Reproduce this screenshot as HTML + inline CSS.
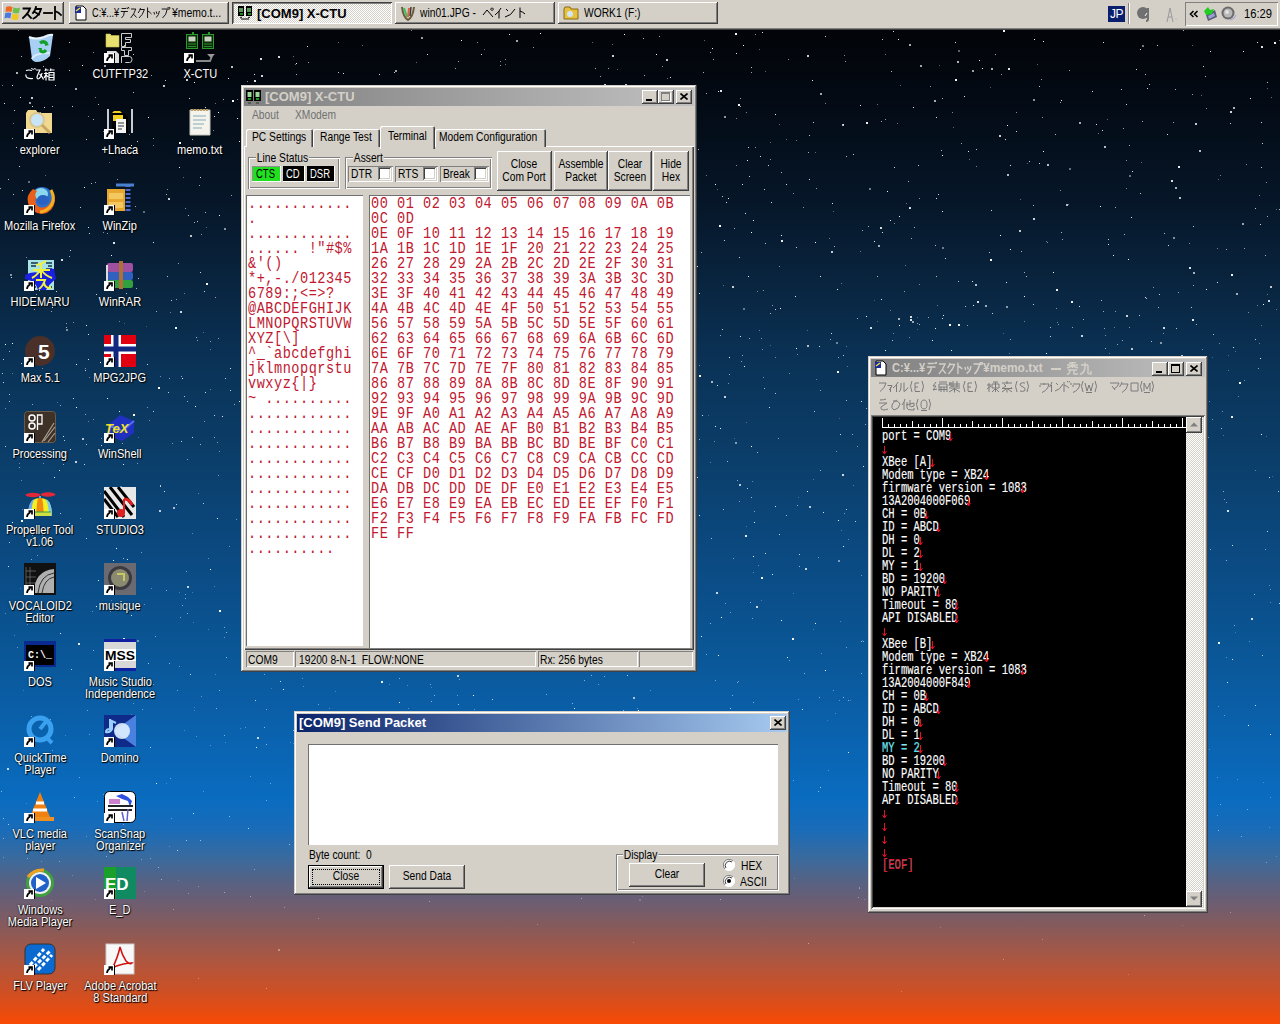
<!DOCTYPE html><html><head><meta charset="utf-8"><style>
*{box-sizing:border-box;margin:0;padding:0}
html,body{width:1280px;height:1024px;overflow:hidden}
body{position:relative;font-family:"Liberation Sans",sans-serif;font-size:12px;color:#000;
background:linear-gradient(to bottom,#d4d0c8 0,#d4d0c8 30px,#020408 30px,#030a14 100px,#061628 200px,#09243e 280px,#0a3256 360px,#0b3e6a 460px,#0b4a82 560px,#0a5696 650px,#0a60aa 720px,#0a6cc0 800px,#1a6cb8 830px,#3c6a9c 860px,#556284 880px,#6a5e74 900px,#8a5a58 930px,#ac5640 960px,#cc5026 990px,#e44c12 1010px,#fa4a04 1024px)}
.a{position:absolute}
.u{position:absolute;white-space:pre;font-size:13px;transform:scaleX(.79);transform-origin:0 0;line-height:14px}
.raised{background:#d4d0c8;box-shadow:inset -1px -1px #404040,inset 1px 1px #fff,inset -2px -2px #808080}
.win{position:absolute;background:#d4d0c8;box-shadow:inset -1px -1px #404040,inset 1px 1px #d4d0c8,inset -2px -2px #808080,inset 2px 2px #fff}
.sunk{box-shadow:inset 1px 1px #808080,inset -1px -1px #fff,inset 2px 2px #404040,inset -2px -2px #d4d0c8}
.thin{box-shadow:inset 1px 1px #808080,inset -1px -1px #fff}
.grp{position:absolute;border:1px solid #808080;box-shadow:1px 1px #fff,inset 1px 1px #fff}
.tbtn{position:absolute;width:16px;height:14px;background:#d4d0c8;box-shadow:inset -1px -1px #404040,inset 1px 1px #fff,inset -2px -2px #808080}
.lbl{position:absolute;color:#fff;font-size:12px;line-height:12px;text-align:center;white-space:pre;text-shadow:1px 1px 1px #000,0 0 2px #000}
</style></head><body>
<svg class="a" style="left:0;top:0" width="1280" height="1024"><rect x="98" y="104" width="1" height="1" fill="#fff" fill-opacity="0.73"/><rect x="185" y="594" width="1" height="1" fill="#fff" fill-opacity="0.43"/><rect x="457" y="675" width="2" height="2" fill="#fff" fill-opacity="0.73"/><rect x="812" y="80" width="1" height="1" fill="#fff" fill-opacity="0.91"/><rect x="370" y="135" width="1" height="1" fill="#fff" fill-opacity="0.59"/><rect x="1088" y="467" width="1" height="1" fill="#fff" fill-opacity="0.95"/><rect x="740" y="336" width="1" height="1" fill="#fff" fill-opacity="0.86"/><rect x="919" y="324" width="1" height="1" fill="#fff" fill-opacity="0.68"/><rect x="642" y="378" width="1" height="1" fill="#fff" fill-opacity="0.73"/><rect x="934" y="100" width="2" height="2" fill="#fff" fill-opacity="0.66"/><rect x="133" y="92" width="1" height="1" fill="#fff" fill-opacity="0.73"/><rect x="912" y="321" width="2" height="2" fill="#fff" fill-opacity="0.58"/><rect x="588" y="162" width="1" height="1" fill="#fff" fill-opacity="0.95"/><rect x="1016" y="112" width="1" height="1" fill="#fff" fill-opacity="0.53"/><rect x="1126" y="315" width="2" height="2" fill="#fff" fill-opacity="0.79"/><rect x="779" y="266" width="1" height="1" fill="#fff" fill-opacity="0.50"/><rect x="477" y="42" width="1" height="1" fill="#fff" fill-opacity="0.52"/><rect x="8" y="179" width="1" height="1" fill="#fff" fill-opacity="0.72"/><rect x="257" y="737" width="2" height="2" fill="#fff" fill-opacity="0.78"/><rect x="110" y="497" width="1" height="1" fill="#fff" fill-opacity="0.92"/><rect x="1145" y="431" width="1" height="1" fill="#fff" fill-opacity="0.66"/><rect x="820" y="93" width="2" height="2" fill="#fff" fill-opacity="0.64"/><rect x="225" y="378" width="1" height="1" fill="#fff" fill-opacity="0.72"/><rect x="1098" y="133" width="1" height="1" fill="#fff" fill-opacity="0.40"/><rect x="516" y="385" width="1" height="1" fill="#fff" fill-opacity="0.42"/><rect x="999" y="507" width="1" height="1" fill="#fff" fill-opacity="0.44"/><rect x="1081" y="335" width="2" height="2" fill="#fff" fill-opacity="0.80"/><rect x="342" y="394" width="1" height="1" fill="#fff" fill-opacity="0.86"/><rect x="820" y="787" width="1" height="1" fill="#fff" fill-opacity="0.67"/><rect x="59" y="58" width="1" height="1" fill="#fff" fill-opacity="0.48"/><rect x="1239" y="382" width="2" height="2" fill="#fff" fill-opacity="0.99"/><rect x="746" y="112" width="1" height="1" fill="#fff" fill-opacity="0.48"/><rect x="418" y="524" width="2" height="2" fill="#fff" fill-opacity="0.90"/><rect x="408" y="519" width="1" height="1" fill="#fff" fill-opacity="0.76"/><rect x="177" y="850" width="1" height="1" fill="#fff" fill-opacity="0.65"/><rect x="260" y="58" width="2" height="2" fill="#fff" fill-opacity="0.87"/><rect x="299" y="656" width="2" height="2" fill="#fff" fill-opacity="0.78"/><rect x="717" y="189" width="1" height="1" fill="#fff" fill-opacity="0.36"/><rect x="210" y="569" width="1" height="1" fill="#fff" fill-opacity="0.99"/><rect x="398" y="875" width="1" height="1" fill="#fff" fill-opacity="0.22"/><rect x="1026" y="276" width="1" height="1" fill="#fff" fill-opacity="0.70"/><rect x="268" y="92" width="1" height="1" fill="#fff" fill-opacity="0.65"/><rect x="1194" y="864" width="1" height="1" fill="#fff" fill-opacity="0.43"/><rect x="1027" y="163" width="1" height="1" fill="#fff" fill-opacity="0.36"/><rect x="8" y="824" width="1" height="1" fill="#fff" fill-opacity="0.66"/><rect x="1061" y="573" width="1" height="1" fill="#fff" fill-opacity="0.42"/><rect x="1147" y="88" width="1" height="1" fill="#fff" fill-opacity="0.85"/><rect x="1039" y="493" width="1" height="1" fill="#fff" fill-opacity="0.94"/><rect x="907" y="363" width="1" height="1" fill="#fff" fill-opacity="0.68"/><rect x="567" y="493" width="1" height="1" fill="#fff" fill-opacity="0.68"/><rect x="853" y="154" width="1" height="1" fill="#fff" fill-opacity="0.79"/><rect x="877" y="104" width="1" height="1" fill="#fff" fill-opacity="0.43"/><rect x="749" y="176" width="1" height="1" fill="#fff" fill-opacity="0.65"/><rect x="192" y="437" width="1" height="1" fill="#fff" fill-opacity="0.78"/><rect x="458" y="195" width="2" height="2" fill="#fff" fill-opacity="0.61"/><rect x="862" y="230" width="1" height="1" fill="#fff" fill-opacity="0.59"/><rect x="692" y="597" width="1" height="1" fill="#fff" fill-opacity="0.60"/><rect x="131" y="145" width="1" height="1" fill="#fff" fill-opacity="0.98"/><rect x="214" y="116" width="1" height="1" fill="#fff" fill-opacity="0.86"/><rect x="864" y="899" width="1" height="1" fill="#fff" fill-opacity="0.23"/><rect x="305" y="579" width="1" height="1" fill="#fff" fill-opacity="0.81"/><rect x="375" y="465" width="1" height="1" fill="#fff" fill-opacity="0.36"/><rect x="23" y="377" width="1" height="1" fill="#fff" fill-opacity="0.95"/><rect x="624" y="573" width="1" height="1" fill="#fff" fill-opacity="0.68"/><rect x="364" y="307" width="1" height="1" fill="#fff" fill-opacity="0.51"/><rect x="31" y="48" width="1" height="1" fill="#fff" fill-opacity="0.47"/><rect x="972" y="281" width="1" height="1" fill="#fff" fill-opacity="0.88"/><rect x="440" y="265" width="1" height="1" fill="#fff" fill-opacity="0.81"/><rect x="286" y="444" width="2" height="2" fill="#fff" fill-opacity="0.89"/><rect x="29" y="102" width="2" height="2" fill="#fff" fill-opacity="0.63"/><rect x="113" y="116" width="1" height="1" fill="#fff" fill-opacity="0.68"/><rect x="600" y="76" width="1" height="1" fill="#fff" fill-opacity="0.64"/><rect x="539" y="402" width="2" height="2" fill="#fff" fill-opacity="0.71"/><rect x="500" y="65" width="1" height="1" fill="#fff" fill-opacity="0.58"/><rect x="2" y="373" width="1" height="1" fill="#fff" fill-opacity="0.68"/><rect x="411" y="284" width="1" height="1" fill="#fff" fill-opacity="0.52"/><rect x="183" y="177" width="1" height="1" fill="#fff" fill-opacity="0.36"/><rect x="1199" y="571" width="1" height="1" fill="#fff" fill-opacity="0.93"/><rect x="1221" y="428" width="1" height="1" fill="#fff" fill-opacity="0.67"/><rect x="296" y="74" width="1" height="1" fill="#fff" fill-opacity="0.68"/><rect x="879" y="781" width="1" height="1" fill="#fff" fill-opacity="0.94"/><rect x="1032" y="612" width="1" height="1" fill="#fff" fill-opacity="0.89"/><rect x="1196" y="847" width="1" height="1" fill="#fff" fill-opacity="0.80"/><rect x="470" y="117" width="1" height="1" fill="#fff" fill-opacity="0.58"/><rect x="214" y="415" width="1" height="1" fill="#fff" fill-opacity="0.76"/><rect x="540" y="33" width="1" height="1" fill="#fff" fill-opacity="0.96"/><rect x="1096" y="124" width="1" height="1" fill="#fff" fill-opacity="0.83"/><rect x="543" y="270" width="1" height="1" fill="#fff" fill-opacity="0.83"/><rect x="942" y="535" width="1" height="1" fill="#fff" fill-opacity="0.94"/><rect x="406" y="109" width="1" height="1" fill="#fff" fill-opacity="0.77"/><rect x="623" y="666" width="1" height="1" fill="#fff" fill-opacity="0.39"/><rect x="1057" y="322" width="1" height="1" fill="#fff" fill-opacity="0.43"/><rect x="1124" y="234" width="1" height="1" fill="#fff" fill-opacity="0.66"/><rect x="1037" y="490" width="1" height="1" fill="#fff" fill-opacity="0.95"/><rect x="431" y="106" width="1" height="1" fill="#fff" fill-opacity="0.69"/><rect x="736" y="165" width="1" height="1" fill="#fff" fill-opacity="0.53"/><rect x="807" y="55" width="2" height="2" fill="#fff" fill-opacity="0.79"/><rect x="830" y="339" width="1" height="1" fill="#fff" fill-opacity="0.59"/><rect x="815" y="152" width="1" height="1" fill="#fff" fill-opacity="0.36"/><rect x="593" y="289" width="1" height="1" fill="#fff" fill-opacity="1.00"/><rect x="1206" y="108" width="1" height="1" fill="#fff" fill-opacity="0.53"/><rect x="584" y="680" width="1" height="1" fill="#fff" fill-opacity="0.52"/><rect x="1046" y="353" width="1" height="1" fill="#fff" fill-opacity="0.97"/><rect x="59" y="861" width="1" height="1" fill="#fff" fill-opacity="0.41"/><rect x="165" y="80" width="1" height="1" fill="#fff" fill-opacity="0.75"/><rect x="283" y="689" width="1" height="1" fill="#fff" fill-opacity="0.94"/><rect x="1126" y="160" width="1" height="1" fill="#fff" fill-opacity="0.53"/><rect x="523" y="786" width="1" height="1" fill="#fff" fill-opacity="0.61"/><rect x="488" y="338" width="1" height="1" fill="#fff" fill-opacity="0.43"/><rect x="331" y="106" width="2" height="2" fill="#fff" fill-opacity="0.67"/><rect x="450" y="493" width="2" height="2" fill="#fff" fill-opacity="0.64"/><rect x="185" y="208" width="1" height="1" fill="#fff" fill-opacity="0.51"/><rect x="41" y="797" width="1" height="1" fill="#fff" fill-opacity="0.83"/><rect x="430" y="415" width="1" height="1" fill="#fff" fill-opacity="0.67"/><rect x="1030" y="571" width="2" height="2" fill="#fff" fill-opacity="0.49"/><rect x="639" y="899" width="2" height="2" fill="#fff" fill-opacity="0.19"/><rect x="870" y="756" width="1" height="1" fill="#fff" fill-opacity="0.98"/><rect x="1003" y="30" width="2" height="2" fill="#fff" fill-opacity="0.95"/><rect x="919" y="284" width="1" height="1" fill="#fff" fill-opacity="0.45"/><rect x="936" y="117" width="1" height="1" fill="#fff" fill-opacity="0.86"/><rect x="476" y="613" width="1" height="1" fill="#fff" fill-opacity="0.55"/><rect x="895" y="745" width="1" height="1" fill="#fff" fill-opacity="0.55"/><rect x="1193" y="226" width="1" height="1" fill="#fff" fill-opacity="0.74"/><rect x="943" y="315" width="1" height="1" fill="#fff" fill-opacity="0.92"/><rect x="505" y="59" width="1" height="1" fill="#fff" fill-opacity="0.55"/><rect x="44" y="228" width="1" height="1" fill="#fff" fill-opacity="0.62"/><rect x="526" y="263" width="2" height="2" fill="#fff" fill-opacity="0.50"/><rect x="861" y="401" width="1" height="1" fill="#fff" fill-opacity="0.87"/><rect x="1033" y="99" width="2" height="2" fill="#fff" fill-opacity="0.55"/><rect x="397" y="266" width="1" height="1" fill="#fff" fill-opacity="0.93"/><rect x="1218" y="179" width="1" height="1" fill="#fff" fill-opacity="0.37"/><rect x="1220" y="175" width="1" height="1" fill="#fff" fill-opacity="0.47"/><rect x="390" y="219" width="1" height="1" fill="#fff" fill-opacity="0.65"/><rect x="638" y="710" width="1" height="1" fill="#fff" fill-opacity="0.99"/><rect x="906" y="203" width="1" height="1" fill="#fff" fill-opacity="0.40"/><rect x="424" y="419" width="1" height="1" fill="#fff" fill-opacity="0.88"/><rect x="885" y="119" width="1" height="1" fill="#fff" fill-opacity="0.59"/><rect x="914" y="227" width="1" height="1" fill="#fff" fill-opacity="0.66"/><rect x="841" y="283" width="1" height="1" fill="#fff" fill-opacity="0.38"/><rect x="126" y="293" width="1" height="1" fill="#fff" fill-opacity="0.74"/><rect x="743" y="308" width="2" height="2" fill="#fff" fill-opacity="0.38"/><rect x="7" y="768" width="2" height="2" fill="#fff" fill-opacity="0.76"/><rect x="133" y="54" width="1" height="1" fill="#fff" fill-opacity="0.82"/><rect x="1010" y="165" width="1" height="1" fill="#fff" fill-opacity="0.87"/><rect x="654" y="501" width="1" height="1" fill="#fff" fill-opacity="0.40"/><rect x="404" y="431" width="1" height="1" fill="#fff" fill-opacity="0.39"/><rect x="69" y="523" width="1" height="1" fill="#fff" fill-opacity="0.99"/><rect x="215" y="103" width="1" height="1" fill="#fff" fill-opacity="0.41"/><rect x="1020" y="756" width="1" height="1" fill="#fff" fill-opacity="0.44"/><rect x="943" y="665" width="1" height="1" fill="#fff" fill-opacity="0.70"/><rect x="248" y="828" width="1" height="1" fill="#fff" fill-opacity="0.72"/><rect x="763" y="290" width="1" height="1" fill="#fff" fill-opacity="0.51"/><rect x="502" y="271" width="2" height="2" fill="#fff" fill-opacity="0.73"/><rect x="668" y="96" width="2" height="2" fill="#fff" fill-opacity="0.68"/><rect x="473" y="695" width="1" height="1" fill="#fff" fill-opacity="0.99"/><rect x="209" y="34" width="1" height="1" fill="#fff" fill-opacity="0.90"/><rect x="765" y="71" width="1" height="1" fill="#fff" fill-opacity="0.38"/><rect x="153" y="411" width="1" height="1" fill="#fff" fill-opacity="0.74"/><rect x="12" y="138" width="1" height="1" fill="#fff" fill-opacity="0.58"/><rect x="76" y="407" width="1" height="1" fill="#fff" fill-opacity="1.00"/><rect x="78" y="643" width="2" height="2" fill="#fff" fill-opacity="0.88"/><rect x="670" y="448" width="1" height="1" fill="#fff" fill-opacity="0.55"/><rect x="416" y="62" width="1" height="1" fill="#fff" fill-opacity="0.39"/><rect x="1126" y="188" width="1" height="1" fill="#fff" fill-opacity="0.46"/><rect x="555" y="449" width="1" height="1" fill="#fff" fill-opacity="0.62"/><rect x="105" y="349" width="2" height="2" fill="#fff" fill-opacity="0.62"/><rect x="829" y="238" width="1" height="1" fill="#fff" fill-opacity="0.45"/><rect x="1129" y="175" width="2" height="2" fill="#fff" fill-opacity="0.41"/><rect x="1033" y="205" width="1" height="1" fill="#fff" fill-opacity="0.69"/><rect x="137" y="141" width="1" height="1" fill="#fff" fill-opacity="0.86"/><rect x="109" y="652" width="1" height="1" fill="#fff" fill-opacity="0.94"/><rect x="1270" y="734" width="1" height="1" fill="#fff" fill-opacity="0.86"/><rect x="1060" y="190" width="1" height="1" fill="#fff" fill-opacity="0.51"/><rect x="394" y="72" width="1" height="1" fill="#fff" fill-opacity="0.79"/><rect x="663" y="150" width="1" height="1" fill="#fff" fill-opacity="0.90"/><rect x="1193" y="285" width="1" height="1" fill="#fff" fill-opacity="0.64"/><rect x="1267" y="531" width="1" height="1" fill="#fff" fill-opacity="0.75"/><rect x="263" y="397" width="1" height="1" fill="#fff" fill-opacity="0.64"/><rect x="266" y="114" width="1" height="1" fill="#fff" fill-opacity="0.82"/><rect x="163" y="85" width="2" height="2" fill="#fff" fill-opacity="0.77"/><rect x="278" y="56" width="2" height="2" fill="#fff" fill-opacity="0.83"/><rect x="224" y="228" width="2" height="2" fill="#fff" fill-opacity="0.54"/><rect x="338" y="732" width="2" height="2" fill="#fff" fill-opacity="0.39"/><rect x="718" y="655" width="1" height="1" fill="#fff" fill-opacity="0.93"/><rect x="294" y="290" width="2" height="2" fill="#fff" fill-opacity="0.49"/><rect x="538" y="660" width="1" height="1" fill="#fff" fill-opacity="0.37"/><rect x="771" y="202" width="1" height="1" fill="#fff" fill-opacity="0.85"/><rect x="99" y="681" width="2" height="2" fill="#fff" fill-opacity="0.64"/><rect x="1067" y="623" width="2" height="2" fill="#fff" fill-opacity="0.51"/><rect x="1097" y="674" width="1" height="1" fill="#fff" fill-opacity="0.59"/><rect x="769" y="407" width="1" height="1" fill="#fff" fill-opacity="0.85"/><rect x="905" y="265" width="1" height="1" fill="#fff" fill-opacity="0.38"/><rect x="1056" y="289" width="2" height="2" fill="#fff" fill-opacity="0.92"/><rect x="69" y="256" width="1" height="1" fill="#fff" fill-opacity="0.63"/><rect x="1049" y="402" width="1" height="1" fill="#fff" fill-opacity="0.50"/><rect x="93" y="52" width="1" height="1" fill="#fff" fill-opacity="0.55"/><rect x="1071" y="395" width="1" height="1" fill="#fff" fill-opacity="0.55"/><rect x="273" y="239" width="1" height="1" fill="#fff" fill-opacity="0.45"/><rect x="552" y="441" width="2" height="2" fill="#fff" fill-opacity="0.39"/><rect x="1184" y="484" width="1" height="1" fill="#fff" fill-opacity="0.67"/><rect x="380" y="273" width="2" height="2" fill="#fff" fill-opacity="0.42"/><rect x="1254" y="594" width="1" height="1" fill="#fff" fill-opacity="0.62"/><rect x="1061" y="652" width="1" height="1" fill="#fff" fill-opacity="0.62"/><rect x="1255" y="208" width="1" height="1" fill="#fff" fill-opacity="0.76"/><rect x="952" y="112" width="1" height="1" fill="#fff" fill-opacity="0.50"/><rect x="215" y="297" width="1" height="1" fill="#fff" fill-opacity="0.57"/><rect x="1071" y="301" width="2" height="2" fill="#fff" fill-opacity="0.93"/><rect x="347" y="296" width="1" height="1" fill="#fff" fill-opacity="0.48"/><rect x="326" y="794" width="1" height="1" fill="#fff" fill-opacity="0.60"/><rect x="1231" y="274" width="2" height="2" fill="#fff" fill-opacity="0.95"/><rect x="1098" y="510" width="1" height="1" fill="#fff" fill-opacity="0.35"/><rect x="54" y="477" width="1" height="1" fill="#fff" fill-opacity="0.93"/><rect x="434" y="430" width="1" height="1" fill="#fff" fill-opacity="0.94"/><rect x="296" y="63" width="1" height="1" fill="#fff" fill-opacity="0.95"/><rect x="706" y="175" width="1" height="1" fill="#fff" fill-opacity="0.44"/><rect x="95" y="97" width="1" height="1" fill="#fff" fill-opacity="0.48"/><rect x="786" y="139" width="1" height="1" fill="#fff" fill-opacity="0.37"/><rect x="200" y="840" width="1" height="1" fill="#fff" fill-opacity="0.56"/><rect x="1232" y="545" width="1" height="1" fill="#fff" fill-opacity="0.83"/><rect x="845" y="61" width="1" height="1" fill="#fff" fill-opacity="0.58"/><rect x="98" y="580" width="1" height="1" fill="#fff" fill-opacity="0.89"/><rect x="893" y="31" width="1" height="1" fill="#fff" fill-opacity="0.84"/><rect x="110" y="34" width="1" height="1" fill="#fff" fill-opacity="0.80"/><rect x="377" y="536" width="2" height="2" fill="#fff" fill-opacity="0.68"/><rect x="1020" y="199" width="1" height="1" fill="#fff" fill-opacity="0.40"/><rect x="808" y="943" width="1" height="1" fill="#fff" fill-opacity="0.42"/><rect x="539" y="468" width="1" height="1" fill="#fff" fill-opacity="0.60"/><rect x="1088" y="638" width="1" height="1" fill="#fff" fill-opacity="0.77"/><rect x="318" y="918" width="1" height="1" fill="#fff" fill-opacity="0.37"/><rect x="347" y="504" width="1" height="1" fill="#fff" fill-opacity="0.73"/><rect x="258" y="372" width="2" height="2" fill="#fff" fill-opacity="0.50"/><rect x="392" y="303" width="1" height="1" fill="#fff" fill-opacity="0.90"/><rect x="671" y="223" width="2" height="2" fill="#fff" fill-opacity="1.00"/><rect x="786" y="184" width="1" height="1" fill="#fff" fill-opacity="0.83"/><rect x="890" y="310" width="1" height="1" fill="#fff" fill-opacity="0.42"/><rect x="69" y="42" width="1" height="1" fill="#fff" fill-opacity="0.80"/><rect x="45" y="175" width="1" height="1" fill="#fff" fill-opacity="0.35"/><rect x="1175" y="631" width="1" height="1" fill="#fff" fill-opacity="0.50"/><rect x="885" y="350" width="1" height="1" fill="#fff" fill-opacity="0.93"/><rect x="320" y="286" width="1" height="1" fill="#fff" fill-opacity="0.36"/><rect x="838" y="560" width="2" height="2" fill="#fff" fill-opacity="0.47"/><rect x="1003" y="959" width="1" height="1" fill="#fff" fill-opacity="0.32"/><rect x="329" y="763" width="2" height="2" fill="#fff" fill-opacity="0.69"/><rect x="1108" y="239" width="1" height="1" fill="#fff" fill-opacity="0.77"/><rect x="935" y="245" width="1" height="1" fill="#fff" fill-opacity="0.68"/><rect x="250" y="776" width="1" height="1" fill="#fff" fill-opacity="0.39"/><rect x="561" y="421" width="1" height="1" fill="#fff" fill-opacity="0.62"/><rect x="861" y="673" width="1" height="1" fill="#fff" fill-opacity="0.52"/><rect x="459" y="340" width="2" height="2" fill="#fff" fill-opacity="0.69"/><rect x="448" y="850" width="1" height="1" fill="#fff" fill-opacity="0.46"/><rect x="141" y="859" width="1" height="1" fill="#fff" fill-opacity="0.35"/><rect x="462" y="864" width="1" height="1" fill="#fff" fill-opacity="0.34"/><rect x="846" y="509" width="1" height="1" fill="#fff" fill-opacity="0.77"/><rect x="961" y="393" width="1" height="1" fill="#fff" fill-opacity="0.81"/><rect x="519" y="466" width="1" height="1" fill="#fff" fill-opacity="0.87"/><rect x="575" y="396" width="1" height="1" fill="#fff" fill-opacity="0.66"/><rect x="877" y="668" width="1" height="1" fill="#fff" fill-opacity="0.59"/><rect x="664" y="832" width="1" height="1" fill="#fff" fill-opacity="0.57"/><rect x="1192" y="45" width="1" height="1" fill="#fff" fill-opacity="0.40"/><rect x="600" y="286" width="1" height="1" fill="#fff" fill-opacity="0.91"/><rect x="312" y="243" width="1" height="1" fill="#fff" fill-opacity="0.46"/><rect x="608" y="232" width="1" height="1" fill="#fff" fill-opacity="0.40"/><rect x="898" y="717" width="1" height="1" fill="#fff" fill-opacity="0.52"/><rect x="1006" y="282" width="1" height="1" fill="#fff" fill-opacity="0.91"/><rect x="13" y="194" width="1" height="1" fill="#fff" fill-opacity="0.72"/><rect x="872" y="458" width="1" height="1" fill="#fff" fill-opacity="0.47"/><rect x="738" y="681" width="1" height="1" fill="#fff" fill-opacity="0.38"/><rect x="676" y="858" width="1" height="1" fill="#fff" fill-opacity="0.30"/><rect x="295" y="64" width="1" height="1" fill="#fff" fill-opacity="0.43"/><rect x="699" y="515" width="1" height="1" fill="#fff" fill-opacity="0.94"/><rect x="581" y="475" width="1" height="1" fill="#fff" fill-opacity="0.38"/><rect x="592" y="329" width="1" height="1" fill="#fff" fill-opacity="0.57"/><rect x="612" y="160" width="1" height="1" fill="#fff" fill-opacity="0.86"/><rect x="82" y="438" width="2" height="2" fill="#fff" fill-opacity="0.70"/><rect x="101" y="438" width="1" height="1" fill="#fff" fill-opacity="0.47"/><rect x="972" y="653" width="1" height="1" fill="#fff" fill-opacity="0.68"/><rect x="301" y="671" width="1" height="1" fill="#fff" fill-opacity="0.92"/><rect x="937" y="670" width="1" height="1" fill="#fff" fill-opacity="0.47"/><rect x="75" y="461" width="2" height="2" fill="#fff" fill-opacity="0.78"/><rect x="633" y="605" width="2" height="2" fill="#fff" fill-opacity="0.47"/><rect x="1159" y="687" width="2" height="2" fill="#fff" fill-opacity="0.67"/><rect x="1069" y="70" width="1" height="1" fill="#fff" fill-opacity="0.62"/><rect x="792" y="638" width="2" height="2" fill="#fff" fill-opacity="0.99"/><rect x="208" y="114" width="1" height="1" fill="#fff" fill-opacity="0.45"/><rect x="248" y="162" width="1" height="1" fill="#fff" fill-opacity="0.72"/><rect x="923" y="781" width="2" height="2" fill="#fff" fill-opacity="0.59"/><rect x="296" y="777" width="1" height="1" fill="#fff" fill-opacity="0.71"/><rect x="1020" y="501" width="2" height="2" fill="#fff" fill-opacity="0.94"/><rect x="124" y="45" width="1" height="1" fill="#fff" fill-opacity="0.75"/><rect x="796" y="348" width="1" height="1" fill="#fff" fill-opacity="0.97"/><rect x="752" y="618" width="1" height="1" fill="#fff" fill-opacity="0.46"/><rect x="239" y="401" width="1" height="1" fill="#fff" fill-opacity="0.87"/><rect x="976" y="424" width="1" height="1" fill="#fff" fill-opacity="0.53"/><rect x="1160" y="371" width="1" height="1" fill="#fff" fill-opacity="0.98"/><rect x="1228" y="370" width="1" height="1" fill="#fff" fill-opacity="0.36"/><rect x="309" y="645" width="1" height="1" fill="#fff" fill-opacity="0.98"/><rect x="504" y="415" width="1" height="1" fill="#fff" fill-opacity="0.85"/><rect x="3" y="359" width="1" height="1" fill="#fff" fill-opacity="0.73"/><rect x="86" y="325" width="1" height="1" fill="#fff" fill-opacity="0.91"/><rect x="1171" y="180" width="2" height="2" fill="#fff" fill-opacity="0.87"/><rect x="1023" y="385" width="1" height="1" fill="#fff" fill-opacity="0.67"/><rect x="781" y="235" width="1" height="1" fill="#fff" fill-opacity="0.99"/><rect x="809" y="506" width="2" height="2" fill="#fff" fill-opacity="0.73"/><rect x="1107" y="119" width="1" height="1" fill="#fff" fill-opacity="0.39"/><rect x="815" y="623" width="1" height="1" fill="#fff" fill-opacity="0.89"/><rect x="657" y="518" width="1" height="1" fill="#fff" fill-opacity="0.49"/><rect x="188" y="215" width="1" height="1" fill="#fff" fill-opacity="0.73"/><rect x="735" y="442" width="2" height="2" fill="#fff" fill-opacity="0.51"/><rect x="1010" y="413" width="1" height="1" fill="#fff" fill-opacity="0.65"/><rect x="167" y="189" width="1" height="1" fill="#fff" fill-opacity="0.53"/><rect x="1243" y="51" width="1" height="1" fill="#fff" fill-opacity="0.92"/><rect x="1158" y="527" width="1" height="1" fill="#fff" fill-opacity="0.95"/><rect x="1246" y="164" width="1" height="1" fill="#fff" fill-opacity="0.48"/><rect x="104" y="65" width="2" height="2" fill="#fff" fill-opacity="0.65"/><rect x="184" y="293" width="1" height="1" fill="#fff" fill-opacity="0.41"/><rect x="327" y="409" width="2" height="2" fill="#fff" fill-opacity="0.49"/><rect x="720" y="90" width="2" height="2" fill="#fff" fill-opacity="0.89"/><rect x="96" y="294" width="1" height="1" fill="#fff" fill-opacity="0.77"/><rect x="990" y="87" width="1" height="1" fill="#fff" fill-opacity="0.35"/><rect x="407" y="723" width="1" height="1" fill="#fff" fill-opacity="0.64"/><rect x="25" y="509" width="1" height="1" fill="#fff" fill-opacity="0.37"/><rect x="451" y="109" width="2" height="2" fill="#fff" fill-opacity="0.93"/><rect x="198" y="978" width="1" height="1" fill="#fff" fill-opacity="0.34"/><rect x="926" y="377" width="1" height="1" fill="#fff" fill-opacity="0.43"/><rect x="749" y="176" width="1" height="1" fill="#fff" fill-opacity="0.47"/><rect x="924" y="596" width="1" height="1" fill="#fff" fill-opacity="0.45"/><rect x="52" y="307" width="1" height="1" fill="#fff" fill-opacity="0.87"/><rect x="432" y="603" width="1" height="1" fill="#fff" fill-opacity="0.52"/><rect x="412" y="403" width="1" height="1" fill="#fff" fill-opacity="0.51"/><rect x="487" y="129" width="1" height="1" fill="#fff" fill-opacity="0.46"/><rect x="601" y="177" width="1" height="1" fill="#fff" fill-opacity="0.87"/><rect x="3" y="838" width="1" height="1" fill="#fff" fill-opacity="0.47"/><rect x="891" y="71" width="1" height="1" fill="#fff" fill-opacity="0.72"/><rect x="1230" y="111" width="2" height="2" fill="#fff" fill-opacity="0.83"/><rect x="560" y="209" width="1" height="1" fill="#fff" fill-opacity="0.81"/><rect x="20" y="97" width="1" height="1" fill="#fff" fill-opacity="0.90"/><rect x="113" y="560" width="1" height="1" fill="#fff" fill-opacity="0.90"/><rect x="976" y="166" width="1" height="1" fill="#fff" fill-opacity="0.47"/><rect x="751" y="67" width="1" height="1" fill="#fff" fill-opacity="0.74"/><rect x="9" y="394" width="1" height="1" fill="#fff" fill-opacity="0.69"/><rect x="247" y="395" width="1" height="1" fill="#fff" fill-opacity="0.91"/><rect x="781" y="620" width="1" height="1" fill="#fff" fill-opacity="0.92"/><rect x="1013" y="487" width="1" height="1" fill="#fff" fill-opacity="0.70"/><rect x="42" y="279" width="1" height="1" fill="#fff" fill-opacity="0.47"/><rect x="210" y="349" width="1" height="1" fill="#fff" fill-opacity="0.37"/><rect x="1227" y="682" width="1" height="1" fill="#fff" fill-opacity="0.81"/><rect x="210" y="389" width="1" height="1" fill="#fff" fill-opacity="0.38"/><rect x="252" y="506" width="1" height="1" fill="#fff" fill-opacity="0.53"/><rect x="249" y="154" width="1" height="1" fill="#fff" fill-opacity="0.73"/><rect x="464" y="180" width="1" height="1" fill="#fff" fill-opacity="0.61"/><rect x="861" y="641" width="1" height="1" fill="#fff" fill-opacity="0.61"/><rect x="820" y="276" width="1" height="1" fill="#fff" fill-opacity="0.90"/><rect x="1155" y="853" width="1" height="1" fill="#fff" fill-opacity="0.27"/><rect x="1149" y="84" width="1" height="1" fill="#fff" fill-opacity="0.79"/><rect x="723" y="285" width="1" height="1" fill="#fff" fill-opacity="0.36"/><rect x="42" y="260" width="2" height="2" fill="#fff" fill-opacity="0.85"/><rect x="82" y="65" width="1" height="1" fill="#fff" fill-opacity="0.95"/><rect x="1276" y="309" width="1" height="1" fill="#fff" fill-opacity="0.37"/><rect x="123" y="638" width="2" height="2" fill="#fff" fill-opacity="0.94"/><rect x="173" y="507" width="2" height="2" fill="#fff" fill-opacity="0.64"/><rect x="1047" y="164" width="2" height="2" fill="#fff" fill-opacity="0.73"/><rect x="561" y="279" width="1" height="1" fill="#fff" fill-opacity="0.54"/><rect x="930" y="654" width="1" height="1" fill="#fff" fill-opacity="0.60"/><rect x="1122" y="340" width="1" height="1" fill="#fff" fill-opacity="0.55"/><rect x="496" y="371" width="1" height="1" fill="#fff" fill-opacity="0.60"/><rect x="722" y="196" width="1" height="1" fill="#fff" fill-opacity="0.71"/><rect x="1006" y="306" width="2" height="2" fill="#fff" fill-opacity="0.54"/><rect x="44" y="192" width="1" height="1" fill="#fff" fill-opacity="0.58"/><rect x="127" y="559" width="1" height="1" fill="#fff" fill-opacity="0.83"/><rect x="316" y="456" width="1" height="1" fill="#fff" fill-opacity="0.79"/><rect x="1262" y="655" width="1" height="1" fill="#fff" fill-opacity="0.69"/><rect x="973" y="305" width="1" height="1" fill="#fff" fill-opacity="0.94"/><rect x="260" y="452" width="1" height="1" fill="#fff" fill-opacity="0.85"/><rect x="1199" y="150" width="2" height="2" fill="#fff" fill-opacity="0.72"/><rect x="722" y="329" width="1" height="1" fill="#fff" fill-opacity="0.74"/><rect x="659" y="36" width="1" height="1" fill="#fff" fill-opacity="0.67"/><rect x="909" y="337" width="1" height="1" fill="#fff" fill-opacity="0.44"/><rect x="1178" y="416" width="1" height="1" fill="#fff" fill-opacity="0.95"/><rect x="496" y="363" width="1" height="1" fill="#fff" fill-opacity="0.94"/><rect x="21" y="56" width="1" height="1" fill="#fff" fill-opacity="0.67"/><rect x="1269" y="477" width="1" height="1" fill="#fff" fill-opacity="0.80"/><rect x="797" y="505" width="1" height="1" fill="#fff" fill-opacity="0.58"/><rect x="469" y="131" width="1" height="1" fill="#fff" fill-opacity="0.77"/><rect x="1175" y="187" width="2" height="2" fill="#fff" fill-opacity="0.67"/><rect x="1203" y="381" width="1" height="1" fill="#fff" fill-opacity="0.41"/><rect x="742" y="355" width="1" height="1" fill="#fff" fill-opacity="0.55"/><rect x="359" y="143" width="1" height="1" fill="#fff" fill-opacity="0.57"/><rect x="1042" y="939" width="1" height="1" fill="#fff" fill-opacity="0.31"/><rect x="1047" y="242" width="1" height="1" fill="#fff" fill-opacity="0.47"/><rect x="1167" y="676" width="1" height="1" fill="#fff" fill-opacity="0.62"/><rect x="5" y="344" width="1" height="1" fill="#fff" fill-opacity="0.95"/><rect x="358" y="539" width="1" height="1" fill="#fff" fill-opacity="0.92"/><rect x="1088" y="556" width="1" height="1" fill="#fff" fill-opacity="0.62"/><rect x="248" y="178" width="1" height="1" fill="#fff" fill-opacity="0.42"/><rect x="205" y="107" width="1" height="1" fill="#fff" fill-opacity="0.89"/><rect x="1255" y="470" width="1" height="1" fill="#fff" fill-opacity="0.36"/><rect x="487" y="392" width="1" height="1" fill="#fff" fill-opacity="0.76"/><rect x="1192" y="94" width="1" height="1" fill="#fff" fill-opacity="0.60"/><rect x="111" y="255" width="1" height="1" fill="#fff" fill-opacity="0.97"/><rect x="900" y="85" width="1" height="1" fill="#fff" fill-opacity="0.38"/><rect x="932" y="340" width="1" height="1" fill="#fff" fill-opacity="0.93"/><rect x="138" y="278" width="1" height="1" fill="#fff" fill-opacity="0.73"/><rect x="846" y="346" width="1" height="1" fill="#fff" fill-opacity="0.36"/><rect x="498" y="119" width="1" height="1" fill="#fff" fill-opacity="0.47"/><rect x="595" y="435" width="1" height="1" fill="#fff" fill-opacity="0.70"/><rect x="789" y="373" width="1" height="1" fill="#fff" fill-opacity="0.43"/><rect x="51" y="379" width="1" height="1" fill="#fff" fill-opacity="0.43"/><rect x="402" y="306" width="1" height="1" fill="#fff" fill-opacity="0.71"/><rect x="956" y="886" width="1" height="1" fill="#fff" fill-opacity="0.27"/><rect x="1189" y="243" width="1" height="1" fill="#fff" fill-opacity="0.48"/><rect x="534" y="640" width="1" height="1" fill="#fff" fill-opacity="0.59"/><rect x="504" y="443" width="1" height="1" fill="#fff" fill-opacity="0.92"/><rect x="788" y="59" width="1" height="1" fill="#fff" fill-opacity="0.55"/><rect x="362" y="824" width="1" height="1" fill="#fff" fill-opacity="0.78"/><rect x="223" y="99" width="1" height="1" fill="#fff" fill-opacity="0.68"/><rect x="637" y="120" width="1" height="1" fill="#fff" fill-opacity="0.82"/><rect x="578" y="394" width="2" height="2" fill="#fff" fill-opacity="0.85"/><rect x="60" y="405" width="1" height="1" fill="#fff" fill-opacity="0.58"/><rect x="844" y="55" width="1" height="1" fill="#fff" fill-opacity="0.51"/><rect x="820" y="390" width="1" height="1" fill="#fff" fill-opacity="0.54"/><rect x="448" y="759" width="1" height="1" fill="#fff" fill-opacity="0.75"/><rect x="882" y="232" width="1" height="1" fill="#fff" fill-opacity="0.83"/><rect x="1131" y="348" width="2" height="2" fill="#fff" fill-opacity="0.72"/><rect x="466" y="613" width="1" height="1" fill="#fff" fill-opacity="0.95"/><rect x="1178" y="387" width="1" height="1" fill="#fff" fill-opacity="0.85"/><rect x="1198" y="651" width="2" height="2" fill="#fff" fill-opacity="0.79"/><rect x="707" y="797" width="1" height="1" fill="#fff" fill-opacity="0.83"/><rect x="1079" y="122" width="2" height="2" fill="#fff" fill-opacity="0.64"/><rect x="421" y="468" width="1" height="1" fill="#fff" fill-opacity="0.86"/><rect x="1145" y="297" width="1" height="1" fill="#fff" fill-opacity="0.86"/><rect x="121" y="202" width="1" height="1" fill="#fff" fill-opacity="0.48"/><rect x="636" y="170" width="1" height="1" fill="#fff" fill-opacity="0.79"/><rect x="290" y="631" width="1" height="1" fill="#fff" fill-opacity="0.88"/><rect x="1122" y="464" width="1" height="1" fill="#fff" fill-opacity="0.78"/><rect x="1226" y="502" width="1" height="1" fill="#fff" fill-opacity="0.48"/><rect x="592" y="42" width="1" height="1" fill="#fff" fill-opacity="0.39"/><rect x="575" y="341" width="1" height="1" fill="#fff" fill-opacity="0.64"/><rect x="231" y="195" width="1" height="1" fill="#fff" fill-opacity="0.59"/><rect x="22" y="509" width="1" height="1" fill="#fff" fill-opacity="0.40"/><rect x="753" y="220" width="1" height="1" fill="#fff" fill-opacity="0.93"/><rect x="345" y="134" width="1" height="1" fill="#fff" fill-opacity="0.83"/><rect x="729" y="357" width="1" height="1" fill="#fff" fill-opacity="0.95"/><rect x="219" y="610" width="2" height="2" fill="#fff" fill-opacity="1.00"/><rect x="443" y="536" width="1" height="1" fill="#fff" fill-opacity="1.00"/><rect x="1234" y="625" width="1" height="1" fill="#fff" fill-opacity="0.50"/><rect x="283" y="483" width="1" height="1" fill="#fff" fill-opacity="0.99"/><rect x="762" y="32" width="1" height="1" fill="#fff" fill-opacity="0.89"/><rect x="898" y="39" width="1" height="1" fill="#fff" fill-opacity="0.94"/><rect x="336" y="417" width="1" height="1" fill="#fff" fill-opacity="0.72"/><rect x="943" y="468" width="2" height="2" fill="#fff" fill-opacity="0.91"/><rect x="821" y="653" width="1" height="1" fill="#fff" fill-opacity="0.39"/><rect x="678" y="653" width="1" height="1" fill="#fff" fill-opacity="0.62"/><rect x="754" y="522" width="1" height="1" fill="#fff" fill-opacity="0.91"/><rect x="386" y="257" width="1" height="1" fill="#fff" fill-opacity="0.41"/><rect x="1185" y="410" width="2" height="2" fill="#fff" fill-opacity="0.58"/><rect x="492" y="608" width="1" height="1" fill="#fff" fill-opacity="0.50"/><rect x="415" y="591" width="1" height="1" fill="#fff" fill-opacity="0.89"/><rect x="194" y="222" width="1" height="1" fill="#fff" fill-opacity="0.67"/><rect x="1030" y="593" width="1" height="1" fill="#fff" fill-opacity="0.97"/><rect x="1055" y="134" width="1" height="1" fill="#fff" fill-opacity="0.70"/><rect x="392" y="606" width="1" height="1" fill="#fff" fill-opacity="0.59"/><rect x="1267" y="88" width="1" height="1" fill="#fff" fill-opacity="0.38"/><rect x="1217" y="248" width="1" height="1" fill="#fff" fill-opacity="0.44"/><rect x="179" y="666" width="1" height="1" fill="#fff" fill-opacity="0.42"/><rect x="726" y="202" width="1" height="1" fill="#fff" fill-opacity="0.87"/><rect x="490" y="411" width="1" height="1" fill="#fff" fill-opacity="0.58"/><rect x="1001" y="74" width="1" height="1" fill="#fff" fill-opacity="0.58"/><rect x="496" y="290" width="1" height="1" fill="#fff" fill-opacity="0.36"/><rect x="529" y="219" width="2" height="2" fill="#fff" fill-opacity="0.92"/><rect x="512" y="581" width="1" height="1" fill="#fff" fill-opacity="0.52"/><rect x="909" y="44" width="2" height="2" fill="#fff" fill-opacity="0.67"/><rect x="72" y="106" width="1" height="1" fill="#fff" fill-opacity="0.79"/><rect x="324" y="739" width="1" height="1" fill="#fff" fill-opacity="0.92"/><rect x="268" y="633" width="1" height="1" fill="#fff" fill-opacity="0.88"/><rect x="957" y="369" width="1" height="1" fill="#fff" fill-opacity="0.58"/><rect x="12" y="373" width="1" height="1" fill="#fff" fill-opacity="0.36"/><rect x="940" y="927" width="1" height="1" fill="#fff" fill-opacity="0.20"/><rect x="294" y="309" width="1" height="1" fill="#fff" fill-opacity="0.99"/><rect x="730" y="612" width="1" height="1" fill="#fff" fill-opacity="0.44"/><rect x="872" y="678" width="1" height="1" fill="#fff" fill-opacity="0.86"/><rect x="502" y="388" width="1" height="1" fill="#fff" fill-opacity="0.57"/><rect x="715" y="184" width="1" height="1" fill="#fff" fill-opacity="0.92"/><rect x="928" y="444" width="1" height="1" fill="#fff" fill-opacity="0.55"/><rect x="1171" y="594" width="2" height="2" fill="#fff" fill-opacity="0.40"/><rect x="389" y="627" width="1" height="1" fill="#fff" fill-opacity="0.55"/><rect x="723" y="509" width="1" height="1" fill="#fff" fill-opacity="0.63"/><rect x="358" y="312" width="1" height="1" fill="#fff" fill-opacity="0.84"/><rect x="548" y="272" width="1" height="1" fill="#fff" fill-opacity="0.61"/><rect x="150" y="858" width="1" height="1" fill="#fff" fill-opacity="0.37"/><rect x="10" y="222" width="1" height="1" fill="#fff" fill-opacity="0.36"/><rect x="658" y="364" width="1" height="1" fill="#fff" fill-opacity="0.67"/><rect x="1248" y="725" width="1" height="1" fill="#fff" fill-opacity="0.91"/><rect x="93" y="119" width="1" height="1" fill="#fff" fill-opacity="0.67"/><rect x="648" y="607" width="1" height="1" fill="#fff" fill-opacity="0.62"/><rect x="674" y="190" width="1" height="1" fill="#fff" fill-opacity="0.44"/><rect x="184" y="396" width="1" height="1" fill="#fff" fill-opacity="0.70"/><rect x="1267" y="294" width="1" height="1" fill="#fff" fill-opacity="0.37"/><rect x="633" y="697" width="2" height="2" fill="#fff" fill-opacity="0.64"/><rect x="569" y="400" width="2" height="2" fill="#fff" fill-opacity="0.44"/><rect x="18" y="601" width="1" height="1" fill="#fff" fill-opacity="0.85"/><rect x="742" y="184" width="1" height="1" fill="#fff" fill-opacity="0.84"/><rect x="274" y="155" width="1" height="1" fill="#fff" fill-opacity="0.71"/><rect x="372" y="295" width="1" height="1" fill="#fff" fill-opacity="0.45"/><rect x="496" y="482" width="1" height="1" fill="#fff" fill-opacity="0.76"/><rect x="942" y="247" width="2" height="2" fill="#fff" fill-opacity="0.42"/><rect x="31" y="97" width="2" height="2" fill="#fff" fill-opacity="0.79"/><rect x="718" y="91" width="1" height="1" fill="#fff" fill-opacity="0.94"/><rect x="458" y="61" width="1" height="1" fill="#fff" fill-opacity="0.63"/><rect x="1021" y="251" width="1" height="1" fill="#fff" fill-opacity="0.66"/><rect x="8" y="527" width="1" height="1" fill="#fff" fill-opacity="0.56"/><rect x="1249" y="641" width="1" height="1" fill="#fff" fill-opacity="0.38"/><rect x="429" y="901" width="1" height="1" fill="#fff" fill-opacity="0.39"/><rect x="899" y="216" width="1" height="1" fill="#fff" fill-opacity="0.96"/><rect x="19" y="166" width="1" height="1" fill="#fff" fill-opacity="0.83"/><rect x="813" y="122" width="1" height="1" fill="#fff" fill-opacity="0.78"/><rect x="31" y="68" width="1" height="1" fill="#fff" fill-opacity="0.72"/><rect x="648" y="96" width="1" height="1" fill="#fff" fill-opacity="0.67"/><rect x="278" y="568" width="1" height="1" fill="#fff" fill-opacity="0.80"/><rect x="302" y="678" width="1" height="1" fill="#fff" fill-opacity="0.42"/><rect x="158" y="387" width="2" height="2" fill="#fff" fill-opacity="0.98"/><rect x="362" y="45" width="1" height="1" fill="#fff" fill-opacity="0.38"/><rect x="1041" y="79" width="1" height="1" fill="#fff" fill-opacity="0.59"/><rect x="21" y="363" width="1" height="1" fill="#fff" fill-opacity="0.70"/><rect x="1123" y="368" width="2" height="2" fill="#fff" fill-opacity="0.92"/><rect x="550" y="438" width="1" height="1" fill="#fff" fill-opacity="0.60"/><rect x="309" y="426" width="2" height="2" fill="#fff" fill-opacity="0.87"/><rect x="10" y="274" width="2" height="2" fill="#fff" fill-opacity="0.52"/><rect x="237" y="118" width="1" height="1" fill="#fff" fill-opacity="0.94"/><rect x="101" y="445" width="1" height="1" fill="#fff" fill-opacity="0.77"/><rect x="1183" y="30" width="1" height="1" fill="#fff" fill-opacity="0.66"/><rect x="701" y="636" width="1" height="1" fill="#fff" fill-opacity="0.89"/><rect x="775" y="393" width="1" height="1" fill="#fff" fill-opacity="0.69"/><rect x="1255" y="705" width="1" height="1" fill="#fff" fill-opacity="0.76"/><rect x="1069" y="633" width="1" height="1" fill="#fff" fill-opacity="0.44"/><rect x="1082" y="402" width="1" height="1" fill="#fff" fill-opacity="0.88"/><rect x="942" y="211" width="1" height="1" fill="#fff" fill-opacity="0.93"/><rect x="88" y="359" width="1" height="1" fill="#fff" fill-opacity="0.88"/><rect x="730" y="708" width="1" height="1" fill="#fff" fill-opacity="0.64"/><rect x="180" y="311" width="2" height="2" fill="#fff" fill-opacity="0.80"/><rect x="1001" y="563" width="1" height="1" fill="#fff" fill-opacity="0.69"/><rect x="411" y="30" width="1" height="1" fill="#fff" fill-opacity="0.47"/><rect x="1115" y="311" width="1" height="1" fill="#fff" fill-opacity="0.52"/><rect x="897" y="123" width="1" height="1" fill="#fff" fill-opacity="0.41"/><rect x="262" y="463" width="1" height="1" fill="#fff" fill-opacity="0.86"/><rect x="751" y="72" width="1" height="1" fill="#fff" fill-opacity="0.62"/><rect x="488" y="424" width="1" height="1" fill="#fff" fill-opacity="0.75"/><rect x="416" y="367" width="1" height="1" fill="#fff" fill-opacity="0.64"/><rect x="805" y="568" width="2" height="2" fill="#fff" fill-opacity="0.77"/><rect x="52" y="140" width="1" height="1" fill="#fff" fill-opacity="0.65"/><rect x="893" y="454" width="1" height="1" fill="#fff" fill-opacity="0.39"/><rect x="410" y="441" width="2" height="2" fill="#fff" fill-opacity="0.54"/><rect x="941" y="150" width="1" height="1" fill="#fff" fill-opacity="0.72"/><rect x="31" y="134" width="1" height="1" fill="#fff" fill-opacity="0.49"/><rect x="930" y="86" width="1" height="1" fill="#fff" fill-opacity="0.57"/><rect x="112" y="593" width="1" height="1" fill="#fff" fill-opacity="0.73"/><rect x="298" y="358" width="1" height="1" fill="#fff" fill-opacity="0.35"/><rect x="1103" y="311" width="1" height="1" fill="#fff" fill-opacity="0.60"/><rect x="623" y="284" width="1" height="1" fill="#fff" fill-opacity="0.91"/><rect x="526" y="342" width="1" height="1" fill="#fff" fill-opacity="0.70"/><rect x="410" y="497" width="1" height="1" fill="#fff" fill-opacity="0.38"/><rect x="643" y="38" width="1" height="1" fill="#fff" fill-opacity="0.72"/><rect x="662" y="66" width="1" height="1" fill="#fff" fill-opacity="0.54"/><rect x="428" y="851" width="1" height="1" fill="#fff" fill-opacity="0.28"/><rect x="911" y="238" width="1" height="1" fill="#fff" fill-opacity="0.63"/><rect x="254" y="80" width="2" height="2" fill="#fff" fill-opacity="0.88"/><rect x="1149" y="784" width="1" height="1" fill="#fff" fill-opacity="0.79"/><rect x="325" y="179" width="1" height="1" fill="#fff" fill-opacity="0.69"/><rect x="953" y="127" width="1" height="1" fill="#fff" fill-opacity="0.38"/><rect x="458" y="704" width="1" height="1" fill="#fff" fill-opacity="0.64"/><rect x="869" y="188" width="2" height="2" fill="#fff" fill-opacity="0.44"/><rect x="315" y="346" width="1" height="1" fill="#fff" fill-opacity="0.90"/><rect x="472" y="430" width="1" height="1" fill="#fff" fill-opacity="0.45"/><rect x="596" y="258" width="1" height="1" fill="#fff" fill-opacity="0.48"/><rect x="431" y="701" width="1" height="1" fill="#fff" fill-opacity="0.54"/><rect x="712" y="48" width="1" height="1" fill="#fff" fill-opacity="0.95"/><rect x="190" y="235" width="2" height="2" fill="#fff" fill-opacity="0.74"/><rect x="465" y="622" width="1" height="1" fill="#fff" fill-opacity="0.74"/><rect x="352" y="371" width="1" height="1" fill="#fff" fill-opacity="0.56"/><rect x="745" y="213" width="1" height="1" fill="#fff" fill-opacity="0.88"/><rect x="1129" y="145" width="1" height="1" fill="#fff" fill-opacity="0.65"/><rect x="69" y="70" width="1" height="1" fill="#fff" fill-opacity="0.77"/><rect x="270" y="455" width="1" height="1" fill="#fff" fill-opacity="0.59"/><rect x="192" y="139" width="1" height="1" fill="#fff" fill-opacity="0.67"/><rect x="958" y="281" width="1" height="1" fill="#fff" fill-opacity="0.68"/><rect x="751" y="232" width="1" height="1" fill="#fff" fill-opacity="0.99"/><rect x="491" y="774" width="1" height="1" fill="#fff" fill-opacity="0.93"/><rect x="30" y="138" width="1" height="1" fill="#fff" fill-opacity="0.86"/><rect x="1168" y="245" width="1" height="1" fill="#fff" fill-opacity="0.84"/><rect x="63" y="464" width="1" height="1" fill="#fff" fill-opacity="0.54"/><rect x="247" y="116" width="1" height="1" fill="#fff" fill-opacity="0.51"/><rect x="1050" y="757" width="1" height="1" fill="#fff" fill-opacity="0.40"/><rect x="690" y="130" width="1" height="1" fill="#fff" fill-opacity="0.80"/><rect x="945" y="636" width="1" height="1" fill="#fff" fill-opacity="0.96"/><rect x="678" y="755" width="2" height="2" fill="#fff" fill-opacity="0.86"/><rect x="982" y="68" width="1" height="1" fill="#fff" fill-opacity="0.94"/><rect x="842" y="124" width="2" height="2" fill="#fff" fill-opacity="0.73"/><rect x="1008" y="718" width="1" height="1" fill="#fff" fill-opacity="0.52"/><rect x="954" y="882" width="1" height="1" fill="#fff" fill-opacity="0.21"/><rect x="1050" y="336" width="1" height="1" fill="#fff" fill-opacity="0.78"/><rect x="237" y="99" width="1" height="1" fill="#fff" fill-opacity="0.51"/><rect x="475" y="275" width="1" height="1" fill="#fff" fill-opacity="0.50"/><rect x="1008" y="618" width="1" height="1" fill="#fff" fill-opacity="0.81"/><rect x="802" y="709" width="1" height="1" fill="#fff" fill-opacity="0.79"/><rect x="178" y="263" width="1" height="1" fill="#fff" fill-opacity="0.57"/><rect x="624" y="34" width="1" height="1" fill="#fff" fill-opacity="0.97"/><rect x="973" y="458" width="1" height="1" fill="#fff" fill-opacity="0.44"/><rect x="66" y="329" width="2" height="2" fill="#fff" fill-opacity="0.47"/><rect x="905" y="447" width="1" height="1" fill="#fff" fill-opacity="0.43"/><rect x="85" y="414" width="1" height="1" fill="#fff" fill-opacity="0.53"/><rect x="807" y="345" width="2" height="2" fill="#fff" fill-opacity="0.68"/><rect x="1242" y="223" width="2" height="2" fill="#fff" fill-opacity="0.60"/><rect x="18" y="30" width="1" height="1" fill="#fff" fill-opacity="0.51"/><rect x="1131" y="782" width="1" height="1" fill="#fff" fill-opacity="0.59"/><rect x="545" y="332" width="1" height="1" fill="#fff" fill-opacity="0.76"/><rect x="1010" y="402" width="1" height="1" fill="#fff" fill-opacity="0.92"/><rect x="939" y="65" width="1" height="1" fill="#fff" fill-opacity="0.35"/><rect x="555" y="177" width="2" height="2" fill="#fff" fill-opacity="0.68"/><rect x="803" y="207" width="1" height="1" fill="#fff" fill-opacity="0.53"/><rect x="495" y="328" width="1" height="1" fill="#fff" fill-opacity="0.71"/><rect x="779" y="534" width="1" height="1" fill="#fff" fill-opacity="0.80"/><rect x="1177" y="537" width="1" height="1" fill="#fff" fill-opacity="0.58"/><rect x="286" y="235" width="2" height="2" fill="#fff" fill-opacity="0.46"/><rect x="1066" y="204" width="2" height="2" fill="#fff" fill-opacity="0.73"/><rect x="784" y="825" width="2" height="2" fill="#fff" fill-opacity="0.47"/><rect x="633" y="942" width="1" height="1" fill="#fff" fill-opacity="0.25"/><rect x="532" y="400" width="1" height="1" fill="#fff" fill-opacity="0.98"/><rect x="546" y="145" width="2" height="2" fill="#fff" fill-opacity="0.64"/><rect x="644" y="75" width="1" height="1" fill="#fff" fill-opacity="0.66"/><rect x="156" y="311" width="1" height="1" fill="#fff" fill-opacity="0.61"/><rect x="531" y="490" width="1" height="1" fill="#fff" fill-opacity="0.89"/><rect x="1160" y="342" width="2" height="2" fill="#fff" fill-opacity="0.52"/><rect x="1123" y="128" width="1" height="1" fill="#fff" fill-opacity="0.62"/><rect x="699" y="439" width="1" height="1" fill="#fff" fill-opacity="0.58"/><rect x="380" y="759" width="1" height="1" fill="#fff" fill-opacity="0.69"/><rect x="591" y="166" width="1" height="1" fill="#fff" fill-opacity="0.95"/><rect x="560" y="834" width="1" height="1" fill="#fff" fill-opacity="0.89"/><rect x="309" y="257" width="1" height="1" fill="#fff" fill-opacity="0.68"/><rect x="787" y="657" width="1" height="1" fill="#fff" fill-opacity="0.85"/><rect x="1244" y="248" width="1" height="1" fill="#fff" fill-opacity="0.58"/><rect x="736" y="53" width="1" height="1" fill="#fff" fill-opacity="0.90"/><rect x="121" y="486" width="1" height="1" fill="#fff" fill-opacity="0.37"/><rect x="990" y="259" width="2" height="2" fill="#fff" fill-opacity="0.98"/><rect x="1139" y="842" width="1" height="1" fill="#fff" fill-opacity="0.98"/><rect x="1182" y="579" width="1" height="1" fill="#fff" fill-opacity="0.46"/><rect x="1033" y="304" width="1" height="1" fill="#fff" fill-opacity="0.76"/><rect x="799" y="554" width="1" height="1" fill="#fff" fill-opacity="0.78"/><rect x="1088" y="367" width="1" height="1" fill="#fff" fill-opacity="0.77"/><rect x="1178" y="166" width="2" height="2" fill="#fff" fill-opacity="0.92"/><rect x="1260" y="224" width="1" height="1" fill="#fff" fill-opacity="0.84"/><rect x="156" y="783" width="1" height="1" fill="#fff" fill-opacity="0.86"/><rect x="1147" y="803" width="2" height="2" fill="#fff" fill-opacity="0.84"/><rect x="724" y="240" width="1" height="1" fill="#fff" fill-opacity="0.77"/><rect x="1101" y="300" width="1" height="1" fill="#fff" fill-opacity="0.72"/><rect x="646" y="393" width="1" height="1" fill="#fff" fill-opacity="0.46"/><rect x="727" y="461" width="1" height="1" fill="#fff" fill-opacity="0.65"/><rect x="315" y="402" width="1" height="1" fill="#fff" fill-opacity="0.99"/><rect x="1153" y="287" width="1" height="1" fill="#fff" fill-opacity="0.51"/><rect x="1062" y="477" width="1" height="1" fill="#fff" fill-opacity="0.45"/><rect x="894" y="167" width="1" height="1" fill="#fff" fill-opacity="0.82"/><rect x="176" y="504" width="1" height="1" fill="#fff" fill-opacity="0.72"/><rect x="1279" y="603" width="1" height="1" fill="#fff" fill-opacity="0.77"/><rect x="421" y="37" width="2" height="2" fill="#fff" fill-opacity="0.60"/><rect x="213" y="130" width="1" height="1" fill="#fff" fill-opacity="0.48"/><rect x="934" y="615" width="1" height="1" fill="#fff" fill-opacity="0.81"/><rect x="819" y="697" width="1" height="1" fill="#fff" fill-opacity="0.51"/><rect x="961" y="738" width="1" height="1" fill="#fff" fill-opacity="0.43"/><rect x="488" y="849" width="1" height="1" fill="#fff" fill-opacity="0.60"/><rect x="459" y="679" width="1" height="1" fill="#fff" fill-opacity="0.51"/><rect x="955" y="79" width="2" height="2" fill="#fff" fill-opacity="0.97"/><rect x="84" y="187" width="1" height="1" fill="#fff" fill-opacity="0.97"/><rect x="197" y="221" width="1" height="1" fill="#fff" fill-opacity="0.75"/><rect x="662" y="138" width="2" height="2" fill="#fff" fill-opacity="0.60"/><rect x="4" y="103" width="1" height="1" fill="#fff" fill-opacity="0.88"/><rect x="1029" y="605" width="1" height="1" fill="#fff" fill-opacity="0.87"/><rect x="427" y="54" width="1" height="1" fill="#fff" fill-opacity="0.89"/><rect x="427" y="155" width="1" height="1" fill="#fff" fill-opacity="0.79"/><rect x="226" y="657" width="1" height="1" fill="#fff" fill-opacity="0.58"/><rect x="192" y="119" width="1" height="1" fill="#fff" fill-opacity="0.90"/><rect x="207" y="121" width="1" height="1" fill="#fff" fill-opacity="0.85"/><rect x="302" y="535" width="2" height="2" fill="#fff" fill-opacity="0.85"/><rect x="14" y="110" width="1" height="1" fill="#fff" fill-opacity="0.80"/><rect x="1226" y="249" width="1" height="1" fill="#fff" fill-opacity="0.61"/><rect x="1251" y="618" width="2" height="2" fill="#fff" fill-opacity="0.83"/><rect x="120" y="763" width="1" height="1" fill="#fff" fill-opacity="0.44"/><rect x="882" y="850" width="1" height="1" fill="#fff" fill-opacity="0.96"/><rect x="904" y="291" width="1" height="1" fill="#fff" fill-opacity="0.55"/><rect x="713" y="59" width="1" height="1" fill="#fff" fill-opacity="0.64"/><rect x="667" y="310" width="1" height="1" fill="#fff" fill-opacity="0.70"/><rect x="697" y="266" width="1" height="1" fill="#fff" fill-opacity="0.88"/><rect x="3" y="818" width="1" height="1" fill="#fff" fill-opacity="0.57"/><rect x="72" y="875" width="1" height="1" fill="#fff" fill-opacity="0.26"/><rect x="938" y="194" width="1" height="1" fill="#fff" fill-opacity="0.78"/><rect x="1062" y="736" width="1" height="1" fill="#fff" fill-opacity="0.77"/><rect x="446" y="324" width="2" height="2" fill="#fff" fill-opacity="0.81"/><rect x="340" y="737" width="1" height="1" fill="#fff" fill-opacity="0.60"/><rect x="699" y="293" width="1" height="1" fill="#fff" fill-opacity="0.91"/><rect x="531" y="663" width="1" height="1" fill="#fff" fill-opacity="0.73"/><rect x="740" y="106" width="1" height="1" fill="#fff" fill-opacity="0.67"/><rect x="1045" y="734" width="2" height="2" fill="#fff" fill-opacity="0.64"/><rect x="204" y="291" width="1" height="1" fill="#fff" fill-opacity="0.80"/><rect x="911" y="775" width="2" height="2" fill="#fff" fill-opacity="0.65"/><rect x="794" y="878" width="1" height="1" fill="#fff" fill-opacity="0.22"/><rect x="1279" y="40" width="1" height="1" fill="#fff" fill-opacity="0.41"/><rect x="1202" y="349" width="1" height="1" fill="#fff" fill-opacity="0.44"/><rect x="198" y="886" width="1" height="1" fill="#fff" fill-opacity="0.35"/><rect x="266" y="988" width="1" height="1" fill="#fff" fill-opacity="0.37"/><rect x="283" y="408" width="1" height="1" fill="#fff" fill-opacity="0.59"/><rect x="61" y="259" width="2" height="2" fill="#fff" fill-opacity="0.85"/><rect x="748" y="276" width="1" height="1" fill="#fff" fill-opacity="0.92"/><rect x="103" y="131" width="1" height="1" fill="#fff" fill-opacity="0.50"/><rect x="60" y="513" width="1" height="1" fill="#fff" fill-opacity="0.65"/><rect x="1007" y="125" width="1" height="1" fill="#fff" fill-opacity="0.95"/><rect x="472" y="466" width="1" height="1" fill="#fff" fill-opacity="0.39"/><rect x="739" y="484" width="2" height="2" fill="#fff" fill-opacity="0.71"/><rect x="442" y="606" width="2" height="2" fill="#fff" fill-opacity="0.95"/><rect x="770" y="142" width="1" height="1" fill="#fff" fill-opacity="0.39"/><rect x="1068" y="204" width="1" height="1" fill="#fff" fill-opacity="0.42"/><rect x="977" y="301" width="2" height="2" fill="#fff" fill-opacity="0.86"/><rect x="269" y="106" width="1" height="1" fill="#fff" fill-opacity="0.41"/><rect x="574" y="708" width="1" height="1" fill="#fff" fill-opacity="0.81"/><rect x="1043" y="41" width="1" height="1" fill="#fff" fill-opacity="0.94"/><rect x="963" y="733" width="1" height="1" fill="#fff" fill-opacity="0.50"/><rect x="1021" y="710" width="1" height="1" fill="#fff" fill-opacity="0.44"/><rect x="753" y="702" width="1" height="1" fill="#fff" fill-opacity="0.50"/><rect x="1224" y="499" width="1" height="1" fill="#fff" fill-opacity="0.49"/><rect x="73" y="322" width="1" height="1" fill="#fff" fill-opacity="0.47"/><rect x="338" y="42" width="1" height="1" fill="#fff" fill-opacity="0.39"/><rect x="765" y="553" width="1" height="1" fill="#fff" fill-opacity="0.79"/><rect x="434" y="666" width="1" height="1" fill="#fff" fill-opacity="0.66"/><rect x="833" y="211" width="1" height="1" fill="#fff" fill-opacity="0.36"/><rect x="0" y="188" width="1" height="1" fill="#fff" fill-opacity="0.65"/><rect x="1150" y="591" width="1" height="1" fill="#fff" fill-opacity="0.51"/><rect x="246" y="310" width="1" height="1" fill="#fff" fill-opacity="0.44"/><rect x="1069" y="168" width="2" height="2" fill="#fff" fill-opacity="0.39"/><rect x="837" y="289" width="1" height="1" fill="#fff" fill-opacity="0.91"/><rect x="194" y="82" width="1" height="1" fill="#fff" fill-opacity="0.98"/><rect x="593" y="102" width="2" height="2" fill="#fff" fill-opacity="0.92"/><rect x="860" y="105" width="1" height="1" fill="#fff" fill-opacity="0.87"/><rect x="499" y="541" width="1" height="1" fill="#fff" fill-opacity="0.87"/><rect x="155" y="636" width="1" height="1" fill="#fff" fill-opacity="0.47"/><rect x="150" y="747" width="1" height="1" fill="#fff" fill-opacity="0.66"/><rect x="671" y="848" width="1" height="1" fill="#fff" fill-opacity="0.57"/><rect x="369" y="506" width="1" height="1" fill="#fff" fill-opacity="0.50"/><rect x="881" y="121" width="1" height="1" fill="#fff" fill-opacity="0.62"/><rect x="759" y="782" width="1" height="1" fill="#fff" fill-opacity="0.67"/><rect x="747" y="160" width="1" height="1" fill="#fff" fill-opacity="0.92"/><rect x="231" y="66" width="2" height="2" fill="#fff" fill-opacity="0.75"/><rect x="159" y="510" width="2" height="2" fill="#fff" fill-opacity="0.73"/><rect x="728" y="383" width="1" height="1" fill="#fff" fill-opacity="0.46"/><rect x="329" y="433" width="2" height="2" fill="#fff" fill-opacity="0.85"/><rect x="402" y="408" width="1" height="1" fill="#fff" fill-opacity="0.52"/><rect x="1205" y="76" width="1" height="1" fill="#fff" fill-opacity="0.70"/><rect x="509" y="34" width="1" height="1" fill="#fff" fill-opacity="0.94"/><rect x="484" y="49" width="1" height="1" fill="#fff" fill-opacity="0.41"/><rect x="406" y="182" width="1" height="1" fill="#fff" fill-opacity="0.58"/><rect x="597" y="457" width="2" height="2" fill="#fff" fill-opacity="0.57"/><rect x="171" y="300" width="1" height="1" fill="#fff" fill-opacity="0.76"/><rect x="538" y="164" width="1" height="1" fill="#fff" fill-opacity="0.57"/><rect x="1007" y="174" width="2" height="2" fill="#fff" fill-opacity="0.71"/><rect x="865" y="424" width="1" height="1" fill="#fff" fill-opacity="0.55"/><rect x="26" y="227" width="1" height="1" fill="#fff" fill-opacity="0.90"/><rect x="936" y="276" width="1" height="1" fill="#fff" fill-opacity="0.69"/><rect x="1050" y="327" width="1" height="1" fill="#fff" fill-opacity="0.65"/><rect x="637" y="708" width="1" height="1" fill="#fff" fill-opacity="0.39"/><rect x="634" y="436" width="1" height="1" fill="#fff" fill-opacity="0.39"/><rect x="100" y="362" width="1" height="1" fill="#fff" fill-opacity="0.96"/><rect x="656" y="152" width="1" height="1" fill="#fff" fill-opacity="0.92"/><rect x="153" y="138" width="1" height="1" fill="#fff" fill-opacity="0.63"/><rect x="136" y="288" width="1" height="1" fill="#fff" fill-opacity="0.64"/><rect x="761" y="577" width="2" height="2" fill="#fff" fill-opacity="0.96"/><rect x="1267" y="82" width="1" height="1" fill="#fff" fill-opacity="0.76"/><rect x="1141" y="162" width="1" height="1" fill="#fff" fill-opacity="0.37"/><rect x="697" y="477" width="1" height="1" fill="#fff" fill-opacity="0.80"/><rect x="104" y="62" width="1" height="1" fill="#fff" fill-opacity="0.44"/><rect x="832" y="203" width="1" height="1" fill="#fff" fill-opacity="0.87"/><rect x="497" y="499" width="1" height="1" fill="#fff" fill-opacity="0.52"/><rect x="378" y="648" width="1" height="1" fill="#fff" fill-opacity="0.61"/><rect x="413" y="781" width="1" height="1" fill="#fff" fill-opacity="0.95"/><rect x="1005" y="139" width="1" height="1" fill="#fff" fill-opacity="0.87"/><rect x="56" y="291" width="1" height="1" fill="#fff" fill-opacity="0.80"/><rect x="1260" y="358" width="1" height="1" fill="#fff" fill-opacity="0.90"/><rect x="704" y="40" width="1" height="1" fill="#fff" fill-opacity="0.38"/><rect x="76" y="364" width="1" height="1" fill="#fff" fill-opacity="0.92"/><rect x="749" y="338" width="1" height="1" fill="#fff" fill-opacity="0.60"/><rect x="1161" y="803" width="1" height="1" fill="#fff" fill-opacity="0.77"/><rect x="491" y="582" width="1" height="1" fill="#fff" fill-opacity="0.39"/><rect x="284" y="907" width="1" height="1" fill="#fff" fill-opacity="0.36"/><rect x="98" y="842" width="1" height="1" fill="#fff" fill-opacity="0.65"/><rect x="694" y="511" width="1" height="1" fill="#fff" fill-opacity="0.92"/><rect x="510" y="95" width="1" height="1" fill="#fff" fill-opacity="0.37"/><rect x="52" y="262" width="1" height="1" fill="#fff" fill-opacity="0.67"/><rect x="107" y="233" width="1" height="1" fill="#fff" fill-opacity="0.55"/><rect x="976" y="417" width="1" height="1" fill="#fff" fill-opacity="0.93"/><rect x="963" y="356" width="1" height="1" fill="#fff" fill-opacity="0.55"/><rect x="721" y="617" width="1" height="1" fill="#fff" fill-opacity="1.00"/><rect x="1061" y="100" width="1" height="1" fill="#fff" fill-opacity="0.92"/><rect x="465" y="242" width="1" height="1" fill="#fff" fill-opacity="0.95"/><rect x="255" y="700" width="1" height="1" fill="#fff" fill-opacity="0.73"/><rect x="885" y="54" width="1" height="1" fill="#fff" fill-opacity="0.41"/><rect x="1072" y="327" width="1" height="1" fill="#fff" fill-opacity="0.58"/><rect x="455" y="842" width="1" height="1" fill="#fff" fill-opacity="0.49"/><rect x="887" y="191" width="1" height="1" fill="#fff" fill-opacity="0.95"/><rect x="413" y="365" width="1" height="1" fill="#fff" fill-opacity="0.83"/><rect x="382" y="533" width="1" height="1" fill="#fff" fill-opacity="0.78"/><rect x="293" y="649" width="2" height="2" fill="#fff" fill-opacity="0.71"/><rect x="113" y="242" width="2" height="2" fill="#fff" fill-opacity="0.90"/><rect x="440" y="553" width="1" height="1" fill="#fff" fill-opacity="0.49"/><rect x="860" y="251" width="1" height="1" fill="#fff" fill-opacity="0.41"/><rect x="338" y="796" width="1" height="1" fill="#fff" fill-opacity="0.50"/><rect x="359" y="267" width="2" height="2" fill="#fff" fill-opacity="0.48"/><rect x="1199" y="768" width="1" height="1" fill="#fff" fill-opacity="0.81"/><rect x="442" y="309" width="1" height="1" fill="#fff" fill-opacity="0.68"/><rect x="502" y="233" width="2" height="2" fill="#fff" fill-opacity="0.58"/><rect x="892" y="340" width="1" height="1" fill="#fff" fill-opacity="0.64"/><rect x="291" y="227" width="1" height="1" fill="#fff" fill-opacity="0.54"/><rect x="855" y="521" width="1" height="1" fill="#fff" fill-opacity="0.73"/><rect x="1061" y="232" width="1" height="1" fill="#fff" fill-opacity="0.68"/><rect x="477" y="105" width="1" height="1" fill="#fff" fill-opacity="0.40"/><rect x="205" y="392" width="1" height="1" fill="#fff" fill-opacity="0.81"/><rect x="976" y="392" width="1" height="1" fill="#fff" fill-opacity="0.79"/><rect x="1135" y="698" width="1" height="1" fill="#fff" fill-opacity="0.97"/><rect x="320" y="592" width="1" height="1" fill="#fff" fill-opacity="0.54"/><rect x="278" y="949" width="2" height="2" fill="#fff" fill-opacity="0.34"/><rect x="982" y="481" width="1" height="1" fill="#fff" fill-opacity="0.93"/><rect x="716" y="592" width="2" height="2" fill="#fff" fill-opacity="0.77"/><rect x="976" y="149" width="1" height="1" fill="#fff" fill-opacity="0.75"/><rect x="533" y="47" width="1" height="1" fill="#fff" fill-opacity="0.59"/><rect x="1103" y="42" width="1" height="1" fill="#fff" fill-opacity="0.88"/><rect x="44" y="107" width="1" height="1" fill="#fff" fill-opacity="0.87"/><rect x="300" y="348" width="1" height="1" fill="#fff" fill-opacity="0.52"/><rect x="1128" y="974" width="1" height="1" fill="#fff" fill-opacity="0.20"/><rect x="395" y="70" width="2" height="2" fill="#fff" fill-opacity="0.60"/><rect x="190" y="674" width="1" height="1" fill="#fff" fill-opacity="0.74"/><rect x="617" y="69" width="1" height="1" fill="#fff" fill-opacity="0.38"/><rect x="671" y="755" width="1" height="1" fill="#fff" fill-opacity="0.65"/><rect x="219" y="215" width="1" height="1" fill="#fff" fill-opacity="0.96"/><rect x="889" y="363" width="1" height="1" fill="#fff" fill-opacity="0.50"/><rect x="50" y="719" width="1" height="1" fill="#fff" fill-opacity="0.47"/><rect x="120" y="486" width="1" height="1" fill="#fff" fill-opacity="0.37"/><rect x="900" y="590" width="1" height="1" fill="#fff" fill-opacity="0.64"/><rect x="47" y="645" width="1" height="1" fill="#fff" fill-opacity="0.68"/><rect x="9" y="542" width="1" height="1" fill="#fff" fill-opacity="0.68"/><rect x="848" y="752" width="1" height="1" fill="#fff" fill-opacity="0.82"/><rect x="837" y="371" width="2" height="2" fill="#fff" fill-opacity="0.95"/><rect x="1259" y="195" width="1" height="1" fill="#fff" fill-opacity="0.52"/><rect x="1146" y="298" width="1" height="1" fill="#fff" fill-opacity="0.72"/><rect x="1118" y="530" width="2" height="2" fill="#fff" fill-opacity="0.99"/><rect x="95" y="182" width="1" height="1" fill="#fff" fill-opacity="0.62"/><rect x="602" y="630" width="1" height="1" fill="#fff" fill-opacity="0.35"/><rect x="770" y="313" width="1" height="1" fill="#fff" fill-opacity="0.63"/><rect x="525" y="113" width="1" height="1" fill="#fff" fill-opacity="0.41"/><rect x="439" y="96" width="1" height="1" fill="#fff" fill-opacity="0.59"/><rect x="1079" y="466" width="1" height="1" fill="#fff" fill-opacity="0.77"/><rect x="568" y="497" width="1" height="1" fill="#fff" fill-opacity="0.79"/><rect x="968" y="151" width="1" height="1" fill="#fff" fill-opacity="0.88"/><rect x="604" y="84" width="2" height="2" fill="#fff" fill-opacity="0.83"/><rect x="268" y="390" width="1" height="1" fill="#fff" fill-opacity="0.51"/><rect x="1037" y="64" width="1" height="1" fill="#fff" fill-opacity="0.40"/><rect x="70" y="250" width="1" height="1" fill="#fff" fill-opacity="0.82"/><rect x="595" y="381" width="1" height="1" fill="#fff" fill-opacity="0.97"/><rect x="1024" y="296" width="1" height="1" fill="#fff" fill-opacity="0.95"/><rect x="512" y="295" width="1" height="1" fill="#fff" fill-opacity="0.94"/><rect x="1255" y="339" width="1" height="1" fill="#fff" fill-opacity="0.76"/><rect x="1091" y="669" width="1" height="1" fill="#fff" fill-opacity="0.41"/><rect x="948" y="522" width="2" height="2" fill="#fff" fill-opacity="0.95"/><rect x="328" y="563" width="1" height="1" fill="#fff" fill-opacity="0.61"/><rect x="963" y="510" width="1" height="1" fill="#fff" fill-opacity="0.59"/><rect x="1134" y="539" width="1" height="1" fill="#fff" fill-opacity="0.46"/><rect x="195" y="406" width="1" height="1" fill="#fff" fill-opacity="0.98"/><rect x="676" y="424" width="1" height="1" fill="#fff" fill-opacity="0.85"/><rect x="650" y="239" width="2" height="2" fill="#fff" fill-opacity="0.65"/><rect x="756" y="606" width="2" height="2" fill="#fff" fill-opacity="0.80"/><rect x="389" y="337" width="1" height="1" fill="#fff" fill-opacity="0.81"/><rect x="1201" y="95" width="1" height="1" fill="#fff" fill-opacity="0.40"/><rect x="1054" y="549" width="1" height="1" fill="#fff" fill-opacity="0.50"/><rect x="206" y="227" width="1" height="1" fill="#fff" fill-opacity="0.35"/><rect x="574" y="350" width="1" height="1" fill="#fff" fill-opacity="0.68"/><rect x="1173" y="237" width="2" height="2" fill="#fff" fill-opacity="0.50"/><rect x="662" y="721" width="1" height="1" fill="#fff" fill-opacity="0.80"/><rect x="137" y="640" width="2" height="2" fill="#fff" fill-opacity="0.42"/><rect x="55" y="85" width="1" height="1" fill="#fff" fill-opacity="0.77"/><rect x="329" y="410" width="1" height="1" fill="#fff" fill-opacity="0.58"/><rect x="757" y="291" width="1" height="1" fill="#fff" fill-opacity="0.45"/><rect x="226" y="632" width="1" height="1" fill="#fff" fill-opacity="0.55"/><rect x="1016" y="452" width="1" height="1" fill="#fff" fill-opacity="0.82"/><rect x="11" y="277" width="1" height="1" fill="#fff" fill-opacity="0.85"/><rect x="687" y="517" width="1" height="1" fill="#fff" fill-opacity="0.79"/><rect x="100" y="493" width="1" height="1" fill="#fff" fill-opacity="0.37"/><rect x="181" y="376" width="1" height="1" fill="#fff" fill-opacity="0.55"/><rect x="1048" y="827" width="1" height="1" fill="#fff" fill-opacity="0.45"/><rect x="625" y="472" width="2" height="2" fill="#fff" fill-opacity="0.81"/><rect x="119" y="321" width="1" height="1" fill="#fff" fill-opacity="0.42"/><rect x="391" y="552" width="1" height="1" fill="#fff" fill-opacity="0.49"/><rect x="589" y="403" width="1" height="1" fill="#fff" fill-opacity="0.79"/><rect x="455" y="68" width="1" height="1" fill="#fff" fill-opacity="0.63"/><rect x="318" y="116" width="1" height="1" fill="#fff" fill-opacity="0.99"/><rect x="204" y="421" width="1" height="1" fill="#fff" fill-opacity="0.48"/><rect x="1015" y="606" width="1" height="1" fill="#fff" fill-opacity="0.96"/><rect x="969" y="159" width="1" height="1" fill="#fff" fill-opacity="0.43"/><rect x="153" y="145" width="1" height="1" fill="#fff" fill-opacity="0.49"/><rect x="751" y="446" width="1" height="1" fill="#fff" fill-opacity="0.99"/><rect x="187" y="586" width="2" height="2" fill="#fff" fill-opacity="0.76"/><rect x="318" y="704" width="1" height="1" fill="#fff" fill-opacity="0.42"/><rect x="779" y="124" width="1" height="1" fill="#fff" fill-opacity="0.38"/><rect x="724" y="116" width="2" height="2" fill="#fff" fill-opacity="0.56"/><rect x="1144" y="915" width="1" height="1" fill="#fff" fill-opacity="0.44"/><rect x="1062" y="239" width="1" height="1" fill="#fff" fill-opacity="0.59"/><rect x="1045" y="602" width="1" height="1" fill="#fff" fill-opacity="0.53"/><rect x="1029" y="161" width="1" height="1" fill="#fff" fill-opacity="0.78"/><rect x="379" y="74" width="1" height="1" fill="#fff" fill-opacity="0.85"/><rect x="975" y="284" width="2" height="2" fill="#fff" fill-opacity="0.70"/><rect x="1114" y="327" width="1" height="1" fill="#fff" fill-opacity="0.37"/><rect x="736" y="118" width="1" height="1" fill="#fff" fill-opacity="0.48"/><rect x="34" y="309" width="1" height="1" fill="#fff" fill-opacity="0.62"/><rect x="895" y="652" width="1" height="1" fill="#fff" fill-opacity="0.98"/><rect x="469" y="378" width="1" height="1" fill="#fff" fill-opacity="0.87"/><rect x="403" y="306" width="1" height="1" fill="#fff" fill-opacity="0.44"/><rect x="899" y="325" width="1" height="1" fill="#fff" fill-opacity="0.98"/><rect x="575" y="92" width="2" height="2" fill="#fff" fill-opacity="0.57"/><rect x="868" y="226" width="1" height="1" fill="#fff" fill-opacity="0.68"/><rect x="1045" y="437" width="2" height="2" fill="#fff" fill-opacity="0.99"/><rect x="71" y="669" width="1" height="1" fill="#fff" fill-opacity="0.73"/><rect x="201" y="234" width="1" height="1" fill="#fff" fill-opacity="0.51"/><rect x="965" y="630" width="2" height="2" fill="#fff" fill-opacity="0.43"/><rect x="1170" y="363" width="2" height="2" fill="#fff" fill-opacity="0.41"/><rect x="942" y="155" width="1" height="1" fill="#fff" fill-opacity="1.00"/><rect x="743" y="45" width="1" height="1" fill="#fff" fill-opacity="0.99"/><rect x="492" y="699" width="1" height="1" fill="#fff" fill-opacity="0.73"/><rect x="961" y="824" width="1" height="1" fill="#fff" fill-opacity="0.36"/><rect x="1279" y="209" width="1" height="1" fill="#fff" fill-opacity="0.71"/><rect x="793" y="193" width="1" height="1" fill="#fff" fill-opacity="0.52"/><rect x="901" y="991" width="1" height="1" fill="#fff" fill-opacity="0.29"/><rect x="755" y="34" width="1" height="1" fill="#fff" fill-opacity="0.54"/><rect x="346" y="132" width="1" height="1" fill="#fff" fill-opacity="0.59"/><rect x="1108" y="244" width="1" height="1" fill="#fff" fill-opacity="0.90"/><rect x="1232" y="659" width="1" height="1" fill="#fff" fill-opacity="0.84"/><rect x="234" y="404" width="1" height="1" fill="#fff" fill-opacity="0.56"/><rect x="672" y="720" width="1" height="1" fill="#fff" fill-opacity="0.62"/><rect x="739" y="257" width="1" height="1" fill="#fff" fill-opacity="0.78"/><rect x="1088" y="487" width="1" height="1" fill="#fff" fill-opacity="0.46"/><rect x="936" y="198" width="1" height="1" fill="#fff" fill-opacity="0.83"/><rect x="86" y="538" width="1" height="1" fill="#fff" fill-opacity="0.70"/><rect x="381" y="294" width="1" height="1" fill="#fff" fill-opacity="0.81"/><rect x="643" y="327" width="1" height="1" fill="#fff" fill-opacity="0.66"/><rect x="1262" y="143" width="1" height="1" fill="#fff" fill-opacity="0.79"/><rect x="1118" y="661" width="2" height="2" fill="#fff" fill-opacity="0.89"/><rect x="906" y="790" width="1" height="1" fill="#fff" fill-opacity="0.84"/><rect x="745" y="535" width="2" height="2" fill="#fff" fill-opacity="0.88"/><rect x="218" y="112" width="1" height="1" fill="#fff" fill-opacity="0.96"/><rect x="143" y="211" width="2" height="2" fill="#fff" fill-opacity="0.37"/><rect x="178" y="880" width="1" height="1" fill="#fff" fill-opacity="0.23"/><rect x="373" y="237" width="1" height="1" fill="#fff" fill-opacity="0.74"/><rect x="269" y="374" width="2" height="2" fill="#fff" fill-opacity="0.36"/><rect x="247" y="81" width="1" height="1" fill="#fff" fill-opacity="0.53"/><rect x="901" y="647" width="1" height="1" fill="#fff" fill-opacity="0.95"/><rect x="630" y="123" width="1" height="1" fill="#fff" fill-opacity="0.66"/><rect x="1230" y="912" width="1" height="1" fill="#fff" fill-opacity="0.32"/><rect x="771" y="834" width="1" height="1" fill="#fff" fill-opacity="0.96"/><rect x="451" y="317" width="2" height="2" fill="#fff" fill-opacity="0.68"/><rect x="1044" y="386" width="1" height="1" fill="#fff" fill-opacity="0.84"/><rect x="711" y="538" width="1" height="1" fill="#fff" fill-opacity="0.61"/><rect x="377" y="513" width="1" height="1" fill="#fff" fill-opacity="0.97"/><rect x="509" y="391" width="2" height="2" fill="#fff" fill-opacity="0.52"/><rect x="577" y="415" width="1" height="1" fill="#fff" fill-opacity="0.56"/><rect x="520" y="842" width="1" height="1" fill="#fff" fill-opacity="0.74"/><rect x="256" y="747" width="1" height="1" fill="#fff" fill-opacity="0.91"/><rect x="894" y="223" width="1" height="1" fill="#fff" fill-opacity="0.46"/><rect x="305" y="355" width="2" height="2" fill="#fff" fill-opacity="0.60"/><rect x="304" y="132" width="1" height="1" fill="#fff" fill-opacity="0.47"/><rect x="972" y="630" width="1" height="1" fill="#fff" fill-opacity="0.68"/><rect x="203" y="47" width="2" height="2" fill="#fff" fill-opacity="0.64"/><rect x="1167" y="134" width="1" height="1" fill="#fff" fill-opacity="0.86"/><rect x="627" y="675" width="1" height="1" fill="#fff" fill-opacity="0.72"/><rect x="628" y="187" width="1" height="1" fill="#fff" fill-opacity="0.87"/><rect x="103" y="232" width="1" height="1" fill="#fff" fill-opacity="0.51"/><rect x="176" y="299" width="1" height="1" fill="#fff" fill-opacity="0.55"/><rect x="945" y="258" width="1" height="1" fill="#fff" fill-opacity="0.82"/><rect x="16" y="147" width="1" height="1" fill="#fff" fill-opacity="0.80"/><rect x="47" y="260" width="1" height="1" fill="#fff" fill-opacity="0.84"/><rect x="843" y="697" width="1" height="1" fill="#fff" fill-opacity="0.55"/><rect x="148" y="663" width="1" height="1" fill="#fff" fill-opacity="0.64"/><rect x="895" y="628" width="1" height="1" fill="#fff" fill-opacity="0.66"/><rect x="834" y="246" width="1" height="1" fill="#fff" fill-opacity="0.65"/><rect x="1141" y="550" width="1" height="1" fill="#fff" fill-opacity="0.59"/><rect x="882" y="39" width="1" height="1" fill="#fff" fill-opacity="0.76"/><rect x="394" y="511" width="2" height="2" fill="#fff" fill-opacity="0.63"/><rect x="418" y="176" width="1" height="1" fill="#fff" fill-opacity="0.78"/><rect x="44" y="421" width="1" height="1" fill="#fff" fill-opacity="0.74"/><rect x="689" y="99" width="1" height="1" fill="#fff" fill-opacity="0.54"/><rect x="604" y="343" width="1" height="1" fill="#fff" fill-opacity="0.46"/><rect x="612" y="55" width="2" height="2" fill="#fff" fill-opacity="0.81"/><rect x="1261" y="434" width="1" height="1" fill="#fff" fill-opacity="0.93"/><rect x="241" y="565" width="1" height="1" fill="#fff" fill-opacity="0.64"/><rect x="218" y="475" width="1" height="1" fill="#fff" fill-opacity="0.48"/><rect x="983" y="691" width="1" height="1" fill="#fff" fill-opacity="0.69"/><rect x="1139" y="315" width="1" height="1" fill="#fff" fill-opacity="0.77"/><rect x="537" y="924" width="1" height="1" fill="#fff" fill-opacity="0.27"/><rect x="1248" y="312" width="1" height="1" fill="#fff" fill-opacity="0.46"/><rect x="487" y="155" width="1" height="1" fill="#fff" fill-opacity="0.37"/><rect x="910" y="709" width="1" height="1" fill="#fff" fill-opacity="0.73"/><rect x="129" y="134" width="1" height="1" fill="#fff" fill-opacity="0.55"/><rect x="32" y="57" width="1" height="1" fill="#fff" fill-opacity="0.40"/><rect x="1060" y="102" width="1" height="1" fill="#fff" fill-opacity="0.62"/><rect x="96" y="606" width="1" height="1" fill="#fff" fill-opacity="0.96"/><rect x="836" y="342" width="2" height="2" fill="#fff" fill-opacity="0.42"/><rect x="131" y="615" width="1" height="1" fill="#fff" fill-opacity="0.82"/><rect x="576" y="497" width="1" height="1" fill="#fff" fill-opacity="0.53"/><rect x="1042" y="117" width="1" height="1" fill="#fff" fill-opacity="0.57"/><rect x="755" y="147" width="1" height="1" fill="#fff" fill-opacity="0.54"/><rect x="630" y="412" width="2" height="2" fill="#fff" fill-opacity="0.68"/><rect x="1218" y="642" width="2" height="2" fill="#fff" fill-opacity="0.96"/><rect x="1142" y="45" width="2" height="2" fill="#fff" fill-opacity="0.46"/><rect x="530" y="736" width="1" height="1" fill="#fff" fill-opacity="0.65"/><rect x="196" y="337" width="1" height="1" fill="#fff" fill-opacity="0.66"/><rect x="391" y="431" width="1" height="1" fill="#fff" fill-opacity="0.59"/><rect x="1150" y="788" width="1" height="1" fill="#fff" fill-opacity="0.78"/><rect x="818" y="557" width="1" height="1" fill="#fff" fill-opacity="0.44"/><rect x="167" y="276" width="1" height="1" fill="#fff" fill-opacity="0.71"/><rect x="973" y="370" width="1" height="1" fill="#fff" fill-opacity="0.87"/><rect x="362" y="204" width="2" height="2" fill="#fff" fill-opacity="0.69"/><rect x="979" y="374" width="1" height="1" fill="#fff" fill-opacity="0.44"/><rect x="1128" y="259" width="1" height="1" fill="#fff" fill-opacity="0.98"/><rect x="421" y="434" width="2" height="2" fill="#fff" fill-opacity="0.49"/><rect x="955" y="42" width="1" height="1" fill="#fff" fill-opacity="0.86"/><rect x="203" y="503" width="1" height="1" fill="#fff" fill-opacity="0.68"/><rect x="119" y="411" width="1" height="1" fill="#fff" fill-opacity="0.90"/><rect x="1210" y="51" width="1" height="1" fill="#fff" fill-opacity="0.92"/><rect x="816" y="188" width="1" height="1" fill="#fff" fill-opacity="0.57"/><rect x="329" y="225" width="2" height="2" fill="#fff" fill-opacity="0.86"/><rect x="667" y="78" width="1" height="1" fill="#fff" fill-opacity="0.42"/><rect x="682" y="290" width="2" height="2" fill="#fff" fill-opacity="0.77"/><rect x="1072" y="486" width="1" height="1" fill="#fff" fill-opacity="0.72"/><rect x="224" y="735" width="1" height="1" fill="#fff" fill-opacity="0.51"/><rect x="261" y="244" width="1" height="1" fill="#fff" fill-opacity="0.57"/><rect x="95" y="676" width="1" height="1" fill="#fff" fill-opacity="0.39"/><rect x="913" y="107" width="1" height="1" fill="#fff" fill-opacity="0.92"/><rect x="843" y="546" width="1" height="1" fill="#fff" fill-opacity="0.90"/><rect x="695" y="342" width="1" height="1" fill="#fff" fill-opacity="0.39"/><rect x="1034" y="39" width="1" height="1" fill="#fff" fill-opacity="1.00"/><rect x="414" y="256" width="1" height="1" fill="#fff" fill-opacity="0.41"/><rect x="1271" y="97" width="1" height="1" fill="#fff" fill-opacity="0.42"/><rect x="200" y="444" width="1" height="1" fill="#fff" fill-opacity="0.63"/><rect x="1227" y="510" width="2" height="2" fill="#fff" fill-opacity="0.84"/><rect x="93" y="650" width="1" height="1" fill="#fff" fill-opacity="0.53"/><rect x="506" y="389" width="1" height="1" fill="#fff" fill-opacity="0.54"/><rect x="1160" y="439" width="1" height="1" fill="#fff" fill-opacity="0.99"/><rect x="59" y="470" width="1" height="1" fill="#fff" fill-opacity="0.82"/><rect x="299" y="668" width="1" height="1" fill="#fff" fill-opacity="0.94"/><rect x="28" y="181" width="2" height="2" fill="#fff" fill-opacity="0.39"/><rect x="500" y="61" width="1" height="1" fill="#fff" fill-opacity="0.52"/><rect x="1082" y="650" width="1" height="1" fill="#fff" fill-opacity="0.44"/><rect x="206" y="283" width="2" height="2" fill="#fff" fill-opacity="0.97"/><rect x="759" y="49" width="1" height="1" fill="#fff" fill-opacity="0.38"/><rect x="250" y="197" width="1" height="1" fill="#fff" fill-opacity="0.89"/><rect x="131" y="364" width="1" height="1" fill="#fff" fill-opacity="0.44"/><rect x="621" y="584" width="1" height="1" fill="#fff" fill-opacity="0.43"/><rect x="941" y="549" width="1" height="1" fill="#fff" fill-opacity="0.89"/><rect x="247" y="251" width="1" height="1" fill="#fff" fill-opacity="0.55"/><rect x="2" y="85" width="1" height="1" fill="#fff" fill-opacity="0.41"/><rect x="1068" y="882" width="2" height="2" fill="#fff" fill-opacity="0.44"/><rect x="515" y="649" width="1" height="1" fill="#fff" fill-opacity="0.91"/><rect x="311" y="278" width="1" height="1" fill="#fff" fill-opacity="0.92"/><rect x="12" y="343" width="1" height="1" fill="#fff" fill-opacity="0.95"/><rect x="955" y="855" width="1" height="1" fill="#fff" fill-opacity="0.19"/><rect x="714" y="441" width="1" height="1" fill="#fff" fill-opacity="0.40"/><rect x="13" y="123" width="1" height="1" fill="#fff" fill-opacity="0.43"/><rect x="63" y="436" width="1" height="1" fill="#fff" fill-opacity="0.86"/><rect x="741" y="746" width="2" height="2" fill="#fff" fill-opacity="0.39"/><rect x="857" y="318" width="1" height="1" fill="#fff" fill-opacity="0.63"/><rect x="910" y="319" width="2" height="2" fill="#fff" fill-opacity="0.87"/><rect x="621" y="418" width="1" height="1" fill="#fff" fill-opacity="0.43"/><rect x="128" y="610" width="1" height="1" fill="#fff" fill-opacity="0.67"/><rect x="809" y="135" width="1" height="1" fill="#fff" fill-opacity="0.77"/><rect x="12" y="522" width="1" height="1" fill="#fff" fill-opacity="0.98"/><rect x="702" y="415" width="1" height="1" fill="#fff" fill-opacity="0.82"/><rect x="319" y="345" width="1" height="1" fill="#fff" fill-opacity="0.56"/><rect x="958" y="324" width="2" height="2" fill="#fff" fill-opacity="0.95"/><rect x="978" y="656" width="1" height="1" fill="#fff" fill-opacity="0.95"/><rect x="51" y="311" width="1" height="1" fill="#fff" fill-opacity="0.59"/><rect x="437" y="467" width="1" height="1" fill="#fff" fill-opacity="0.62"/><rect x="402" y="744" width="1" height="1" fill="#fff" fill-opacity="0.41"/><rect x="453" y="347" width="1" height="1" fill="#fff" fill-opacity="0.72"/><rect x="796" y="140" width="1" height="1" fill="#fff" fill-opacity="0.42"/><rect x="915" y="808" width="1" height="1" fill="#fff" fill-opacity="0.58"/><rect x="1210" y="549" width="1" height="1" fill="#fff" fill-opacity="0.51"/><rect x="645" y="535" width="1" height="1" fill="#fff" fill-opacity="0.67"/><rect x="1046" y="241" width="1" height="1" fill="#fff" fill-opacity="0.39"/><rect x="441" y="272" width="1" height="1" fill="#fff" fill-opacity="0.94"/><rect x="135" y="206" width="1" height="1" fill="#fff" fill-opacity="0.60"/><rect x="740" y="98" width="1" height="1" fill="#fff" fill-opacity="0.63"/><rect x="254" y="74" width="1" height="1" fill="#fff" fill-opacity="0.91"/><rect x="825" y="670" width="1" height="1" fill="#fff" fill-opacity="0.99"/><rect x="546" y="220" width="1" height="1" fill="#fff" fill-opacity="0.85"/><rect x="711" y="807" width="1" height="1" fill="#fff" fill-opacity="0.78"/><rect x="390" y="340" width="1" height="1" fill="#fff" fill-opacity="0.70"/><rect x="472" y="664" width="1" height="1" fill="#fff" fill-opacity="0.64"/><rect x="761" y="338" width="1" height="1" fill="#fff" fill-opacity="0.49"/><rect x="775" y="114" width="1" height="1" fill="#fff" fill-opacity="0.92"/><rect x="60" y="633" width="1" height="1" fill="#fff" fill-opacity="0.85"/><rect x="1127" y="642" width="1" height="1" fill="#fff" fill-opacity="0.37"/><rect x="446" y="364" width="1" height="1" fill="#fff" fill-opacity="0.52"/><rect x="280" y="681" width="1" height="1" fill="#fff" fill-opacity="0.76"/><rect x="421" y="321" width="1" height="1" fill="#fff" fill-opacity="0.82"/><rect x="404" y="348" width="1" height="1" fill="#fff" fill-opacity="0.54"/><rect x="197" y="340" width="1" height="1" fill="#fff" fill-opacity="0.53"/><rect x="1149" y="381" width="2" height="2" fill="#fff" fill-opacity="0.97"/><rect x="26" y="257" width="1" height="1" fill="#fff" fill-opacity="0.48"/><rect x="881" y="299" width="1" height="1" fill="#fff" fill-opacity="0.89"/><rect x="557" y="170" width="1" height="1" fill="#fff" fill-opacity="0.59"/><rect x="512" y="118" width="1" height="1" fill="#fff" fill-opacity="0.55"/><rect x="1077" y="559" width="1" height="1" fill="#fff" fill-opacity="0.57"/><rect x="371" y="516" width="2" height="2" fill="#fff" fill-opacity="0.51"/><rect x="528" y="652" width="1" height="1" fill="#fff" fill-opacity="0.51"/><rect x="505" y="64" width="1" height="1" fill="#fff" fill-opacity="0.43"/><rect x="1012" y="388" width="1" height="1" fill="#fff" fill-opacity="0.39"/><rect x="472" y="465" width="1" height="1" fill="#fff" fill-opacity="0.38"/><rect x="703" y="72" width="1" height="1" fill="#fff" fill-opacity="0.67"/><rect x="1050" y="570" width="2" height="2" fill="#fff" fill-opacity="0.76"/><rect x="770" y="159" width="1" height="1" fill="#fff" fill-opacity="0.57"/><rect x="815" y="242" width="1" height="1" fill="#fff" fill-opacity="0.98"/><rect x="1000" y="235" width="1" height="1" fill="#fff" fill-opacity="0.98"/><rect x="942" y="822" width="1" height="1" fill="#fff" fill-opacity="0.85"/><rect x="690" y="183" width="1" height="1" fill="#fff" fill-opacity="0.82"/><rect x="650" y="400" width="1" height="1" fill="#fff" fill-opacity="0.84"/><rect x="88" y="334" width="1" height="1" fill="#fff" fill-opacity="0.87"/><rect x="965" y="306" width="1" height="1" fill="#fff" fill-opacity="0.70"/><rect x="51" y="222" width="1" height="1" fill="#fff" fill-opacity="0.91"/><rect x="1218" y="706" width="1" height="1" fill="#fff" fill-opacity="0.37"/><rect x="1158" y="307" width="1" height="1" fill="#fff" fill-opacity="0.65"/><rect x="424" y="787" width="1" height="1" fill="#fff" fill-opacity="0.37"/><rect x="846" y="400" width="1" height="1" fill="#fff" fill-opacity="0.62"/><rect x="116" y="548" width="1" height="1" fill="#fff" fill-opacity="0.97"/><rect x="86" y="444" width="1" height="1" fill="#fff" fill-opacity="0.67"/><rect x="269" y="545" width="1" height="1" fill="#fff" fill-opacity="0.52"/><rect x="489" y="148" width="1" height="1" fill="#fff" fill-opacity="0.72"/><rect x="1047" y="577" width="2" height="2" fill="#fff" fill-opacity="0.49"/><rect x="33" y="124" width="1" height="1" fill="#fff" fill-opacity="0.43"/><rect x="978" y="525" width="1" height="1" fill="#fff" fill-opacity="0.92"/><rect x="422" y="176" width="1" height="1" fill="#fff" fill-opacity="0.85"/><rect x="343" y="73" width="1" height="1" fill="#fff" fill-opacity="0.87"/><rect x="218" y="150" width="1" height="1" fill="#fff" fill-opacity="0.77"/><rect x="1056" y="622" width="2" height="2" fill="#fff" fill-opacity="0.77"/><rect x="109" y="162" width="1" height="1" fill="#fff" fill-opacity="0.39"/><rect x="491" y="604" width="1" height="1" fill="#fff" fill-opacity="0.45"/><rect x="535" y="410" width="1" height="1" fill="#fff" fill-opacity="0.64"/><rect x="1157" y="45" width="1" height="1" fill="#fff" fill-opacity="0.81"/><rect x="961" y="484" width="1" height="1" fill="#fff" fill-opacity="0.87"/><rect x="748" y="147" width="1" height="1" fill="#fff" fill-opacity="0.81"/><rect x="123" y="464" width="1" height="1" fill="#fff" fill-opacity="0.88"/><rect x="1187" y="514" width="2" height="2" fill="#fff" fill-opacity="0.85"/><rect x="266" y="132" width="1" height="1" fill="#fff" fill-opacity="0.62"/><rect x="701" y="252" width="1" height="1" fill="#fff" fill-opacity="0.64"/><rect x="372" y="775" width="1" height="1" fill="#fff" fill-opacity="0.96"/><rect x="133" y="365" width="1" height="1" fill="#fff" fill-opacity="0.51"/><rect x="1276" y="209" width="1" height="1" fill="#fff" fill-opacity="0.37"/><rect x="254" y="359" width="1" height="1" fill="#fff" fill-opacity="0.55"/><rect x="1266" y="182" width="1" height="1" fill="#fff" fill-opacity="0.52"/><rect x="319" y="330" width="1" height="1" fill="#fff" fill-opacity="0.94"/><rect x="680" y="207" width="1" height="1" fill="#fff" fill-opacity="0.61"/><rect x="513" y="210" width="1" height="1" fill="#fff" fill-opacity="0.79"/><rect x="780" y="308" width="1" height="1" fill="#fff" fill-opacity="0.94"/><rect x="943" y="555" width="1" height="1" fill="#fff" fill-opacity="0.47"/><rect x="688" y="727" width="1" height="1" fill="#fff" fill-opacity="0.79"/><rect x="532" y="123" width="1" height="1" fill="#fff" fill-opacity="0.71"/><rect x="709" y="723" width="1" height="1" fill="#fff" fill-opacity="0.80"/><rect x="1158" y="699" width="1" height="1" fill="#fff" fill-opacity="0.36"/><rect x="1159" y="294" width="1" height="1" fill="#fff" fill-opacity="0.76"/><rect x="880" y="227" width="2" height="2" fill="#fff" fill-opacity="0.84"/><rect x="625" y="292" width="1" height="1" fill="#fff" fill-opacity="0.61"/><rect x="729" y="831" width="1" height="1" fill="#fff" fill-opacity="0.42"/><rect x="407" y="855" width="1" height="1" fill="#fff" fill-opacity="0.37"/><rect x="663" y="318" width="1" height="1" fill="#fff" fill-opacity="0.50"/><rect x="88" y="116" width="1" height="1" fill="#fff" fill-opacity="0.47"/><rect x="892" y="377" width="1" height="1" fill="#fff" fill-opacity="0.46"/><rect x="1182" y="925" width="1" height="1" fill="#fff" fill-opacity="0.17"/><rect x="753" y="556" width="1" height="1" fill="#fff" fill-opacity="0.97"/><rect x="338" y="72" width="1" height="1" fill="#fff" fill-opacity="0.77"/><rect x="293" y="56" width="1" height="1" fill="#fff" fill-opacity="0.43"/><rect x="602" y="869" width="1" height="1" fill="#fff" fill-opacity="0.19"/><rect x="323" y="843" width="1" height="1" fill="#fff" fill-opacity="0.70"/><rect x="919" y="198" width="1" height="1" fill="#fff" fill-opacity="0.55"/><rect x="491" y="443" width="1" height="1" fill="#fff" fill-opacity="0.69"/><rect x="193" y="813" width="1" height="1" fill="#fff" fill-opacity="0.76"/><rect x="199" y="185" width="1" height="1" fill="#fff" fill-opacity="0.61"/><rect x="1102" y="130" width="1" height="1" fill="#fff" fill-opacity="0.87"/><rect x="711" y="381" width="2" height="2" fill="#fff" fill-opacity="0.65"/><rect x="89" y="377" width="1" height="1" fill="#fff" fill-opacity="0.42"/><rect x="1086" y="443" width="1" height="1" fill="#fff" fill-opacity="0.71"/><rect x="1209" y="401" width="1" height="1" fill="#fff" fill-opacity="0.40"/><rect x="399" y="702" width="1" height="1" fill="#fff" fill-opacity="0.88"/><rect x="1083" y="319" width="1" height="1" fill="#fff" fill-opacity="0.62"/><rect x="510" y="135" width="2" height="2" fill="#fff" fill-opacity="0.64"/><rect x="1276" y="856" width="1" height="1" fill="#fff" fill-opacity="0.23"/><rect x="461" y="40" width="1" height="1" fill="#fff" fill-opacity="0.95"/><rect x="772" y="574" width="1" height="1" fill="#fff" fill-opacity="0.90"/><rect x="1179" y="437" width="1" height="1" fill="#fff" fill-opacity="0.35"/><rect x="1144" y="779" width="2" height="2" fill="#fff" fill-opacity="0.37"/><rect x="1002" y="595" width="1" height="1" fill="#fff" fill-opacity="0.57"/><rect x="814" y="411" width="1" height="1" fill="#fff" fill-opacity="0.67"/><rect x="1167" y="439" width="1" height="1" fill="#fff" fill-opacity="0.64"/><rect x="160" y="485" width="1" height="1" fill="#fff" fill-opacity="0.71"/><rect x="846" y="156" width="1" height="1" fill="#fff" fill-opacity="0.70"/><rect x="427" y="274" width="1" height="1" fill="#fff" fill-opacity="0.37"/><rect x="1081" y="458" width="1" height="1" fill="#fff" fill-opacity="0.71"/><rect x="1175" y="735" width="1" height="1" fill="#fff" fill-opacity="0.65"/><rect x="381" y="681" width="2" height="2" fill="#fff" fill-opacity="0.90"/><rect x="555" y="408" width="2" height="2" fill="#fff" fill-opacity="0.42"/><rect x="715" y="426" width="1" height="1" fill="#fff" fill-opacity="0.90"/><rect x="692" y="368" width="1" height="1" fill="#fff" fill-opacity="0.55"/><rect x="360" y="839" width="1" height="1" fill="#fff" fill-opacity="0.89"/><rect x="129" y="502" width="1" height="1" fill="#fff" fill-opacity="0.99"/><rect x="441" y="448" width="2" height="2" fill="#fff" fill-opacity="0.51"/><rect x="52" y="106" width="1" height="1" fill="#fff" fill-opacity="0.71"/><rect x="738" y="104" width="2" height="2" fill="#fff" fill-opacity="0.97"/><rect x="1178" y="292" width="1" height="1" fill="#fff" fill-opacity="0.58"/><rect x="120" y="272" width="1" height="1" fill="#fff" fill-opacity="0.65"/><rect x="200" y="177" width="1" height="1" fill="#fff" fill-opacity="0.86"/><rect x="939" y="490" width="2" height="2" fill="#fff" fill-opacity="0.95"/><rect x="1061" y="378" width="1" height="1" fill="#fff" fill-opacity="0.79"/><rect x="513" y="448" width="1" height="1" fill="#fff" fill-opacity="0.88"/><rect x="173" y="909" width="1" height="1" fill="#fff" fill-opacity="0.41"/><rect x="117" y="179" width="1" height="1" fill="#fff" fill-opacity="0.57"/><rect x="836" y="451" width="1" height="1" fill="#fff" fill-opacity="0.48"/><rect x="270" y="161" width="1" height="1" fill="#fff" fill-opacity="0.91"/><rect x="55" y="643" width="1" height="1" fill="#fff" fill-opacity="0.39"/><rect x="539" y="272" width="1" height="1" fill="#fff" fill-opacity="0.64"/><rect x="153" y="684" width="1" height="1" fill="#fff" fill-opacity="0.49"/><rect x="899" y="628" width="1" height="1" fill="#fff" fill-opacity="0.56"/><rect x="823" y="512" width="1" height="1" fill="#fff" fill-opacity="0.87"/><rect x="198" y="493" width="1" height="1" fill="#fff" fill-opacity="0.40"/><rect x="492" y="715" width="2" height="2" fill="#fff" fill-opacity="0.40"/><rect x="844" y="513" width="1" height="1" fill="#fff" fill-opacity="0.44"/><rect x="949" y="324" width="2" height="2" fill="#fff" fill-opacity="1.00"/><rect x="1140" y="193" width="1" height="1" fill="#fff" fill-opacity="0.76"/><rect x="484" y="283" width="1" height="1" fill="#fff" fill-opacity="0.91"/><rect x="1103" y="697" width="1" height="1" fill="#fff" fill-opacity="0.50"/><rect x="678" y="96" width="1" height="1" fill="#fff" fill-opacity="0.47"/><rect x="946" y="675" width="2" height="2" fill="#fff" fill-opacity="0.65"/><rect x="825" y="103" width="1" height="1" fill="#fff" fill-opacity="0.47"/><rect x="414" y="803" width="1" height="1" fill="#fff" fill-opacity="0.97"/><rect x="732" y="695" width="1" height="1" fill="#fff" fill-opacity="0.52"/><rect x="656" y="792" width="1" height="1" fill="#fff" fill-opacity="0.37"/><rect x="612" y="44" width="1" height="1" fill="#fff" fill-opacity="0.42"/><rect x="799" y="566" width="1" height="1" fill="#fff" fill-opacity="0.58"/><rect x="1203" y="66" width="1" height="1" fill="#fff" fill-opacity="0.81"/><rect x="951" y="350" width="1" height="1" fill="#fff" fill-opacity="0.91"/><rect x="958" y="50" width="2" height="2" fill="#fff" fill-opacity="0.36"/><rect x="8" y="566" width="1" height="1" fill="#fff" fill-opacity="0.82"/><rect x="186" y="840" width="1" height="1" fill="#fff" fill-opacity="0.60"/><rect x="480" y="435" width="1" height="1" fill="#fff" fill-opacity="0.56"/><rect x="3" y="382" width="1" height="1" fill="#fff" fill-opacity="0.77"/><rect x="1163" y="327" width="2" height="2" fill="#fff" fill-opacity="0.81"/><rect x="16" y="72" width="2" height="2" fill="#fff" fill-opacity="0.69"/><rect x="356" y="196" width="1" height="1" fill="#fff" fill-opacity="0.76"/><rect x="123" y="207" width="1" height="1" fill="#fff" fill-opacity="0.65"/><rect x="1016" y="131" width="1" height="1" fill="#fff" fill-opacity="0.81"/><rect x="414" y="202" width="1" height="1" fill="#fff" fill-opacity="0.68"/><rect x="922" y="389" width="1" height="1" fill="#fff" fill-opacity="0.69"/><rect x="84" y="464" width="1" height="1" fill="#fff" fill-opacity="0.76"/><rect x="470" y="238" width="1" height="1" fill="#fff" fill-opacity="0.75"/><rect x="186" y="79" width="2" height="2" fill="#fff" fill-opacity="0.82"/><rect x="995" y="54" width="1" height="1" fill="#fff" fill-opacity="0.64"/><rect x="1261" y="46" width="2" height="2" fill="#fff" fill-opacity="0.89"/><rect x="1268" y="300" width="2" height="2" fill="#fff" fill-opacity="0.83"/><rect x="808" y="152" width="1" height="1" fill="#fff" fill-opacity="0.66"/><rect x="695" y="353" width="1" height="1" fill="#fff" fill-opacity="1.00"/><rect x="918" y="165" width="1" height="1" fill="#fff" fill-opacity="0.79"/><rect x="619" y="141" width="1" height="1" fill="#fff" fill-opacity="0.79"/><rect x="1182" y="370" width="1" height="1" fill="#fff" fill-opacity="0.83"/><rect x="1131" y="217" width="1" height="1" fill="#fff" fill-opacity="0.89"/><rect x="1110" y="435" width="1" height="1" fill="#fff" fill-opacity="0.63"/><rect x="455" y="406" width="1" height="1" fill="#fff" fill-opacity="0.65"/><rect x="40" y="112" width="1" height="1" fill="#fff" fill-opacity="0.60"/><rect x="530" y="217" width="1" height="1" fill="#fff" fill-opacity="0.68"/><rect x="5" y="446" width="1" height="1" fill="#fff" fill-opacity="0.70"/><rect x="664" y="99" width="1" height="1" fill="#fff" fill-opacity="0.74"/><rect x="663" y="105" width="2" height="2" fill="#fff" fill-opacity="0.93"/><rect x="1217" y="282" width="1" height="1" fill="#fff" fill-opacity="0.86"/><rect x="164" y="491" width="1" height="1" fill="#fff" fill-opacity="0.86"/><rect x="991" y="486" width="2" height="2" fill="#fff" fill-opacity="0.98"/><rect x="928" y="317" width="1" height="1" fill="#fff" fill-opacity="0.60"/><rect x="377" y="346" width="1" height="1" fill="#fff" fill-opacity="0.68"/><rect x="1233" y="347" width="1" height="1" fill="#fff" fill-opacity="0.81"/><rect x="33" y="130" width="1" height="1" fill="#fff" fill-opacity="0.95"/><rect x="608" y="68" width="1" height="1" fill="#fff" fill-opacity="0.65"/><rect x="909" y="207" width="2" height="2" fill="#fff" fill-opacity="0.83"/><rect x="781" y="172" width="1" height="1" fill="#fff" fill-opacity="0.70"/><rect x="1175" y="89" width="1" height="1" fill="#fff" fill-opacity="0.69"/><rect x="781" y="240" width="2" height="2" fill="#fff" fill-opacity="0.92"/><rect x="377" y="113" width="2" height="2" fill="#fff" fill-opacity="0.71"/><rect x="290" y="298" width="1" height="1" fill="#fff" fill-opacity="0.88"/><rect x="429" y="282" width="1" height="1" fill="#fff" fill-opacity="0.67"/><rect x="495" y="124" width="2" height="2" fill="#fff" fill-opacity="0.63"/><rect x="717" y="385" width="1" height="1" fill="#fff" fill-opacity="0.86"/><rect x="179" y="142" width="2" height="2" fill="#fff" fill-opacity="0.97"/><rect x="36" y="43" width="1" height="1" fill="#fff" fill-opacity="0.83"/><rect x="1231" y="416" width="2" height="2" fill="#fff" fill-opacity="0.91"/><rect x="492" y="508" width="1" height="1" fill="#fff" fill-opacity="0.81"/><rect x="696" y="221" width="1" height="1" fill="#fff" fill-opacity="0.76"/><rect x="866" y="316" width="1" height="1" fill="#fff" fill-opacity="0.94"/><rect x="332" y="424" width="1" height="1" fill="#fff" fill-opacity="0.96"/><rect x="91" y="183" width="1" height="1" fill="#fff" fill-opacity="0.69"/><rect x="1164" y="233" width="1" height="1" fill="#fff" fill-opacity="0.69"/><rect x="961" y="143" width="1" height="1" fill="#fff" fill-opacity="0.63"/><rect x="874" y="241" width="1" height="1" fill="#fff" fill-opacity="0.89"/><rect x="895" y="439" width="1" height="1" fill="#fff" fill-opacity="0.88"/><rect x="1014" y="386" width="1" height="1" fill="#fff" fill-opacity="0.78"/><rect x="732" y="286" width="2" height="2" fill="#fff" fill-opacity="0.79"/><rect x="1090" y="457" width="1" height="1" fill="#fff" fill-opacity="0.64"/><rect x="991" y="68" width="2" height="2" fill="#fff" fill-opacity="0.67"/><rect x="909" y="208" width="1" height="1" fill="#fff" fill-opacity="0.71"/><rect x="692" y="228" width="1" height="1" fill="#fff" fill-opacity="0.78"/><rect x="1145" y="74" width="1" height="1" fill="#fff" fill-opacity="0.71"/><rect x="720" y="428" width="1" height="1" fill="#fff" fill-opacity="0.90"/><rect x="1010" y="339" width="1" height="1" fill="#fff" fill-opacity="0.60"/><rect x="271" y="135" width="1" height="1" fill="#fff" fill-opacity="0.69"/><rect x="677" y="227" width="2" height="2" fill="#fff" fill-opacity="0.83"/><rect x="1196" y="324" width="1" height="1" fill="#fff" fill-opacity="0.62"/><rect x="1213" y="334" width="1" height="1" fill="#fff" fill-opacity="0.69"/><rect x="73" y="398" width="1" height="1" fill="#fff" fill-opacity="0.81"/><rect x="1192" y="319" width="2" height="2" fill="#fff" fill-opacity="0.90"/><rect x="765" y="243" width="1" height="1" fill="#fff" fill-opacity="0.71"/><rect x="1033" y="218" width="2" height="2" fill="#fff" fill-opacity="0.81"/><rect x="476" y="143" width="1" height="1" fill="#fff" fill-opacity="0.67"/><rect x="1121" y="89" width="1" height="1" fill="#fff" fill-opacity="0.79"/><rect x="153" y="242" width="1" height="1" fill="#fff" fill-opacity="0.88"/><rect x="523" y="436" width="2" height="2" fill="#fff" fill-opacity="0.91"/><rect x="205" y="212" width="1" height="1" fill="#fff" fill-opacity="0.69"/><rect x="160" y="486" width="1" height="1" fill="#fff" fill-opacity="0.75"/><rect x="308" y="497" width="1" height="1" fill="#fff" fill-opacity="0.62"/><rect x="335" y="387" width="1" height="1" fill="#fff" fill-opacity="0.83"/><rect x="1233" y="107" width="2" height="2" fill="#fff" fill-opacity="0.71"/><rect x="12" y="85" width="1" height="1" fill="#fff" fill-opacity="0.89"/><rect x="480" y="290" width="1" height="1" fill="#fff" fill-opacity="0.71"/><rect x="217" y="518" width="1" height="1" fill="#fff" fill-opacity="0.94"/><rect x="512" y="476" width="1" height="1" fill="#fff" fill-opacity="0.96"/><rect x="280" y="345" width="1" height="1" fill="#fff" fill-opacity="0.83"/><rect x="942" y="98" width="1" height="1" fill="#fff" fill-opacity="0.66"/><rect x="1100" y="206" width="1" height="1" fill="#fff" fill-opacity="0.93"/><rect x="105" y="502" width="1" height="1" fill="#fff" fill-opacity="0.79"/><rect x="471" y="228" width="1" height="1" fill="#fff" fill-opacity="0.66"/><rect x="232" y="100" width="2" height="2" fill="#fff" fill-opacity="0.99"/><rect x="443" y="485" width="1" height="1" fill="#fff" fill-opacity="0.67"/><rect x="643" y="263" width="1" height="1" fill="#fff" fill-opacity="0.75"/><rect x="371" y="125" width="2" height="2" fill="#fff" fill-opacity="0.98"/><rect x="825" y="36" width="1" height="1" fill="#fff" fill-opacity="0.79"/><rect x="133" y="414" width="2" height="2" fill="#fff" fill-opacity="1.00"/><rect x="328" y="144" width="1" height="1" fill="#fff" fill-opacity="0.64"/><rect x="481" y="54" width="1" height="1" fill="#fff" fill-opacity="0.86"/><rect x="795" y="296" width="1" height="1" fill="#fff" fill-opacity="0.89"/><rect x="70" y="449" width="1" height="1" fill="#fff" fill-opacity="0.82"/><rect x="200" y="272" width="1" height="1" fill="#fff" fill-opacity="0.78"/><rect x="670" y="77" width="1" height="1" fill="#fff" fill-opacity="0.88"/><rect x="246" y="234" width="2" height="2" fill="#fff" fill-opacity="0.62"/><rect x="539" y="334" width="1" height="1" fill="#fff" fill-opacity="0.99"/><rect x="681" y="472" width="1" height="1" fill="#fff" fill-opacity="0.85"/><rect x="968" y="519" width="1" height="1" fill="#fff" fill-opacity="0.84"/><rect x="242" y="139" width="2" height="2" fill="#fff" fill-opacity="0.65"/><rect x="1250" y="98" width="1" height="1" fill="#fff" fill-opacity="0.94"/><rect x="21" y="520" width="2" height="2" fill="#fff" fill-opacity="0.99"/><rect x="536" y="323" width="1" height="1" fill="#fff" fill-opacity="0.95"/><rect x="228" y="78" width="1" height="1" fill="#fff" fill-opacity="0.96"/><rect x="1151" y="341" width="1" height="1" fill="#fff" fill-opacity="0.67"/><rect x="400" y="344" width="1" height="1" fill="#fff" fill-opacity="0.80"/><rect x="75" y="88" width="2" height="2" fill="#fff" fill-opacity="0.67"/><rect x="101" y="70" width="1" height="1" fill="#fff" fill-opacity="0.72"/><rect x="775" y="309" width="1" height="1" fill="#fff" fill-opacity="0.79"/><rect x="66" y="327" width="1" height="1" fill="#fff" fill-opacity="0.63"/><rect x="924" y="467" width="2" height="2" fill="#fff" fill-opacity="0.87"/><rect x="949" y="325" width="1" height="1" fill="#fff" fill-opacity="0.84"/><rect x="866" y="122" width="2" height="2" fill="#fff" fill-opacity="0.94"/><rect x="1193" y="272" width="2" height="2" fill="#fff" fill-opacity="0.66"/><rect x="1039" y="163" width="1" height="1" fill="#fff" fill-opacity="0.84"/><rect x="956" y="496" width="1" height="1" fill="#fff" fill-opacity="0.72"/><rect x="524" y="96" width="1" height="1" fill="#fff" fill-opacity="0.81"/><rect x="457" y="227" width="1" height="1" fill="#fff" fill-opacity="0.80"/><rect x="728" y="198" width="1" height="1" fill="#fff" fill-opacity="0.93"/><rect x="760" y="156" width="1" height="1" fill="#fff" fill-opacity="0.83"/><rect x="1274" y="42" width="2" height="2" fill="#fff" fill-opacity="0.95"/><rect x="614" y="202" width="1" height="1" fill="#fff" fill-opacity="0.71"/><rect x="610" y="112" width="1" height="1" fill="#fff" fill-opacity="0.69"/><rect x="182" y="378" width="1" height="1" fill="#fff" fill-opacity="0.91"/><rect x="239" y="141" width="1" height="1" fill="#fff" fill-opacity="0.94"/><rect x="619" y="357" width="1" height="1" fill="#fff" fill-opacity="0.80"/><rect x="992" y="313" width="1" height="1" fill="#fff" fill-opacity="0.77"/><rect x="36" y="294" width="1" height="1" fill="#fff" fill-opacity="0.61"/><rect x="109" y="509" width="1" height="1" fill="#fff" fill-opacity="0.76"/><rect x="658" y="211" width="1" height="1" fill="#fff" fill-opacity="0.63"/><rect x="39" y="290" width="1" height="1" fill="#fff" fill-opacity="0.74"/><rect x="511" y="420" width="2" height="2" fill="#fff" fill-opacity="0.76"/><rect x="764" y="388" width="1" height="1" fill="#fff" fill-opacity="0.64"/><rect x="1270" y="286" width="2" height="2" fill="#fff" fill-opacity="0.75"/><rect x="1065" y="457" width="2" height="2" fill="#fff" fill-opacity="0.66"/><rect x="706" y="93" width="1" height="1" fill="#fff" fill-opacity="0.64"/><rect x="336" y="128" width="1" height="1" fill="#fff" fill-opacity="0.97"/><rect x="179" y="167" width="1" height="1" fill="#fff" fill-opacity="0.92"/><rect x="699" y="375" width="2" height="2" fill="#fff" fill-opacity="0.95"/><rect x="735" y="33" width="2" height="2" fill="#fff" fill-opacity="0.97"/><rect x="1265" y="255" width="1" height="1" fill="#fff" fill-opacity="0.64"/><rect x="1179" y="197" width="2" height="2" fill="#fff" fill-opacity="0.73"/><rect x="305" y="490" width="1" height="1" fill="#fff" fill-opacity="0.62"/><rect x="442" y="493" width="2" height="2" fill="#fff" fill-opacity="0.64"/><rect x="1191" y="307" width="1" height="1" fill="#fff" fill-opacity="0.74"/><rect x="166" y="194" width="1" height="1" fill="#fff" fill-opacity="0.67"/><rect x="1104" y="403" width="1" height="1" fill="#fff" fill-opacity="0.80"/><rect x="668" y="160" width="1" height="1" fill="#fff" fill-opacity="0.88"/><rect x="942" y="318" width="1" height="1" fill="#fff" fill-opacity="0.77"/><rect x="1104" y="146" width="2" height="2" fill="#fff" fill-opacity="0.72"/><rect x="744" y="366" width="1" height="1" fill="#fff" fill-opacity="0.91"/><rect x="979" y="60" width="1" height="1" fill="#fff" fill-opacity="0.91"/><rect x="625" y="84" width="2" height="2" fill="#fff" fill-opacity="0.79"/><rect x="656" y="54" width="1" height="1" fill="#fff" fill-opacity="0.98"/><rect x="877" y="276" width="1" height="1" fill="#fff" fill-opacity="0.68"/><rect x="1195" y="123" width="2" height="2" fill="#fff" fill-opacity="0.79"/><rect x="634" y="179" width="1" height="1" fill="#fff" fill-opacity="0.83"/><rect x="1046" y="457" width="1" height="1" fill="#fff" fill-opacity="0.80"/><rect x="786" y="515" width="1" height="1" fill="#fff" fill-opacity="0.61"/><rect x="719" y="225" width="2" height="2" fill="#fff" fill-opacity="1.00"/><rect x="147" y="364" width="1" height="1" fill="#fff" fill-opacity="0.80"/><rect x="495" y="174" width="1" height="1" fill="#fff" fill-opacity="0.65"/><rect x="324" y="339" width="1" height="1" fill="#fff" fill-opacity="0.86"/><rect x="603" y="457" width="1" height="1" fill="#fff" fill-opacity="0.93"/><rect x="456" y="160" width="2" height="2" fill="#fff" fill-opacity="0.75"/><rect x="1136" y="69" width="1" height="1" fill="#fff" fill-opacity="0.83"/><rect x="545" y="280" width="1" height="1" fill="#fff" fill-opacity="0.80"/><rect x="920" y="65" width="2" height="2" fill="#fff" fill-opacity="0.63"/><rect x="299" y="303" width="2" height="2" fill="#fff" fill-opacity="0.87"/><rect x="456" y="441" width="1" height="1" fill="#fff" fill-opacity="0.74"/><rect x="1278" y="491" width="1" height="1" fill="#fff" fill-opacity="0.74"/><rect x="1236" y="293" width="2" height="2" fill="#fff" fill-opacity="0.64"/><rect x="595" y="68" width="1" height="1" fill="#fff" fill-opacity="0.65"/><rect x="949" y="420" width="2" height="2" fill="#fff" fill-opacity="0.98"/><rect x="107" y="398" width="1" height="1" fill="#fff" fill-opacity="0.94"/><rect x="140" y="378" width="1" height="1" fill="#fff" fill-opacity="0.86"/><rect x="796" y="247" width="1" height="1" fill="#fff" fill-opacity="0.75"/><rect x="747" y="488" width="1" height="1" fill="#fff" fill-opacity="0.68"/><rect x="1140" y="361" width="1" height="1" fill="#fff" fill-opacity="0.83"/><rect x="1008" y="68" width="2" height="2" fill="#fff" fill-opacity="0.89"/><rect x="1024" y="272" width="1" height="1" fill="#fff" fill-opacity="0.61"/><rect x="1181" y="355" width="2" height="2" fill="#fff" fill-opacity="0.73"/><rect x="1052" y="408" width="1" height="1" fill="#fff" fill-opacity="0.65"/><rect x="757" y="452" width="1" height="1" fill="#fff" fill-opacity="0.65"/><rect x="724" y="396" width="2" height="2" fill="#fff" fill-opacity="0.79"/><rect x="1142" y="121" width="1" height="1" fill="#fff" fill-opacity="0.63"/><rect x="985" y="469" width="1" height="1" fill="#fff" fill-opacity="0.68"/><rect x="985" y="305" width="2" height="2" fill="#fff" fill-opacity="0.62"/><rect x="671" y="403" width="2" height="2" fill="#fff" fill-opacity="0.98"/><rect x="734" y="228" width="1" height="1" fill="#fff" fill-opacity="0.63"/><rect x="431" y="352" width="1" height="1" fill="#fff" fill-opacity="0.82"/><rect x="1132" y="171" width="1" height="1" fill="#fff" fill-opacity="0.88"/><rect x="288" y="135" width="2" height="2" fill="#fff" fill-opacity="0.80"/><rect x="831" y="251" width="2" height="2" fill="#fff" fill-opacity="0.76"/><rect x="281" y="468" width="1" height="1" fill="#fff" fill-opacity="0.62"/><rect x="1126" y="104" width="1" height="1" fill="#fff" fill-opacity="0.80"/><rect x="222" y="416" width="1" height="1" fill="#fff" fill-opacity="0.89"/><rect x="669" y="236" width="1" height="1" fill="#fff" fill-opacity="0.94"/><rect x="125" y="517" width="1" height="1" fill="#fff" fill-opacity="0.88"/><rect x="1123" y="502" width="1" height="1" fill="#fff" fill-opacity="0.89"/><rect x="80" y="207" width="1" height="1" fill="#fff" fill-opacity="0.75"/><rect x="614" y="500" width="1" height="1" fill="#fff" fill-opacity="0.73"/><rect x="1092" y="91" width="1" height="1" fill="#fff" fill-opacity="0.87"/><rect x="843" y="355" width="1" height="1" fill="#fff" fill-opacity="0.72"/><rect x="935" y="328" width="1" height="1" fill="#fff" fill-opacity="0.89"/><rect x="878" y="245" width="2" height="2" fill="#fff" fill-opacity="0.64"/><rect x="300" y="208" width="2" height="2" fill="#fff" fill-opacity="0.67"/><rect x="698" y="149" width="1" height="1" fill="#fff" fill-opacity="0.69"/><rect x="503" y="457" width="2" height="2" fill="#fff" fill-opacity="0.66"/><rect x="1184" y="416" width="1" height="1" fill="#fff" fill-opacity="0.92"/><rect x="1010" y="249" width="1" height="1" fill="#fff" fill-opacity="0.91"/><rect x="1113" y="255" width="1" height="1" fill="#fff" fill-opacity="0.94"/><rect x="974" y="514" width="1" height="1" fill="#fff" fill-opacity="0.65"/><rect x="151" y="75" width="1" height="1" fill="#fff" fill-opacity="0.63"/><rect x="764" y="189" width="1" height="1" fill="#fff" fill-opacity="0.81"/><rect x="516" y="40" width="2" height="2" fill="#fff" fill-opacity="0.65"/><rect x="1043" y="151" width="1" height="1" fill="#fff" fill-opacity="0.98"/><rect x="933" y="513" width="2" height="2" fill="#fff" fill-opacity="0.77"/><rect x="265" y="128" width="1" height="1" fill="#fff" fill-opacity="0.95"/><rect x="1261" y="167" width="1" height="1" fill="#fff" fill-opacity="0.77"/><rect x="870" y="327" width="2" height="2" fill="#fff" fill-opacity="0.82"/><rect x="562" y="133" width="2" height="2" fill="#fff" fill-opacity="0.95"/><rect x="1176" y="328" width="1" height="1" fill="#fff" fill-opacity="0.72"/><rect x="1181" y="363" width="1" height="1" fill="#fff" fill-opacity="0.93"/><rect x="428" y="456" width="1" height="1" fill="#fff" fill-opacity="0.82"/><rect x="666" y="59" width="2" height="2" fill="#fff" fill-opacity="0.79"/><rect x="1071" y="418" width="1" height="1" fill="#fff" fill-opacity="0.68"/><rect x="379" y="292" width="1" height="1" fill="#fff" fill-opacity="0.92"/><rect x="475" y="141" width="1" height="1" fill="#fff" fill-opacity="0.61"/><rect x="168" y="392" width="1" height="1" fill="#fff" fill-opacity="0.74"/><rect x="1053" y="272" width="1" height="1" fill="#fff" fill-opacity="0.99"/><rect x="1140" y="49" width="1" height="1" fill="#fff" fill-opacity="0.80"/><rect x="88" y="227" width="1" height="1" fill="#fff" fill-opacity="0.83"/><rect x="710" y="52" width="1" height="1" fill="#fff" fill-opacity="0.67"/><rect x="775" y="506" width="1" height="1" fill="#fff" fill-opacity="0.82"/><rect x="410" y="306" width="2" height="2" fill="#fff" fill-opacity="0.89"/><rect x="333" y="319" width="1" height="1" fill="#fff" fill-opacity="0.76"/><rect x="336" y="143" width="1" height="1" fill="#fff" fill-opacity="0.85"/><rect x="1148" y="367" width="1" height="1" fill="#fff" fill-opacity="0.67"/><rect x="838" y="520" width="1" height="1" fill="#fff" fill-opacity="0.95"/><rect x="86" y="139" width="1" height="1" fill="#fff" fill-opacity="0.79"/><rect x="443" y="92" width="1" height="1" fill="#fff" fill-opacity="0.63"/><rect x="1189" y="267" width="2" height="2" fill="#fff" fill-opacity="0.88"/><rect x="355" y="229" width="1" height="1" fill="#fff" fill-opacity="0.85"/><rect x="874" y="516" width="1" height="1" fill="#fff" fill-opacity="0.79"/><rect x="89" y="233" width="1" height="1" fill="#fff" fill-opacity="0.80"/><rect x="1201" y="420" width="1" height="1" fill="#fff" fill-opacity="0.70"/><rect x="1010" y="494" width="2" height="2" fill="#fff" fill-opacity="0.65"/><rect x="299" y="203" width="1" height="1" fill="#fff" fill-opacity="0.61"/><rect x="994" y="459" width="1" height="1" fill="#fff" fill-opacity="0.83"/><rect x="809" y="179" width="1" height="1" fill="#fff" fill-opacity="0.86"/><rect x="1105" y="348" width="1" height="1" fill="#fff" fill-opacity="0.61"/><rect x="27" y="153" width="1" height="1" fill="#fff" fill-opacity="0.64"/><rect x="261" y="75" width="2" height="2" fill="#fff" fill-opacity="0.84"/><rect x="189" y="98" width="1" height="1" fill="#fff" fill-opacity="0.90"/><rect x="840" y="434" width="1" height="1" fill="#fff" fill-opacity="0.82"/><rect x="1039" y="86" width="1" height="1" fill="#fff" fill-opacity="0.78"/><rect x="843" y="124" width="1" height="1" fill="#fff" fill-opacity="0.64"/><rect x="906" y="505" width="1" height="1" fill="#fff" fill-opacity="0.64"/><rect x="991" y="210" width="1" height="1" fill="#fff" fill-opacity="0.84"/><rect x="1079" y="306" width="1" height="1" fill="#fff" fill-opacity="0.88"/><rect x="1230" y="123" width="1" height="1" fill="#fff" fill-opacity="0.79"/><rect x="413" y="275" width="2" height="2" fill="#fff" fill-opacity="0.79"/><rect x="423" y="201" width="1" height="1" fill="#fff" fill-opacity="0.99"/><rect x="494" y="259" width="1" height="1" fill="#fff" fill-opacity="0.93"/><rect x="1019" y="230" width="2" height="2" fill="#fff" fill-opacity="0.76"/><rect x="989" y="252" width="1" height="1" fill="#fff" fill-opacity="0.74"/><rect x="1010" y="424" width="2" height="2" fill="#fff" fill-opacity="0.98"/><rect x="589" y="432" width="1" height="1" fill="#fff" fill-opacity="0.98"/><rect x="423" y="506" width="2" height="2" fill="#fff" fill-opacity="0.68"/><rect x="313" y="504" width="1" height="1" fill="#fff" fill-opacity="0.81"/><rect x="85" y="370" width="1" height="1" fill="#fff" fill-opacity="0.80"/><rect x="357" y="370" width="1" height="1" fill="#fff" fill-opacity="0.96"/><rect x="910" y="316" width="2" height="2" fill="#fff" fill-opacity="0.84"/><rect x="230" y="368" width="1" height="1" fill="#fff" fill-opacity="0.86"/><rect x="181" y="441" width="1" height="1" fill="#fff" fill-opacity="0.72"/><rect x="1261" y="122" width="1" height="1" fill="#fff" fill-opacity="0.84"/><rect x="374" y="240" width="2" height="2" fill="#fff" fill-opacity="0.88"/><rect x="308" y="62" width="1" height="1" fill="#fff" fill-opacity="0.62"/><rect x="957" y="421" width="1" height="1" fill="#fff" fill-opacity="0.82"/><rect x="43" y="421" width="1" height="1" fill="#fff" fill-opacity="0.63"/><rect x="768" y="165" width="1" height="1" fill="#fff" fill-opacity="0.81"/><rect x="311" y="116" width="1" height="1" fill="#fff" fill-opacity="0.92"/><rect x="22" y="190" width="1" height="1" fill="#fff" fill-opacity="0.89"/><rect x="751" y="497" width="1" height="1" fill="#fff" fill-opacity="0.61"/><rect x="264" y="132" width="2" height="2" fill="#fff" fill-opacity="0.88"/><rect x="115" y="112" width="2" height="2" fill="#fff" fill-opacity="0.71"/><rect x="253" y="138" width="1" height="1" fill="#fff" fill-opacity="0.63"/><rect x="964" y="96" width="1" height="1" fill="#fff" fill-opacity="0.90"/><rect x="1009" y="429" width="1" height="1" fill="#fff" fill-opacity="0.94"/><rect x="350" y="283" width="1" height="1" fill="#fff" fill-opacity="0.96"/><rect x="1157" y="371" width="1" height="1" fill="#fff" fill-opacity="0.67"/><rect x="657" y="93" width="2" height="2" fill="#fff" fill-opacity="0.68"/><rect x="1257" y="42" width="1" height="1" fill="#fff" fill-opacity="0.91"/><rect x="1173" y="509" width="1" height="1" fill="#fff" fill-opacity="0.63"/><rect x="586" y="289" width="1" height="1" fill="#fff" fill-opacity="0.99"/><rect x="831" y="333" width="1" height="1" fill="#fff" fill-opacity="0.83"/><rect x="287" y="145" width="1" height="1" fill="#fff" fill-opacity="0.90"/><rect x="32" y="106" width="1" height="1" fill="#fff" fill-opacity="0.82"/><rect x="168" y="198" width="2" height="2" fill="#fff" fill-opacity="0.81"/><rect x="1143" y="413" width="1" height="1" fill="#fff" fill-opacity="1.00"/><rect x="318" y="162" width="1" height="1" fill="#fff" fill-opacity="0.88"/><rect x="999" y="135" width="2" height="2" fill="#fff" fill-opacity="0.79"/><rect x="1267" y="216" width="1" height="1" fill="#fff" fill-opacity="0.60"/><rect x="550" y="166" width="1" height="1" fill="#fff" fill-opacity="0.60"/><rect x="230" y="390" width="1" height="1" fill="#fff" fill-opacity="0.80"/><rect x="592" y="290" width="1" height="1" fill="#fff" fill-opacity="0.85"/><rect x="148" y="117" width="1" height="1" fill="#fff" fill-opacity="0.95"/><rect x="623" y="165" width="1" height="1" fill="#fff" fill-opacity="0.94"/><rect x="43" y="66" width="1" height="1" fill="#fff" fill-opacity="0.70"/><rect x="64" y="440" width="1" height="1" fill="#fff" fill-opacity="0.68"/><rect x="807" y="491" width="1" height="1" fill="#fff" fill-opacity="0.97"/><rect x="663" y="323" width="2" height="2" fill="#fff" fill-opacity="0.81"/><rect x="819" y="346" width="1" height="1" fill="#fff" fill-opacity="0.80"/><rect x="441" y="517" width="1" height="1" fill="#fff" fill-opacity="0.94"/><rect x="695" y="387" width="1" height="1" fill="#fff" fill-opacity="0.63"/><rect x="1173" y="122" width="1" height="1" fill="#fff" fill-opacity="0.60"/><rect x="908" y="181" width="1" height="1" fill="#fff" fill-opacity="0.68"/><rect x="957" y="61" width="2" height="2" fill="#fff" fill-opacity="0.70"/><rect x="307" y="46" width="1" height="1" fill="#fff" fill-opacity="0.84"/><rect x="842" y="474" width="2" height="2" fill="#fff" fill-opacity="0.81"/><rect x="890" y="220" width="1" height="1" fill="#fff" fill-opacity="0.87"/><rect x="1115" y="207" width="1" height="1" fill="#fff" fill-opacity="0.64"/><rect x="9" y="401" width="1" height="1" fill="#fff" fill-opacity="0.64"/><rect x="511" y="316" width="1" height="1" fill="#fff" fill-opacity="0.87"/><rect x="392" y="415" width="1" height="1" fill="#fff" fill-opacity="0.73"/><rect x="1079" y="491" width="2" height="2" fill="#fff" fill-opacity="0.93"/><rect x="175" y="327" width="2" height="2" fill="#fff" fill-opacity="0.94"/><rect x="466" y="95" width="1" height="1" fill="#fff" fill-opacity="0.92"/><rect x="898" y="318" width="2" height="2" fill="#fff" fill-opacity="0.64"/><rect x="972" y="70" width="2" height="2" fill="#fff" fill-opacity="0.62"/><rect x="921" y="371" width="2" height="2" fill="#fff" fill-opacity="0.96"/><rect x="263" y="206" width="1" height="1" fill="#fff" fill-opacity="0.92"/><rect x="646" y="415" width="1" height="1" fill="#fff" fill-opacity="1.00"/><rect x="1263" y="304" width="1" height="1" fill="#fff" fill-opacity="0.99"/><rect x="531" y="179" width="1" height="1" fill="#fff" fill-opacity="0.72"/><rect x="863" y="466" width="1" height="1" fill="#fff" fill-opacity="0.86"/><rect x="245" y="123" width="1" height="1" fill="#fff" fill-opacity="0.97"/><rect x="1206" y="289" width="1" height="1" fill="#fff" fill-opacity="0.94"/><rect x="590" y="336" width="1" height="1" fill="#fff" fill-opacity="0.89"/><rect x="729" y="374" width="1" height="1" fill="#fff" fill-opacity="0.64"/><rect x="550" y="323" width="1" height="1" fill="#fff" fill-opacity="0.76"/><rect x="933" y="434" width="1" height="1" fill="#cfe4ff" fill-opacity="0.49"/><rect x="1204" y="755" width="1" height="1" fill="#cfe4ff" fill-opacity="0.38"/><rect x="562" y="488" width="1" height="1" fill="#cfe4ff" fill-opacity="0.54"/><rect x="1104" y="328" width="1" height="1" fill="#cfe4ff" fill-opacity="0.66"/><rect x="257" y="668" width="1" height="1" fill="#cfe4ff" fill-opacity="0.26"/><rect x="1097" y="627" width="1" height="1" fill="#cfe4ff" fill-opacity="0.70"/><rect x="621" y="811" width="1" height="1" fill="#cfe4ff" fill-opacity="0.28"/><rect x="511" y="522" width="1" height="1" fill="#cfe4ff" fill-opacity="0.48"/><rect x="31" y="559" width="1" height="1" fill="#cfe4ff" fill-opacity="0.63"/><rect x="1155" y="458" width="1" height="1" fill="#cfe4ff" fill-opacity="0.62"/><rect x="1041" y="638" width="1" height="1" fill="#cfe4ff" fill-opacity="0.67"/><rect x="281" y="425" width="1" height="1" fill="#cfe4ff" fill-opacity="0.56"/><rect x="1219" y="343" width="1" height="1" fill="#cfe4ff" fill-opacity="0.52"/><rect x="1008" y="542" width="1" height="1" fill="#cfe4ff" fill-opacity="0.54"/><rect x="614" y="412" width="1" height="1" fill="#cfe4ff" fill-opacity="0.62"/><rect x="166" y="783" width="1" height="1" fill="#cfe4ff" fill-opacity="0.27"/><rect x="746" y="526" width="1" height="1" fill="#cfe4ff" fill-opacity="0.31"/><rect x="95" y="899" width="1" height="1" fill="#cfe4ff" fill-opacity="0.29"/><rect x="299" y="602" width="1" height="1" fill="#cfe4ff" fill-opacity="0.55"/><rect x="474" y="709" width="1" height="1" fill="#cfe4ff" fill-opacity="0.46"/><rect x="434" y="695" width="1" height="1" fill="#cfe4ff" fill-opacity="0.64"/><rect x="1272" y="476" width="1" height="1" fill="#cfe4ff" fill-opacity="0.28"/><rect x="1269" y="827" width="1" height="1" fill="#cfe4ff" fill-opacity="0.34"/><rect x="1220" y="804" width="1" height="1" fill="#cfe4ff" fill-opacity="0.58"/><rect x="1129" y="845" width="1" height="1" fill="#cfe4ff" fill-opacity="0.37"/><rect x="444" y="828" width="1" height="1" fill="#cfe4ff" fill-opacity="0.61"/><rect x="937" y="305" width="1" height="1" fill="#cfe4ff" fill-opacity="0.43"/><rect x="307" y="514" width="1" height="1" fill="#cfe4ff" fill-opacity="0.49"/><rect x="1194" y="893" width="1" height="1" fill="#cfe4ff" fill-opacity="0.28"/><rect x="1043" y="768" width="1" height="1" fill="#cfe4ff" fill-opacity="0.65"/><rect x="1056" y="308" width="1" height="1" fill="#cfe4ff" fill-opacity="0.60"/><rect x="877" y="422" width="1" height="1" fill="#cfe4ff" fill-opacity="0.58"/><rect x="840" y="621" width="1" height="1" fill="#cfe4ff" fill-opacity="0.38"/><rect x="440" y="802" width="1" height="1" fill="#cfe4ff" fill-opacity="0.68"/><rect x="949" y="550" width="1" height="1" fill="#cfe4ff" fill-opacity="0.58"/><rect x="760" y="848" width="1" height="1" fill="#cfe4ff" fill-opacity="0.56"/><rect x="648" y="463" width="1" height="1" fill="#cfe4ff" fill-opacity="0.60"/><rect x="598" y="684" width="1" height="1" fill="#cfe4ff" fill-opacity="0.49"/><rect x="224" y="627" width="1" height="1" fill="#cfe4ff" fill-opacity="0.56"/><rect x="970" y="725" width="1" height="1" fill="#cfe4ff" fill-opacity="0.45"/><rect x="741" y="774" width="1" height="1" fill="#cfe4ff" fill-opacity="0.59"/><rect x="848" y="700" width="1" height="1" fill="#cfe4ff" fill-opacity="0.66"/><rect x="737" y="480" width="1" height="1" fill="#cfe4ff" fill-opacity="0.65"/><rect x="286" y="307" width="1" height="1" fill="#cfe4ff" fill-opacity="0.28"/><rect x="648" y="648" width="1" height="1" fill="#cfe4ff" fill-opacity="0.66"/><rect x="975" y="804" width="1" height="1" fill="#cfe4ff" fill-opacity="0.31"/><rect x="841" y="530" width="1" height="1" fill="#cfe4ff" fill-opacity="0.36"/><rect x="14" y="635" width="1" height="1" fill="#cfe4ff" fill-opacity="0.37"/><rect x="428" y="600" width="1" height="1" fill="#cfe4ff" fill-opacity="0.65"/><rect x="511" y="714" width="1" height="1" fill="#cfe4ff" fill-opacity="0.32"/><rect x="41" y="861" width="1" height="1" fill="#cfe4ff" fill-opacity="0.35"/><rect x="166" y="590" width="1" height="1" fill="#cfe4ff" fill-opacity="0.64"/><rect x="296" y="379" width="1" height="1" fill="#cfe4ff" fill-opacity="0.60"/><rect x="466" y="461" width="1" height="1" fill="#cfe4ff" fill-opacity="0.33"/><rect x="494" y="375" width="1" height="1" fill="#cfe4ff" fill-opacity="0.27"/><rect x="1129" y="383" width="1" height="1" fill="#cfe4ff" fill-opacity="0.35"/><rect x="356" y="338" width="1" height="1" fill="#cfe4ff" fill-opacity="0.66"/><rect x="179" y="592" width="1" height="1" fill="#cfe4ff" fill-opacity="0.32"/><rect x="137" y="463" width="1" height="1" fill="#cfe4ff" fill-opacity="0.55"/><rect x="177" y="690" width="1" height="1" fill="#cfe4ff" fill-opacity="0.53"/><rect x="618" y="400" width="1" height="1" fill="#cfe4ff" fill-opacity="0.63"/><rect x="3" y="857" width="1" height="1" fill="#cfe4ff" fill-opacity="0.38"/><rect x="689" y="343" width="1" height="1" fill="#cfe4ff" fill-opacity="0.27"/><rect x="1126" y="429" width="1" height="1" fill="#cfe4ff" fill-opacity="0.48"/><rect x="407" y="685" width="1" height="1" fill="#cfe4ff" fill-opacity="0.38"/><rect x="433" y="417" width="1" height="1" fill="#cfe4ff" fill-opacity="0.32"/><rect x="79" y="777" width="1" height="1" fill="#cfe4ff" fill-opacity="0.58"/><rect x="324" y="851" width="1" height="1" fill="#cfe4ff" fill-opacity="0.57"/><rect x="49" y="502" width="1" height="1" fill="#cfe4ff" fill-opacity="0.36"/><rect x="971" y="670" width="1" height="1" fill="#cfe4ff" fill-opacity="0.56"/><rect x="19" y="467" width="1" height="1" fill="#cfe4ff" fill-opacity="0.63"/><rect x="1157" y="669" width="1" height="1" fill="#cfe4ff" fill-opacity="0.65"/><rect x="264" y="727" width="1" height="1" fill="#cfe4ff" fill-opacity="0.67"/><rect x="1056" y="768" width="1" height="1" fill="#cfe4ff" fill-opacity="0.60"/><rect x="1003" y="333" width="1" height="1" fill="#cfe4ff" fill-opacity="0.33"/><rect x="1016" y="723" width="1" height="1" fill="#cfe4ff" fill-opacity="0.34"/><rect x="807" y="330" width="1" height="1" fill="#cfe4ff" fill-opacity="0.35"/><rect x="638" y="520" width="1" height="1" fill="#cfe4ff" fill-opacity="0.65"/><rect x="934" y="529" width="1" height="1" fill="#cfe4ff" fill-opacity="0.63"/><rect x="257" y="387" width="1" height="1" fill="#cfe4ff" fill-opacity="0.48"/><rect x="201" y="696" width="1" height="1" fill="#cfe4ff" fill-opacity="0.45"/><rect x="1247" y="809" width="1" height="1" fill="#cfe4ff" fill-opacity="0.54"/><rect x="708" y="415" width="1" height="1" fill="#cfe4ff" fill-opacity="0.26"/><rect x="374" y="714" width="1" height="1" fill="#cfe4ff" fill-opacity="0.63"/><rect x="622" y="449" width="1" height="1" fill="#cfe4ff" fill-opacity="0.59"/><rect x="1166" y="896" width="1" height="1" fill="#cfe4ff" fill-opacity="0.59"/><rect x="274" y="448" width="1" height="1" fill="#cfe4ff" fill-opacity="0.51"/><rect x="1223" y="435" width="1" height="1" fill="#cfe4ff" fill-opacity="0.34"/><rect x="186" y="571" width="1" height="1" fill="#cfe4ff" fill-opacity="0.57"/><rect x="1226" y="560" width="1" height="1" fill="#cfe4ff" fill-opacity="0.67"/><rect x="623" y="710" width="1" height="1" fill="#cfe4ff" fill-opacity="0.66"/><rect x="182" y="605" width="1" height="1" fill="#cfe4ff" fill-opacity="0.60"/><rect x="27" y="624" width="1" height="1" fill="#cfe4ff" fill-opacity="0.49"/><rect x="151" y="588" width="1" height="1" fill="#cfe4ff" fill-opacity="0.44"/><rect x="169" y="378" width="1" height="1" fill="#cfe4ff" fill-opacity="0.65"/><rect x="1212" y="419" width="1" height="1" fill="#cfe4ff" fill-opacity="0.54"/><rect x="1116" y="650" width="1" height="1" fill="#cfe4ff" fill-opacity="0.49"/><rect x="297" y="481" width="1" height="1" fill="#cfe4ff" fill-opacity="0.35"/><rect x="857" y="446" width="1" height="1" fill="#cfe4ff" fill-opacity="0.57"/><rect x="1143" y="485" width="1" height="1" fill="#cfe4ff" fill-opacity="0.68"/><rect x="874" y="300" width="1" height="1" fill="#cfe4ff" fill-opacity="0.29"/><rect x="124" y="323" width="1" height="1" fill="#cfe4ff" fill-opacity="0.30"/><rect x="382" y="417" width="1" height="1" fill="#cfe4ff" fill-opacity="0.70"/><rect x="1176" y="838" width="1" height="1" fill="#cfe4ff" fill-opacity="0.40"/><rect x="490" y="331" width="1" height="1" fill="#cfe4ff" fill-opacity="0.48"/><rect x="392" y="498" width="1" height="1" fill="#cfe4ff" fill-opacity="0.43"/><rect x="188" y="893" width="1" height="1" fill="#cfe4ff" fill-opacity="0.47"/><rect x="762" y="349" width="1" height="1" fill="#cfe4ff" fill-opacity="0.52"/><rect x="160" y="376" width="1" height="1" fill="#cfe4ff" fill-opacity="0.52"/><rect x="1129" y="327" width="1" height="1" fill="#cfe4ff" fill-opacity="0.60"/><rect x="229" y="546" width="1" height="1" fill="#cfe4ff" fill-opacity="0.49"/><rect x="733" y="558" width="1" height="1" fill="#cfe4ff" fill-opacity="0.57"/><rect x="1237" y="779" width="1" height="1" fill="#cfe4ff" fill-opacity="0.37"/><rect x="894" y="606" width="1" height="1" fill="#cfe4ff" fill-opacity="0.49"/><rect x="775" y="357" width="1" height="1" fill="#cfe4ff" fill-opacity="0.50"/><rect x="184" y="730" width="1" height="1" fill="#cfe4ff" fill-opacity="0.31"/><rect x="216" y="708" width="1" height="1" fill="#cfe4ff" fill-opacity="0.62"/><rect x="1178" y="586" width="1" height="1" fill="#cfe4ff" fill-opacity="0.62"/><rect x="23" y="690" width="1" height="1" fill="#cfe4ff" fill-opacity="0.28"/><rect x="408" y="549" width="1" height="1" fill="#cfe4ff" fill-opacity="0.53"/><rect x="32" y="880" width="1" height="1" fill="#cfe4ff" fill-opacity="0.34"/><rect x="358" y="616" width="1" height="1" fill="#cfe4ff" fill-opacity="0.41"/><rect x="243" y="321" width="1" height="1" fill="#cfe4ff" fill-opacity="0.65"/><rect x="187" y="401" width="1" height="1" fill="#cfe4ff" fill-opacity="0.68"/><rect x="1258" y="368" width="1" height="1" fill="#cfe4ff" fill-opacity="0.67"/><rect x="917" y="329" width="1" height="1" fill="#cfe4ff" fill-opacity="0.27"/><rect x="669" y="627" width="1" height="1" fill="#cfe4ff" fill-opacity="0.32"/><rect x="170" y="312" width="1" height="1" fill="#cfe4ff" fill-opacity="0.49"/><rect x="1241" y="836" width="1" height="1" fill="#cfe4ff" fill-opacity="0.56"/><rect x="366" y="881" width="1" height="1" fill="#cfe4ff" fill-opacity="0.41"/><rect x="443" y="559" width="1" height="1" fill="#cfe4ff" fill-opacity="0.33"/><rect x="683" y="750" width="1" height="1" fill="#cfe4ff" fill-opacity="0.68"/><rect x="957" y="427" width="1" height="1" fill="#cfe4ff" fill-opacity="0.36"/><rect x="1167" y="586" width="1" height="1" fill="#cfe4ff" fill-opacity="0.60"/><rect x="978" y="670" width="1" height="1" fill="#cfe4ff" fill-opacity="0.50"/><rect x="990" y="876" width="1" height="1" fill="#cfe4ff" fill-opacity="0.57"/><rect x="918" y="804" width="1" height="1" fill="#cfe4ff" fill-opacity="0.36"/><rect x="1155" y="619" width="1" height="1" fill="#cfe4ff" fill-opacity="0.34"/><rect x="87" y="710" width="1" height="1" fill="#cfe4ff" fill-opacity="0.54"/><rect x="694" y="568" width="1" height="1" fill="#cfe4ff" fill-opacity="0.44"/><rect x="1110" y="451" width="1" height="1" fill="#cfe4ff" fill-opacity="0.69"/><rect x="1079" y="665" width="1" height="1" fill="#cfe4ff" fill-opacity="0.44"/><rect x="1082" y="449" width="1" height="1" fill="#cfe4ff" fill-opacity="0.49"/><rect x="1154" y="667" width="1" height="1" fill="#cfe4ff" fill-opacity="0.34"/><rect x="994" y="642" width="1" height="1" fill="#cfe4ff" fill-opacity="0.59"/><rect x="846" y="647" width="1" height="1" fill="#cfe4ff" fill-opacity="0.56"/><rect x="1124" y="517" width="1" height="1" fill="#cfe4ff" fill-opacity="0.31"/><rect x="940" y="363" width="1" height="1" fill="#cfe4ff" fill-opacity="0.29"/><rect x="778" y="438" width="1" height="1" fill="#cfe4ff" fill-opacity="0.63"/><rect x="741" y="361" width="1" height="1" fill="#cfe4ff" fill-opacity="0.62"/><rect x="527" y="533" width="1" height="1" fill="#cfe4ff" fill-opacity="0.52"/><rect x="480" y="632" width="1" height="1" fill="#cfe4ff" fill-opacity="0.67"/><rect x="27" y="858" width="1" height="1" fill="#cfe4ff" fill-opacity="0.57"/><rect x="1192" y="407" width="1" height="1" fill="#cfe4ff" fill-opacity="0.47"/><rect x="862" y="640" width="1" height="1" fill="#cfe4ff" fill-opacity="0.26"/><rect x="720" y="716" width="1" height="1" fill="#cfe4ff" fill-opacity="0.49"/><rect x="687" y="497" width="1" height="1" fill="#cfe4ff" fill-opacity="0.70"/><rect x="696" y="485" width="1" height="1" fill="#cfe4ff" fill-opacity="0.61"/><rect x="656" y="803" width="1" height="1" fill="#cfe4ff" fill-opacity="0.41"/><rect x="240" y="728" width="1" height="1" fill="#cfe4ff" fill-opacity="0.35"/><rect x="26" y="803" width="1" height="1" fill="#cfe4ff" fill-opacity="0.30"/><rect x="1224" y="715" width="1" height="1" fill="#cfe4ff" fill-opacity="0.50"/><rect x="147" y="407" width="1" height="1" fill="#cfe4ff" fill-opacity="0.56"/><rect x="731" y="831" width="1" height="1" fill="#cfe4ff" fill-opacity="0.52"/><rect x="1259" y="343" width="1" height="1" fill="#cfe4ff" fill-opacity="0.45"/><rect x="559" y="788" width="1" height="1" fill="#cfe4ff" fill-opacity="0.42"/><rect x="361" y="441" width="1" height="1" fill="#cfe4ff" fill-opacity="0.61"/><rect x="647" y="644" width="1" height="1" fill="#cfe4ff" fill-opacity="0.52"/><rect x="673" y="319" width="1" height="1" fill="#cfe4ff" fill-opacity="0.69"/><rect x="180" y="617" width="1" height="1" fill="#cfe4ff" fill-opacity="0.56"/><rect x="668" y="404" width="1" height="1" fill="#cfe4ff" fill-opacity="0.34"/><rect x="1171" y="552" width="1" height="1" fill="#cfe4ff" fill-opacity="0.61"/><rect x="103" y="794" width="1" height="1" fill="#cfe4ff" fill-opacity="0.44"/><rect x="371" y="424" width="1" height="1" fill="#cfe4ff" fill-opacity="0.45"/><rect x="859" y="888" width="1" height="1" fill="#cfe4ff" fill-opacity="0.51"/><rect x="192" y="592" width="1" height="1" fill="#cfe4ff" fill-opacity="0.31"/><rect x="967" y="325" width="1" height="1" fill="#cfe4ff" fill-opacity="0.68"/><rect x="917" y="511" width="1" height="1" fill="#cfe4ff" fill-opacity="0.56"/><rect x="391" y="610" width="1" height="1" fill="#cfe4ff" fill-opacity="0.53"/><rect x="1218" y="830" width="1" height="1" fill="#cfe4ff" fill-opacity="0.63"/><rect x="405" y="842" width="1" height="1" fill="#cfe4ff" fill-opacity="0.27"/><rect x="9" y="351" width="1" height="1" fill="#cfe4ff" fill-opacity="0.65"/><rect x="217" y="442" width="1" height="1" fill="#cfe4ff" fill-opacity="0.53"/><rect x="363" y="741" width="1" height="1" fill="#cfe4ff" fill-opacity="0.26"/><rect x="123" y="558" width="1" height="1" fill="#cfe4ff" fill-opacity="0.68"/><rect x="1187" y="805" width="1" height="1" fill="#cfe4ff" fill-opacity="0.69"/><rect x="692" y="653" width="1" height="1" fill="#cfe4ff" fill-opacity="0.30"/><rect x="699" y="365" width="1" height="1" fill="#cfe4ff" fill-opacity="0.49"/><rect x="123" y="824" width="1" height="1" fill="#cfe4ff" fill-opacity="0.52"/><rect x="123" y="666" width="1" height="1" fill="#cfe4ff" fill-opacity="0.35"/><rect x="161" y="879" width="1" height="1" fill="#cfe4ff" fill-opacity="0.58"/><rect x="924" y="780" width="1" height="1" fill="#cfe4ff" fill-opacity="0.31"/><rect x="1144" y="415" width="1" height="1" fill="#cfe4ff" fill-opacity="0.37"/><rect x="537" y="648" width="1" height="1" fill="#cfe4ff" fill-opacity="0.64"/><rect x="1266" y="862" width="1" height="1" fill="#cfe4ff" fill-opacity="0.45"/><rect x="924" y="742" width="1" height="1" fill="#cfe4ff" fill-opacity="0.35"/><rect x="688" y="363" width="1" height="1" fill="#cfe4ff" fill-opacity="0.65"/><rect x="610" y="520" width="1" height="1" fill="#cfe4ff" fill-opacity="0.34"/><rect x="356" y="582" width="1" height="1" fill="#cfe4ff" fill-opacity="0.60"/><rect x="675" y="771" width="1" height="1" fill="#cfe4ff" fill-opacity="0.70"/><rect x="657" y="443" width="1" height="1" fill="#cfe4ff" fill-opacity="0.47"/><rect x="266" y="744" width="1" height="1" fill="#cfe4ff" fill-opacity="0.69"/><rect x="773" y="841" width="1" height="1" fill="#cfe4ff" fill-opacity="0.32"/><rect x="1064" y="601" width="1" height="1" fill="#cfe4ff" fill-opacity="0.30"/><rect x="1143" y="395" width="1" height="1" fill="#cfe4ff" fill-opacity="0.43"/><rect x="917" y="317" width="1" height="1" fill="#cfe4ff" fill-opacity="0.31"/><rect x="37" y="555" width="1" height="1" fill="#cfe4ff" fill-opacity="0.50"/><rect x="1071" y="473" width="1" height="1" fill="#cfe4ff" fill-opacity="0.35"/><rect x="1076" y="785" width="1" height="1" fill="#cfe4ff" fill-opacity="0.25"/><rect x="74" y="797" width="1" height="1" fill="#cfe4ff" fill-opacity="0.68"/><rect x="142" y="709" width="1" height="1" fill="#cfe4ff" fill-opacity="0.55"/><rect x="1040" y="642" width="1" height="1" fill="#cfe4ff" fill-opacity="0.49"/><rect x="293" y="743" width="1" height="1" fill="#cfe4ff" fill-opacity="0.30"/><rect x="242" y="627" width="1" height="1" fill="#cfe4ff" fill-opacity="0.37"/><rect x="850" y="700" width="1" height="1" fill="#cfe4ff" fill-opacity="0.27"/><rect x="454" y="359" width="1" height="1" fill="#cfe4ff" fill-opacity="0.39"/><rect x="1163" y="333" width="1" height="1" fill="#cfe4ff" fill-opacity="0.57"/><rect x="700" y="885" width="1" height="1" fill="#cfe4ff" fill-opacity="0.52"/><rect x="650" y="690" width="1" height="1" fill="#cfe4ff" fill-opacity="0.39"/><rect x="30" y="678" width="1" height="1" fill="#cfe4ff" fill-opacity="0.32"/><rect x="991" y="690" width="1" height="1" fill="#cfe4ff" fill-opacity="0.63"/><rect x="552" y="592" width="1" height="1" fill="#cfe4ff" fill-opacity="0.43"/><rect x="1263" y="782" width="1" height="1" fill="#cfe4ff" fill-opacity="0.32"/><rect x="471" y="815" width="1" height="1" fill="#cfe4ff" fill-opacity="0.29"/><rect x="310" y="722" width="1" height="1" fill="#cfe4ff" fill-opacity="0.67"/><rect x="546" y="694" width="1" height="1" fill="#cfe4ff" fill-opacity="0.54"/><rect x="185" y="598" width="1" height="1" fill="#cfe4ff" fill-opacity="0.69"/><rect x="1202" y="770" width="1" height="1" fill="#cfe4ff" fill-opacity="0.39"/><rect x="141" y="552" width="1" height="1" fill="#cfe4ff" fill-opacity="0.56"/><rect x="303" y="478" width="1" height="1" fill="#cfe4ff" fill-opacity="0.35"/><rect x="278" y="577" width="1" height="1" fill="#cfe4ff" fill-opacity="0.66"/><rect x="660" y="626" width="1" height="1" fill="#cfe4ff" fill-opacity="0.48"/><rect x="566" y="385" width="1" height="1" fill="#cfe4ff" fill-opacity="0.44"/><rect x="990" y="850" width="1" height="1" fill="#cfe4ff" fill-opacity="0.59"/><rect x="789" y="660" width="1" height="1" fill="#cfe4ff" fill-opacity="0.54"/><rect x="42" y="535" width="1" height="1" fill="#cfe4ff" fill-opacity="0.47"/><rect x="1257" y="305" width="1" height="1" fill="#cfe4ff" fill-opacity="0.47"/><rect x="336" y="756" width="1" height="1" fill="#cfe4ff" fill-opacity="0.51"/><rect x="1019" y="681" width="1" height="1" fill="#cfe4ff" fill-opacity="0.30"/><rect x="947" y="518" width="1" height="1" fill="#cfe4ff" fill-opacity="0.53"/><rect x="111" y="600" width="1" height="1" fill="#cfe4ff" fill-opacity="0.37"/><rect x="1270" y="589" width="1" height="1" fill="#cfe4ff" fill-opacity="0.46"/><rect x="144" y="891" width="1" height="1" fill="#cfe4ff" fill-opacity="0.27"/><rect x="1206" y="461" width="1" height="1" fill="#cfe4ff" fill-opacity="0.69"/><rect x="264" y="674" width="1" height="1" fill="#cfe4ff" fill-opacity="0.35"/><rect x="350" y="815" width="1" height="1" fill="#cfe4ff" fill-opacity="0.45"/><rect x="581" y="898" width="1" height="1" fill="#cfe4ff" fill-opacity="0.55"/><rect x="146" y="326" width="1" height="1" fill="#cfe4ff" fill-opacity="0.26"/><rect x="892" y="617" width="1" height="1" fill="#cfe4ff" fill-opacity="0.47"/><rect x="290" y="742" width="1" height="1" fill="#cfe4ff" fill-opacity="0.35"/><rect x="948" y="372" width="1" height="1" fill="#cfe4ff" fill-opacity="0.44"/><rect x="270" y="783" width="1" height="1" fill="#cfe4ff" fill-opacity="0.52"/><rect x="42" y="588" width="1" height="1" fill="#cfe4ff" fill-opacity="0.31"/><rect x="340" y="455" width="1" height="1" fill="#cfe4ff" fill-opacity="0.66"/><rect x="85" y="368" width="1" height="1" fill="#cfe4ff" fill-opacity="0.58"/><rect x="604" y="323" width="1" height="1" fill="#cfe4ff" fill-opacity="0.30"/><rect x="614" y="629" width="1" height="1" fill="#cfe4ff" fill-opacity="0.39"/><rect x="598" y="395" width="1" height="1" fill="#cfe4ff" fill-opacity="0.70"/><rect x="1270" y="602" width="1" height="1" fill="#cfe4ff" fill-opacity="0.41"/><rect x="673" y="527" width="1" height="1" fill="#cfe4ff" fill-opacity="0.62"/><rect x="804" y="673" width="1" height="1" fill="#cfe4ff" fill-opacity="0.61"/><rect x="407" y="737" width="1" height="1" fill="#cfe4ff" fill-opacity="0.52"/><rect x="963" y="618" width="1" height="1" fill="#cfe4ff" fill-opacity="0.61"/><rect x="308" y="780" width="1" height="1" fill="#cfe4ff" fill-opacity="0.35"/><rect x="194" y="710" width="1" height="1" fill="#cfe4ff" fill-opacity="0.37"/><rect x="737" y="682" width="1" height="1" fill="#cfe4ff" fill-opacity="0.57"/><rect x="289" y="844" width="1" height="1" fill="#cfe4ff" fill-opacity="0.68"/><rect x="369" y="307" width="1" height="1" fill="#cfe4ff" fill-opacity="0.40"/><rect x="635" y="663" width="1" height="1" fill="#cfe4ff" fill-opacity="0.60"/><rect x="318" y="338" width="1" height="1" fill="#cfe4ff" fill-opacity="0.39"/><rect x="593" y="316" width="1" height="1" fill="#cfe4ff" fill-opacity="0.57"/><rect x="17" y="647" width="1" height="1" fill="#cfe4ff" fill-opacity="0.47"/><rect x="187" y="459" width="1" height="1" fill="#cfe4ff" fill-opacity="0.62"/><rect x="978" y="875" width="1" height="1" fill="#cfe4ff" fill-opacity="0.32"/><rect x="869" y="806" width="1" height="1" fill="#cfe4ff" fill-opacity="0.39"/><rect x="1166" y="796" width="1" height="1" fill="#cfe4ff" fill-opacity="0.56"/><rect x="980" y="642" width="1" height="1" fill="#cfe4ff" fill-opacity="0.51"/><rect x="430" y="684" width="1" height="1" fill="#cfe4ff" fill-opacity="0.56"/><rect x="772" y="305" width="1" height="1" fill="#cfe4ff" fill-opacity="0.65"/><rect x="219" y="690" width="1" height="1" fill="#cfe4ff" fill-opacity="0.68"/><rect x="887" y="884" width="1" height="1" fill="#cfe4ff" fill-opacity="0.27"/><rect x="1116" y="590" width="1" height="1" fill="#cfe4ff" fill-opacity="0.67"/><rect x="131" y="885" width="1" height="1" fill="#cfe4ff" fill-opacity="0.35"/><rect x="740" y="714" width="1" height="1" fill="#cfe4ff" fill-opacity="0.57"/><rect x="918" y="731" width="1" height="1" fill="#cfe4ff" fill-opacity="0.53"/><rect x="398" y="857" width="1" height="1" fill="#cfe4ff" fill-opacity="0.64"/><rect x="445" y="811" width="1" height="1" fill="#cfe4ff" fill-opacity="0.46"/><rect x="745" y="801" width="1" height="1" fill="#cfe4ff" fill-opacity="0.61"/><rect x="878" y="798" width="1" height="1" fill="#cfe4ff" fill-opacity="0.53"/><rect x="363" y="544" width="1" height="1" fill="#cfe4ff" fill-opacity="0.60"/><rect x="780" y="876" width="1" height="1" fill="#cfe4ff" fill-opacity="0.54"/><rect x="669" y="607" width="1" height="1" fill="#cfe4ff" fill-opacity="0.52"/><rect x="399" y="678" width="1" height="1" fill="#cfe4ff" fill-opacity="0.63"/><rect x="1010" y="899" width="1" height="1" fill="#cfe4ff" fill-opacity="0.54"/><rect x="214" y="586" width="1" height="1" fill="#cfe4ff" fill-opacity="0.35"/><rect x="635" y="321" width="1" height="1" fill="#cfe4ff" fill-opacity="0.49"/><rect x="457" y="695" width="1" height="1" fill="#cfe4ff" fill-opacity="0.47"/><rect x="798" y="699" width="1" height="1" fill="#cfe4ff" fill-opacity="0.45"/><rect x="501" y="671" width="1" height="1" fill="#cfe4ff" fill-opacity="0.61"/><rect x="591" y="675" width="1" height="1" fill="#cfe4ff" fill-opacity="0.66"/><rect x="314" y="721" width="1" height="1" fill="#cfe4ff" fill-opacity="0.34"/><rect x="124" y="487" width="1" height="1" fill="#cfe4ff" fill-opacity="0.70"/><rect x="1145" y="820" width="1" height="1" fill="#cfe4ff" fill-opacity="0.54"/><rect x="613" y="438" width="1" height="1" fill="#cfe4ff" fill-opacity="0.64"/><rect x="782" y="811" width="1" height="1" fill="#cfe4ff" fill-opacity="0.60"/><rect x="513" y="427" width="1" height="1" fill="#cfe4ff" fill-opacity="0.63"/><rect x="1025" y="757" width="1" height="1" fill="#cfe4ff" fill-opacity="0.58"/><rect x="379" y="303" width="1" height="1" fill="#cfe4ff" fill-opacity="0.59"/><rect x="1178" y="587" width="1" height="1" fill="#cfe4ff" fill-opacity="0.33"/><rect x="1109" y="353" width="1" height="1" fill="#cfe4ff" fill-opacity="0.40"/><rect x="537" y="669" width="1" height="1" fill="#cfe4ff" fill-opacity="0.67"/><rect x="389" y="684" width="1" height="1" fill="#cfe4ff" fill-opacity="0.34"/><rect x="1199" y="378" width="1" height="1" fill="#cfe4ff" fill-opacity="0.50"/><rect x="1187" y="724" width="1" height="1" fill="#cfe4ff" fill-opacity="0.56"/><rect x="1123" y="733" width="1" height="1" fill="#cfe4ff" fill-opacity="0.25"/><rect x="859" y="887" width="1" height="1" fill="#cfe4ff" fill-opacity="0.43"/><rect x="485" y="718" width="1" height="1" fill="#cfe4ff" fill-opacity="0.52"/><rect x="19" y="463" width="1" height="1" fill="#cfe4ff" fill-opacity="0.44"/><rect x="1175" y="434" width="1" height="1" fill="#cfe4ff" fill-opacity="0.47"/><rect x="438" y="618" width="1" height="1" fill="#cfe4ff" fill-opacity="0.34"/><rect x="218" y="338" width="1" height="1" fill="#cfe4ff" fill-opacity="0.61"/><rect x="620" y="574" width="1" height="1" fill="#cfe4ff" fill-opacity="0.39"/><rect x="352" y="763" width="1" height="1" fill="#cfe4ff" fill-opacity="0.38"/><rect x="763" y="377" width="1" height="1" fill="#cfe4ff" fill-opacity="0.54"/><rect x="724" y="847" width="1" height="1" fill="#cfe4ff" fill-opacity="0.32"/><rect x="89" y="734" width="1" height="1" fill="#cfe4ff" fill-opacity="0.51"/><rect x="214" y="437" width="1" height="1" fill="#cfe4ff" fill-opacity="0.63"/><rect x="655" y="643" width="1" height="1" fill="#cfe4ff" fill-opacity="0.28"/><rect x="319" y="400" width="1" height="1" fill="#cfe4ff" fill-opacity="0.32"/><rect x="838" y="357" width="1" height="1" fill="#cfe4ff" fill-opacity="0.67"/><rect x="720" y="335" width="1" height="1" fill="#cfe4ff" fill-opacity="0.66"/><rect x="928" y="898" width="1" height="1" fill="#cfe4ff" fill-opacity="0.39"/><rect x="1034" y="808" width="1" height="1" fill="#cfe4ff" fill-opacity="0.70"/><rect x="616" y="715" width="1" height="1" fill="#cfe4ff" fill-opacity="0.50"/><rect x="1095" y="653" width="1" height="1" fill="#cfe4ff" fill-opacity="0.41"/><rect x="887" y="711" width="1" height="1" fill="#cfe4ff" fill-opacity="0.66"/><rect x="169" y="663" width="1" height="1" fill="#cfe4ff" fill-opacity="0.66"/><rect x="384" y="788" width="1" height="1" fill="#cfe4ff" fill-opacity="0.35"/><rect x="224" y="892" width="1" height="1" fill="#cfe4ff" fill-opacity="0.52"/><rect x="498" y="418" width="1" height="1" fill="#cfe4ff" fill-opacity="0.53"/><rect x="384" y="545" width="1" height="1" fill="#cfe4ff" fill-opacity="0.54"/><rect x="453" y="794" width="1" height="1" fill="#cfe4ff" fill-opacity="0.35"/><rect x="620" y="636" width="1" height="1" fill="#cfe4ff" fill-opacity="0.68"/><rect x="572" y="703" width="1" height="1" fill="#cfe4ff" fill-opacity="0.67"/><rect x="412" y="771" width="1" height="1" fill="#cfe4ff" fill-opacity="0.53"/><rect x="1003" y="393" width="1" height="1" fill="#cfe4ff" fill-opacity="0.60"/><rect x="1080" y="500" width="1" height="1" fill="#cfe4ff" fill-opacity="0.59"/><rect x="617" y="836" width="1" height="1" fill="#cfe4ff" fill-opacity="0.47"/><rect x="106" y="493" width="1" height="1" fill="#cfe4ff" fill-opacity="0.56"/><rect x="1052" y="707" width="1" height="1" fill="#cfe4ff" fill-opacity="0.61"/><rect x="1021" y="569" width="1" height="1" fill="#cfe4ff" fill-opacity="0.47"/><rect x="582" y="350" width="1" height="1" fill="#cfe4ff" fill-opacity="0.69"/><rect x="511" y="805" width="1" height="1" fill="#cfe4ff" fill-opacity="0.64"/><rect x="158" y="867" width="1" height="1" fill="#cfe4ff" fill-opacity="0.65"/><rect x="149" y="420" width="1" height="1" fill="#cfe4ff" fill-opacity="0.52"/><rect x="962" y="767" width="1" height="1" fill="#cfe4ff" fill-opacity="0.44"/><rect x="208" y="629" width="1" height="1" fill="#cfe4ff" fill-opacity="0.34"/><rect x="1201" y="390" width="1" height="1" fill="#cfe4ff" fill-opacity="0.45"/><rect x="208" y="558" width="1" height="1" fill="#cfe4ff" fill-opacity="0.45"/><rect x="106" y="856" width="1" height="1" fill="#cfe4ff" fill-opacity="0.55"/><rect x="32" y="535" width="1" height="1" fill="#cfe4ff" fill-opacity="0.62"/><rect x="917" y="462" width="1" height="1" fill="#cfe4ff" fill-opacity="0.29"/><rect x="254" y="869" width="1" height="1" fill="#cfe4ff" fill-opacity="0.52"/><rect x="236" y="519" width="1" height="1" fill="#cfe4ff" fill-opacity="0.53"/><rect x="1212" y="357" width="1" height="1" fill="#cfe4ff" fill-opacity="0.28"/><rect x="335" y="691" width="1" height="1" fill="#cfe4ff" fill-opacity="0.35"/><rect x="57" y="402" width="1" height="1" fill="#cfe4ff" fill-opacity="0.31"/><rect x="357" y="853" width="1" height="1" fill="#cfe4ff" fill-opacity="0.39"/><rect x="697" y="775" width="1" height="1" fill="#cfe4ff" fill-opacity="0.48"/><rect x="1081" y="559" width="1" height="1" fill="#cfe4ff" fill-opacity="0.41"/><rect x="116" y="304" width="1" height="1" fill="#cfe4ff" fill-opacity="0.32"/><rect x="820" y="470" width="1" height="1" fill="#cfe4ff" fill-opacity="0.70"/><rect x="335" y="418" width="1" height="1" fill="#cfe4ff" fill-opacity="0.58"/><rect x="662" y="373" width="1" height="1" fill="#cfe4ff" fill-opacity="0.67"/><rect x="172" y="443" width="1" height="1" fill="#cfe4ff" fill-opacity="0.54"/><rect x="989" y="450" width="1" height="1" fill="#cfe4ff" fill-opacity="0.52"/><rect x="1133" y="418" width="1" height="1" fill="#cfe4ff" fill-opacity="0.65"/><rect x="893" y="333" width="1" height="1" fill="#cfe4ff" fill-opacity="0.48"/><rect x="271" y="688" width="1" height="1" fill="#cfe4ff" fill-opacity="0.27"/><rect x="203" y="332" width="1" height="1" fill="#cfe4ff" fill-opacity="0.36"/><rect x="1052" y="443" width="1" height="1" fill="#cfe4ff" fill-opacity="0.67"/><rect x="346" y="616" width="1" height="1" fill="#cfe4ff" fill-opacity="0.34"/><rect x="470" y="386" width="1" height="1" fill="#cfe4ff" fill-opacity="0.45"/><rect x="215" y="674" width="1" height="1" fill="#cfe4ff" fill-opacity="0.38"/><rect x="293" y="730" width="1" height="1" fill="#cfe4ff" fill-opacity="0.66"/><rect x="1030" y="576" width="1" height="1" fill="#cfe4ff" fill-opacity="0.52"/><rect x="606" y="376" width="1" height="1" fill="#cfe4ff" fill-opacity="0.56"/><rect x="273" y="355" width="1" height="1" fill="#cfe4ff" fill-opacity="0.38"/><rect x="878" y="420" width="1" height="1" fill="#cfe4ff" fill-opacity="0.69"/><rect x="1142" y="589" width="1" height="1" fill="#cfe4ff" fill-opacity="0.67"/><rect x="770" y="868" width="1" height="1" fill="#cfe4ff" fill-opacity="0.56"/><rect x="917" y="323" width="1" height="1" fill="#cfe4ff" fill-opacity="0.63"/><rect x="813" y="479" width="1" height="1" fill="#cfe4ff" fill-opacity="0.34"/><rect x="194" y="707" width="1" height="1" fill="#cfe4ff" fill-opacity="0.28"/><rect x="1114" y="408" width="1" height="1" fill="#cfe4ff" fill-opacity="0.39"/><rect x="780" y="725" width="1" height="1" fill="#cfe4ff" fill-opacity="0.35"/><rect x="877" y="321" width="1" height="1" fill="#cfe4ff" fill-opacity="0.33"/><rect x="873" y="869" width="1" height="1" fill="#cfe4ff" fill-opacity="0.64"/><rect x="1235" y="632" width="1" height="1" fill="#cfe4ff" fill-opacity="0.27"/><rect x="614" y="339" width="1" height="1" fill="#cfe4ff" fill-opacity="0.54"/><rect x="316" y="584" width="1" height="1" fill="#cfe4ff" fill-opacity="0.31"/><rect x="193" y="622" width="1" height="1" fill="#cfe4ff" fill-opacity="0.33"/><rect x="187" y="613" width="1" height="1" fill="#cfe4ff" fill-opacity="0.65"/><rect x="1269" y="585" width="1" height="1" fill="#cfe4ff" fill-opacity="0.43"/><rect x="1217" y="815" width="1" height="1" fill="#cfe4ff" fill-opacity="0.46"/><rect x="110" y="611" width="1" height="1" fill="#cfe4ff" fill-opacity="0.61"/><rect x="979" y="882" width="1" height="1" fill="#cfe4ff" fill-opacity="0.66"/><rect x="611" y="507" width="1" height="1" fill="#cfe4ff" fill-opacity="0.59"/><rect x="1117" y="344" width="1" height="1" fill="#cfe4ff" fill-opacity="0.66"/><rect x="65" y="735" width="1" height="1" fill="#cfe4ff" fill-opacity="0.30"/><rect x="710" y="462" width="1" height="1" fill="#cfe4ff" fill-opacity="0.42"/><rect x="816" y="379" width="1" height="1" fill="#cfe4ff" fill-opacity="0.45"/><rect x="1097" y="418" width="1" height="1" fill="#cfe4ff" fill-opacity="0.69"/><rect x="1244" y="380" width="1" height="1" fill="#cfe4ff" fill-opacity="0.50"/><rect x="93" y="419" width="1" height="1" fill="#cfe4ff" fill-opacity="0.57"/><rect x="739" y="501" width="1" height="1" fill="#cfe4ff" fill-opacity="0.59"/><rect x="935" y="414" width="1" height="1" fill="#cfe4ff" fill-opacity="0.32"/><rect x="588" y="784" width="1" height="1" fill="#cfe4ff" fill-opacity="0.56"/><rect x="1097" y="735" width="1" height="1" fill="#cfe4ff" fill-opacity="0.56"/><rect x="171" y="818" width="1" height="1" fill="#cfe4ff" fill-opacity="0.42"/><rect x="264" y="674" width="1" height="1" fill="#cfe4ff" fill-opacity="0.28"/><rect x="934" y="444" width="1" height="1" fill="#cfe4ff" fill-opacity="0.50"/><rect x="1114" y="401" width="1" height="1" fill="#cfe4ff" fill-opacity="0.40"/><rect x="80" y="518" width="1" height="1" fill="#cfe4ff" fill-opacity="0.45"/><rect x="219" y="451" width="1" height="1" fill="#cfe4ff" fill-opacity="0.53"/><rect x="401" y="503" width="1" height="1" fill="#cfe4ff" fill-opacity="0.59"/><rect x="1062" y="862" width="1" height="1" fill="#cfe4ff" fill-opacity="0.43"/><rect x="379" y="788" width="1" height="1" fill="#cfe4ff" fill-opacity="0.43"/><rect x="1265" y="549" width="1" height="1" fill="#cfe4ff" fill-opacity="0.61"/><rect x="797" y="354" width="1" height="1" fill="#cfe4ff" fill-opacity="0.52"/><rect x="1075" y="825" width="1" height="1" fill="#cfe4ff" fill-opacity="0.66"/><rect x="5" y="408" width="1" height="1" fill="#cfe4ff" fill-opacity="0.53"/><rect x="931" y="598" width="1" height="1" fill="#cfe4ff" fill-opacity="0.43"/><rect x="1009" y="353" width="1" height="1" fill="#cfe4ff" fill-opacity="0.44"/><rect x="813" y="629" width="1" height="1" fill="#cfe4ff" fill-opacity="0.34"/><rect x="650" y="445" width="1" height="1" fill="#cfe4ff" fill-opacity="0.28"/><rect x="650" y="655" width="1" height="1" fill="#cfe4ff" fill-opacity="0.48"/><rect x="1072" y="818" width="1" height="1" fill="#cfe4ff" fill-opacity="0.34"/><rect x="658" y="881" width="1" height="1" fill="#cfe4ff" fill-opacity="0.61"/><rect x="1208" y="437" width="1" height="1" fill="#cfe4ff" fill-opacity="0.57"/><rect x="999" y="433" width="1" height="1" fill="#cfe4ff" fill-opacity="0.43"/><rect x="111" y="356" width="1" height="1" fill="#cfe4ff" fill-opacity="0.59"/><rect x="564" y="716" width="1" height="1" fill="#cfe4ff" fill-opacity="0.33"/><rect x="1039" y="610" width="1" height="1" fill="#cfe4ff" fill-opacity="0.30"/><rect x="687" y="374" width="1" height="1" fill="#cfe4ff" fill-opacity="0.42"/><rect x="693" y="640" width="1" height="1" fill="#cfe4ff" fill-opacity="0.56"/><rect x="370" y="772" width="1" height="1" fill="#cfe4ff" fill-opacity="0.61"/><rect x="524" y="478" width="1" height="1" fill="#cfe4ff" fill-opacity="0.32"/><rect x="1261" y="325" width="1" height="1" fill="#cfe4ff" fill-opacity="0.42"/><rect x="1201" y="772" width="1" height="1" fill="#cfe4ff" fill-opacity="0.30"/><rect x="196" y="736" width="1" height="1" fill="#cfe4ff" fill-opacity="0.39"/><rect x="1185" y="775" width="1" height="1" fill="#cfe4ff" fill-opacity="0.44"/><rect x="311" y="877" width="1" height="1" fill="#cfe4ff" fill-opacity="0.32"/><rect x="1235" y="351" width="1" height="1" fill="#cfe4ff" fill-opacity="0.36"/><rect x="307" y="572" width="1" height="1" fill="#cfe4ff" fill-opacity="0.58"/><rect x="642" y="896" width="1" height="1" fill="#cfe4ff" fill-opacity="0.29"/><rect x="758" y="565" width="1" height="1" fill="#cfe4ff" fill-opacity="0.46"/><rect x="1202" y="568" width="1" height="1" fill="#cfe4ff" fill-opacity="0.61"/><rect x="852" y="434" width="1" height="1" fill="#cfe4ff" fill-opacity="0.65"/><rect x="443" y="732" width="1" height="1" fill="#cfe4ff" fill-opacity="0.48"/><rect x="297" y="474" width="1" height="1" fill="#cfe4ff" fill-opacity="0.33"/><rect x="27" y="348" width="1" height="1" fill="#cfe4ff" fill-opacity="0.61"/><rect x="1270" y="797" width="1" height="1" fill="#cfe4ff" fill-opacity="0.43"/><rect x="1117" y="387" width="1" height="1" fill="#cfe4ff" fill-opacity="0.46"/><rect x="43" y="463" width="1" height="1" fill="#cfe4ff" fill-opacity="0.50"/><rect x="734" y="438" width="1" height="1" fill="#cfe4ff" fill-opacity="0.30"/><rect x="303" y="686" width="1" height="1" fill="#cfe4ff" fill-opacity="0.41"/><rect x="992" y="383" width="1" height="1" fill="#cfe4ff" fill-opacity="0.68"/><rect x="408" y="708" width="1" height="1" fill="#cfe4ff" fill-opacity="0.41"/><rect x="997" y="687" width="1" height="1" fill="#cfe4ff" fill-opacity="0.38"/><rect x="672" y="836" width="1" height="1" fill="#cfe4ff" fill-opacity="0.49"/><rect x="633" y="401" width="1" height="1" fill="#cfe4ff" fill-opacity="0.36"/><rect x="1222" y="411" width="1" height="1" fill="#cfe4ff" fill-opacity="0.52"/><rect x="833" y="690" width="1" height="1" fill="#cfe4ff" fill-opacity="0.53"/><rect x="910" y="753" width="1" height="1" fill="#cfe4ff" fill-opacity="0.29"/><rect x="1178" y="389" width="1" height="1" fill="#cfe4ff" fill-opacity="0.68"/><rect x="689" y="609" width="1" height="1" fill="#cfe4ff" fill-opacity="0.34"/><rect x="131" y="714" width="1" height="1" fill="#cfe4ff" fill-opacity="0.29"/><rect x="25" y="533" width="1" height="1" fill="#cfe4ff" fill-opacity="0.44"/><rect x="1228" y="355" width="1" height="1" fill="#cfe4ff" fill-opacity="0.32"/><rect x="1177" y="594" width="1" height="1" fill="#cfe4ff" fill-opacity="0.35"/><rect x="525" y="778" width="1" height="1" fill="#cfe4ff" fill-opacity="0.43"/><rect x="853" y="485" width="1" height="1" fill="#cfe4ff" fill-opacity="0.38"/><rect x="727" y="748" width="1" height="1" fill="#cfe4ff" fill-opacity="0.48"/><rect x="485" y="739" width="1" height="1" fill="#cfe4ff" fill-opacity="0.37"/><rect x="1033" y="487" width="1" height="1" fill="#cfe4ff" fill-opacity="0.28"/><rect x="714" y="883" width="1" height="1" fill="#cfe4ff" fill-opacity="0.27"/><rect x="793" y="780" width="1" height="1" fill="#cfe4ff" fill-opacity="0.50"/><rect x="746" y="422" width="1" height="1" fill="#cfe4ff" fill-opacity="0.33"/><rect x="319" y="367" width="1" height="1" fill="#cfe4ff" fill-opacity="0.37"/><rect x="479" y="397" width="1" height="1" fill="#cfe4ff" fill-opacity="0.61"/><rect x="1116" y="498" width="1" height="1" fill="#cfe4ff" fill-opacity="0.43"/><rect x="413" y="626" width="1" height="1" fill="#cfe4ff" fill-opacity="0.61"/><rect x="645" y="504" width="1" height="1" fill="#cfe4ff" fill-opacity="0.28"/><rect x="1226" y="657" width="1" height="1" fill="#cfe4ff" fill-opacity="0.43"/><rect x="663" y="878" width="1" height="1" fill="#cfe4ff" fill-opacity="0.56"/><rect x="1163" y="544" width="1" height="1" fill="#cfe4ff" fill-opacity="0.66"/><rect x="329" y="708" width="1" height="1" fill="#cfe4ff" fill-opacity="0.40"/><rect x="955" y="819" width="1" height="1" fill="#cfe4ff" fill-opacity="0.60"/><rect x="224" y="637" width="1" height="1" fill="#cfe4ff" fill-opacity="0.46"/><rect x="144" y="604" width="1" height="1" fill="#cfe4ff" fill-opacity="0.47"/><rect x="861" y="575" width="1" height="1" fill="#cfe4ff" fill-opacity="0.49"/><rect x="818" y="791" width="1" height="1" fill="#cfe4ff" fill-opacity="0.66"/><rect x="847" y="366" width="1" height="1" fill="#cfe4ff" fill-opacity="0.40"/><rect x="360" y="562" width="1" height="1" fill="#cfe4ff" fill-opacity="0.55"/><rect x="897" y="800" width="1" height="1" fill="#cfe4ff" fill-opacity="0.45"/><rect x="62" y="532" width="1" height="1" fill="#cfe4ff" fill-opacity="0.26"/><rect x="828" y="770" width="1" height="1" fill="#cfe4ff" fill-opacity="0.39"/><rect x="1093" y="817" width="1" height="1" fill="#cfe4ff" fill-opacity="0.69"/><rect x="5" y="613" width="1" height="1" fill="#cfe4ff" fill-opacity="0.43"/><rect x="1092" y="749" width="1" height="1" fill="#cfe4ff" fill-opacity="0.27"/><rect x="314" y="453" width="1" height="1" fill="#cfe4ff" fill-opacity="0.30"/><rect x="555" y="830" width="1" height="1" fill="#cfe4ff" fill-opacity="0.42"/><rect x="953" y="596" width="1" height="1" fill="#cfe4ff" fill-opacity="0.45"/><rect x="903" y="382" width="1" height="1" fill="#cfe4ff" fill-opacity="0.26"/><rect x="866" y="408" width="1" height="1" fill="#cfe4ff" fill-opacity="0.67"/><rect x="20" y="588" width="1" height="1" fill="#cfe4ff" fill-opacity="0.25"/><rect x="1004" y="652" width="1" height="1" fill="#cfe4ff" fill-opacity="0.30"/><rect x="1175" y="395" width="1" height="1" fill="#cfe4ff" fill-opacity="0.53"/><rect x="527" y="854" width="1" height="1" fill="#cfe4ff" fill-opacity="0.41"/><rect x="911" y="684" width="1" height="1" fill="#cfe4ff" fill-opacity="0.65"/><rect x="203" y="791" width="1" height="1" fill="#cfe4ff" fill-opacity="0.37"/><rect x="428" y="666" width="1" height="1" fill="#cfe4ff" fill-opacity="0.35"/><rect x="579" y="744" width="1" height="1" fill="#cfe4ff" fill-opacity="0.59"/><rect x="210" y="341" width="1" height="1" fill="#cfe4ff" fill-opacity="0.62"/><rect x="261" y="415" width="1" height="1" fill="#cfe4ff" fill-opacity="0.34"/><rect x="666" y="568" width="1" height="1" fill="#cfe4ff" fill-opacity="0.27"/><rect x="706" y="654" width="1" height="1" fill="#cfe4ff" fill-opacity="0.56"/><rect x="839" y="700" width="1" height="1" fill="#cfe4ff" fill-opacity="0.42"/><rect x="480" y="753" width="1" height="1" fill="#cfe4ff" fill-opacity="0.40"/><rect x="955" y="815" width="1" height="1" fill="#cfe4ff" fill-opacity="0.41"/><rect x="752" y="481" width="1" height="1" fill="#cfe4ff" fill-opacity="0.44"/><rect x="912" y="576" width="1" height="1" fill="#cfe4ff" fill-opacity="0.70"/><rect x="750" y="821" width="1" height="1" fill="#cfe4ff" fill-opacity="0.68"/><rect x="1160" y="686" width="1" height="1" fill="#cfe4ff" fill-opacity="0.40"/><rect x="1128" y="389" width="1" height="1" fill="#cfe4ff" fill-opacity="0.67"/><rect x="456" y="528" width="1" height="1" fill="#cfe4ff" fill-opacity="0.50"/><rect x="1266" y="436" width="1" height="1" fill="#cfe4ff" fill-opacity="0.31"/><rect x="92" y="611" width="1" height="1" fill="#cfe4ff" fill-opacity="0.45"/><rect x="477" y="839" width="1" height="1" fill="#cfe4ff" fill-opacity="0.57"/><rect x="755" y="816" width="1" height="1" fill="#cfe4ff" fill-opacity="0.60"/><rect x="249" y="349" width="1" height="1" fill="#cfe4ff" fill-opacity="0.42"/><rect x="31" y="716" width="1" height="1" fill="#cfe4ff" fill-opacity="0.55"/><rect x="890" y="812" width="1" height="1" fill="#cfe4ff" fill-opacity="0.38"/><rect x="754" y="511" width="1" height="1" fill="#cfe4ff" fill-opacity="0.62"/><rect x="1217" y="777" width="1" height="1" fill="#cfe4ff" fill-opacity="0.44"/><rect x="273" y="321" width="1" height="1" fill="#cfe4ff" fill-opacity="0.46"/><rect x="513" y="742" width="1" height="1" fill="#cfe4ff" fill-opacity="0.52"/><rect x="725" y="603" width="1" height="1" fill="#cfe4ff" fill-opacity="0.52"/><rect x="827" y="720" width="1" height="1" fill="#cfe4ff" fill-opacity="0.25"/><rect x="261" y="313" width="1" height="1" fill="#cfe4ff" fill-opacity="0.45"/><rect x="976" y="779" width="1" height="1" fill="#cfe4ff" fill-opacity="0.53"/><rect x="598" y="330" width="1" height="1" fill="#cfe4ff" fill-opacity="0.67"/><rect x="1" y="791" width="1" height="1" fill="#cfe4ff" fill-opacity="0.65"/><rect x="97" y="801" width="1" height="1" fill="#cfe4ff" fill-opacity="0.39"/><rect x="969" y="360" width="1" height="1" fill="#cfe4ff" fill-opacity="0.51"/><rect x="455" y="605" width="1" height="1" fill="#cfe4ff" fill-opacity="0.54"/><rect x="883" y="395" width="1" height="1" fill="#cfe4ff" fill-opacity="0.70"/><rect x="210" y="745" width="1" height="1" fill="#cfe4ff" fill-opacity="0.38"/><rect x="436" y="331" width="1" height="1" fill="#cfe4ff" fill-opacity="0.55"/><rect x="574" y="581" width="1" height="1" fill="#cfe4ff" fill-opacity="0.70"/><rect x="961" y="471" width="1" height="1" fill="#cfe4ff" fill-opacity="0.61"/><rect x="51" y="900" width="1" height="1" fill="#cfe4ff" fill-opacity="0.27"/><rect x="949" y="829" width="1" height="1" fill="#cfe4ff" fill-opacity="0.44"/><rect x="169" y="846" width="1" height="1" fill="#cfe4ff" fill-opacity="0.28"/><rect x="668" y="807" width="1" height="1" fill="#cfe4ff" fill-opacity="0.60"/><rect x="1223" y="491" width="1" height="1" fill="#cfe4ff" fill-opacity="0.66"/><rect x="170" y="778" width="1" height="1" fill="#cfe4ff" fill-opacity="0.54"/><rect x="21" y="480" width="1" height="1" fill="#cfe4ff" fill-opacity="0.43"/><rect x="947" y="434" width="1" height="1" fill="#cfe4ff" fill-opacity="0.63"/><rect x="945" y="847" width="1" height="1" fill="#cfe4ff" fill-opacity="0.44"/><rect x="305" y="317" width="1" height="1" fill="#cfe4ff" fill-opacity="0.63"/><rect x="370" y="470" width="1" height="1" fill="#cfe4ff" fill-opacity="0.65"/><rect x="86" y="836" width="1" height="1" fill="#cfe4ff" fill-opacity="0.38"/><rect x="229" y="816" width="1" height="1" fill="#cfe4ff" fill-opacity="0.69"/><rect x="679" y="488" width="1" height="1" fill="#cfe4ff" fill-opacity="0.64"/><rect x="1112" y="687" width="1" height="1" fill="#cfe4ff" fill-opacity="0.33"/><rect x="192" y="533" width="1" height="1" fill="#cfe4ff" fill-opacity="0.43"/><rect x="897" y="419" width="1" height="1" fill="#cfe4ff" fill-opacity="0.46"/><rect x="310" y="670" width="1" height="1" fill="#cfe4ff" fill-opacity="0.40"/><rect x="453" y="448" width="1" height="1" fill="#cfe4ff" fill-opacity="0.37"/><rect x="1209" y="749" width="1" height="1" fill="#cfe4ff" fill-opacity="0.36"/><rect x="900" y="413" width="1" height="1" fill="#cfe4ff" fill-opacity="0.34"/><rect x="138" y="437" width="1" height="1" fill="#cfe4ff" fill-opacity="0.35"/><rect x="250" y="896" width="1" height="1" fill="#cfe4ff" fill-opacity="0.53"/><rect x="286" y="573" width="1" height="1" fill="#cfe4ff" fill-opacity="0.50"/><rect x="122" y="694" width="1" height="1" fill="#cfe4ff" fill-opacity="0.54"/><rect x="1039" y="549" width="1" height="1" fill="#cfe4ff" fill-opacity="0.38"/><rect x="125" y="764" width="1" height="1" fill="#cfe4ff" fill-opacity="0.57"/><rect x="1048" y="412" width="1" height="1" fill="#cfe4ff" fill-opacity="0.45"/><rect x="770" y="345" width="1" height="1" fill="#cfe4ff" fill-opacity="0.31"/><rect x="617" y="858" width="1" height="1" fill="#cfe4ff" fill-opacity="0.45"/><rect x="318" y="804" width="1" height="1" fill="#cfe4ff" fill-opacity="0.33"/><rect x="793" y="593" width="1" height="1" fill="#cfe4ff" fill-opacity="0.36"/><rect x="434" y="513" width="1" height="1" fill="#cfe4ff" fill-opacity="0.38"/><rect x="479" y="615" width="1" height="1" fill="#cfe4ff" fill-opacity="0.58"/><rect x="560" y="820" width="1" height="1" fill="#cfe4ff" fill-opacity="0.43"/><rect x="961" y="552" width="1" height="1" fill="#cfe4ff" fill-opacity="0.40"/><rect x="761" y="600" width="1" height="1" fill="#cfe4ff" fill-opacity="0.32"/><rect x="52" y="750" width="1" height="1" fill="#cfe4ff" fill-opacity="0.49"/><rect x="1120" y="840" width="1" height="1" fill="#cfe4ff" fill-opacity="0.69"/><rect x="535" y="852" width="1" height="1" fill="#cfe4ff" fill-opacity="0.43"/><rect x="133" y="703" width="1" height="1" fill="#cfe4ff" fill-opacity="0.44"/><rect x="710" y="623" width="1" height="1" fill="#cfe4ff" fill-opacity="0.67"/><rect x="1103" y="779" width="1" height="1" fill="#cfe4ff" fill-opacity="0.65"/><rect x="225" y="742" width="1" height="1" fill="#cfe4ff" fill-opacity="0.37"/><rect x="317" y="816" width="1" height="1" fill="#cfe4ff" fill-opacity="0.44"/><rect x="908" y="434" width="1" height="1" fill="#cfe4ff" fill-opacity="0.38"/><rect x="918" y="409" width="1" height="1" fill="#cfe4ff" fill-opacity="0.39"/><rect x="1105" y="335" width="1" height="1" fill="#cfe4ff" fill-opacity="0.54"/><rect x="685" y="436" width="1" height="1" fill="#cfe4ff" fill-opacity="0.53"/><rect x="863" y="641" width="1" height="1" fill="#cfe4ff" fill-opacity="0.62"/><rect x="1140" y="690" width="1" height="1" fill="#cfe4ff" fill-opacity="0.58"/><rect x="1173" y="890" width="1" height="1" fill="#cfe4ff" fill-opacity="0.56"/><rect x="798" y="497" width="1" height="1" fill="#cfe4ff" fill-opacity="0.32"/><rect x="744" y="757" width="1" height="1" fill="#cfe4ff" fill-opacity="0.40"/><rect x="29" y="769" width="1" height="1" fill="#cfe4ff" fill-opacity="0.60"/><rect x="1074" y="791" width="1" height="1" fill="#cfe4ff" fill-opacity="0.34"/><rect x="42" y="368" width="1" height="1" fill="#cfe4ff" fill-opacity="0.50"/><rect x="1160" y="847" width="1" height="1" fill="#cfe4ff" fill-opacity="0.27"/><rect x="916" y="820" width="1" height="1" fill="#cfe4ff" fill-opacity="0.44"/><rect x="648" y="492" width="1" height="1" fill="#cfe4ff" fill-opacity="0.43"/><rect x="703" y="842" width="1" height="1" fill="#cfe4ff" fill-opacity="0.45"/><rect x="444" y="772" width="1" height="1" fill="#cfe4ff" fill-opacity="0.53"/><rect x="1058" y="324" width="1" height="1" fill="#cfe4ff" fill-opacity="0.59"/><rect x="1051" y="665" width="1" height="1" fill="#cfe4ff" fill-opacity="0.58"/><rect x="1011" y="894" width="1" height="1" fill="#cfe4ff" fill-opacity="0.35"/><rect x="932" y="881" width="1" height="1" fill="#cfe4ff" fill-opacity="0.55"/><rect x="1070" y="405" width="1" height="1" fill="#cfe4ff" fill-opacity="0.58"/><rect x="496" y="539" width="1" height="1" fill="#cfe4ff" fill-opacity="0.36"/><rect x="577" y="586" width="1" height="1" fill="#cfe4ff" fill-opacity="0.52"/><rect x="66" y="323" width="1" height="1" fill="#cfe4ff" fill-opacity="0.63"/><rect x="1072" y="550" width="1" height="1" fill="#cfe4ff" fill-opacity="0.39"/><rect x="1135" y="487" width="1" height="1" fill="#cfe4ff" fill-opacity="0.58"/><rect x="364" y="720" width="1" height="1" fill="#cfe4ff" fill-opacity="0.28"/><rect x="473" y="657" width="1" height="1" fill="#cfe4ff" fill-opacity="0.43"/><rect x="604" y="676" width="1" height="1" fill="#cfe4ff" fill-opacity="0.56"/><rect x="377" y="449" width="1" height="1" fill="#cfe4ff" fill-opacity="0.44"/><rect x="471" y="607" width="1" height="1" fill="#cfe4ff" fill-opacity="0.36"/><rect x="490" y="442" width="1" height="1" fill="#cfe4ff" fill-opacity="0.26"/><rect x="1133" y="860" width="1" height="1" fill="#cfe4ff" fill-opacity="0.32"/><rect x="1027" y="793" width="1" height="1" fill="#cfe4ff" fill-opacity="0.35"/><rect x="431" y="687" width="1" height="1" fill="#cfe4ff" fill-opacity="0.30"/><rect x="1137" y="523" width="1" height="1" fill="#cfe4ff" fill-opacity="0.57"/><rect x="661" y="744" width="1" height="1" fill="#cfe4ff" fill-opacity="0.30"/><rect x="471" y="835" width="1" height="1" fill="#cfe4ff" fill-opacity="0.41"/><rect x="391" y="844" width="1" height="1" fill="#cfe4ff" fill-opacity="0.36"/><rect x="1002" y="752" width="1" height="1" fill="#cfe4ff" fill-opacity="0.32"/><rect x="485" y="329" width="1" height="1" fill="#cfe4ff" fill-opacity="0.58"/><rect x="38" y="741" width="1" height="1" fill="#cfe4ff" fill-opacity="0.53"/><rect x="835" y="713" width="1" height="1" fill="#cfe4ff" fill-opacity="0.37"/><rect x="979" y="794" width="1" height="1" fill="#cfe4ff" fill-opacity="0.35"/><rect x="32" y="404" width="1" height="1" fill="#cfe4ff" fill-opacity="0.64"/><rect x="750" y="602" width="1" height="1" fill="#cfe4ff" fill-opacity="0.68"/><rect x="875" y="678" width="1" height="1" fill="#cfe4ff" fill-opacity="0.43"/><rect x="453" y="443" width="1" height="1" fill="#cfe4ff" fill-opacity="0.28"/><rect x="562" y="726" width="1" height="1" fill="#cfe4ff" fill-opacity="0.66"/><rect x="472" y="497" width="1" height="1" fill="#cfe4ff" fill-opacity="0.27"/><rect x="266" y="709" width="1" height="1" fill="#cfe4ff" fill-opacity="0.54"/><rect x="1117" y="843" width="1" height="1" fill="#cfe4ff" fill-opacity="0.42"/><rect x="55" y="525" width="1" height="1" fill="#cfe4ff" fill-opacity="0.49"/><rect x="922" y="727" width="1" height="1" fill="#cfe4ff" fill-opacity="0.27"/><rect x="348" y="488" width="1" height="1" fill="#cfe4ff" fill-opacity="0.55"/><rect x="349" y="857" width="1" height="1" fill="#cfe4ff" fill-opacity="0.45"/><rect x="928" y="359" width="1" height="1" fill="#cfe4ff" fill-opacity="0.34"/><rect x="285" y="627" width="1" height="1" fill="#cfe4ff" fill-opacity="0.56"/><rect x="759" y="330" width="1" height="1" fill="#cfe4ff" fill-opacity="0.50"/><rect x="753" y="572" width="1" height="1" fill="#cfe4ff" fill-opacity="0.44"/><rect x="245" y="727" width="1" height="1" fill="#cfe4ff" fill-opacity="0.44"/><rect x="312" y="331" width="1" height="1" fill="#cfe4ff" fill-opacity="0.64"/><rect x="315" y="654" width="1" height="1" fill="#cfe4ff" fill-opacity="0.35"/><rect x="321" y="873" width="1" height="1" fill="#cfe4ff" fill-opacity="0.46"/><rect x="257" y="331" width="1" height="1" fill="#cfe4ff" fill-opacity="0.33"/><rect x="1123" y="746" width="1" height="1" fill="#cfe4ff" fill-opacity="0.44"/><rect x="894" y="640" width="1" height="1" fill="#cfe4ff" fill-opacity="0.29"/><rect x="537" y="521" width="1" height="1" fill="#cfe4ff" fill-opacity="0.38"/><rect x="122" y="443" width="1" height="1" fill="#cfe4ff" fill-opacity="0.64"/><rect x="366" y="618" width="1" height="1" fill="#cfe4ff" fill-opacity="0.37"/><rect x="1024" y="321" width="1" height="1" fill="#cfe4ff" fill-opacity="0.48"/><rect x="1126" y="406" width="1" height="1" fill="#cfe4ff" fill-opacity="0.35"/><rect x="530" y="558" width="1" height="1" fill="#cfe4ff" fill-opacity="0.33"/><rect x="962" y="642" width="1" height="1" fill="#cfe4ff" fill-opacity="0.44"/><rect x="266" y="800" width="1" height="1" fill="#cfe4ff" fill-opacity="0.51"/><rect x="604" y="407" width="1" height="1" fill="#cfe4ff" fill-opacity="0.29"/><rect x="1145" y="705" width="1" height="1" fill="#cfe4ff" fill-opacity="0.37"/><rect x="506" y="725" width="1" height="1" fill="#cfe4ff" fill-opacity="0.66"/><rect x="720" y="899" width="1" height="1" fill="#cfe4ff" fill-opacity="0.54"/><rect x="952" y="894" width="1" height="1" fill="#cfe4ff" fill-opacity="0.27"/><rect x="1238" y="396" width="1" height="1" fill="#cfe4ff" fill-opacity="0.49"/><rect x="88" y="421" width="1" height="1" fill="#cfe4ff" fill-opacity="0.42"/><rect x="302" y="859" width="1" height="1" fill="#cfe4ff" fill-opacity="0.47"/><rect x="596" y="630" width="1" height="1" fill="#cfe4ff" fill-opacity="0.52"/><rect x="839" y="418" width="1" height="1" fill="#cfe4ff" fill-opacity="0.30"/><rect x="1186" y="703" width="1" height="1" fill="#cfe4ff" fill-opacity="0.62"/><rect x="1126" y="612" width="1" height="1" fill="#cfe4ff" fill-opacity="0.45"/><rect x="328" y="792" width="1" height="1" fill="#cfe4ff" fill-opacity="0.30"/><rect x="858" y="897" width="1" height="1" fill="#cfe4ff" fill-opacity="0.48"/><rect x="715" y="680" width="1" height="1" fill="#cfe4ff" fill-opacity="0.56"/><rect x="1158" y="736" width="1" height="1" fill="#cfe4ff" fill-opacity="0.53"/><rect x="848" y="539" width="1" height="1" fill="#cfe4ff" fill-opacity="0.48"/></svg>
<div class="a" style="left:0;top:0;width:1280px;height:30px;background:#d4d0c8;box-shadow:inset 0 -1px #404040,inset 0 -2px #808080"></div>
<div class="a raised" style="left:2px;top:2px;width:62px;height:22px"></div>
<svg class="a" style="left:4px;top:4px" width="18" height="18" viewBox="0 0 18 18">
<path d="M2 3 Q5 1.5 8.5 3 L7.5 8 Q4.5 6.8 1.5 8 Z" fill="#f06a22"/>
<path d="M9.5 3.3 Q12.5 5 16 3.5 L15 9 Q12 10 8.5 8.5 Z" fill="#6cc04a"/>
<path d="M1.3 9 Q4.5 7.8 7.3 9 L6.3 14.5 Q3.5 13 0.5 14.5 Z" fill="#4a7ae0"/>
<path d="M8.3 9.5 Q11.5 11 14.8 10 L14 15.5 Q11 16.5 7.5 15 Z" fill="#f0c620"/>
</svg>
<svg class="a" style="left:22px;top:6px" width="40" height="14" viewBox="0 0 40 14" fill="none" stroke="#000" stroke-width="1.8" stroke-linecap="square">
<path d="M1.5 2.5 H8 Q6 8 1 12 M5 7.5 L9 12"/>
<path d="M14 1 Q13 5 11 7 M13.5 3 H19 Q17 10 11.5 12.5 M13.5 6.5 L17 8.5"/>
<path d="M22 7 H30"/>
<path d="M33 1 V13 M33 5 Q37 6.5 39 9"/>
</svg>
<div class="a raised" style="left:69px;top:2px;width:160px;height:22px"></div>
<div class="a" style="left:232px;top:2px;width:160px;height:22px;background-color:#d4d0c8;background-image:linear-gradient(45deg,#fff 25%,transparent 25%,transparent 75%,#fff 75%),linear-gradient(45deg,#fff 25%,transparent 25%,transparent 75%,#fff 75%);background-size:2px 2px;background-position:0 0,1px 1px;box-shadow:inset 1px 1px #404040,inset -1px -1px #fff,inset 2px 2px #808080"></div>
<div class="a raised" style="left:395px;top:2px;width:160px;height:22px"></div>
<div class="a raised" style="left:558px;top:2px;width:160px;height:22px"></div>
<svg class="a" style="left:73px;top:5px" width="16" height="16" viewBox="0 0 16 16">
<path d="M3 1 H10 L13 4 V15 H3 Z" fill="#fff" stroke="#000"/><rect x="2" y="2" width="6" height="6" fill="#1a2a9a"/><path d="M3 6 L7 3" stroke="#e8e040" stroke-width="1.5"/></svg>
<div class="u" style="left:92px;top:6px;font-size:13px;transform:scaleX(.71)">C:¥...¥</div>
<svg class="a" style="left:120px;top:7px" width="52" height="12" viewBox="0 0 66 12" preserveAspectRatio="none" fill="none" stroke="#000" stroke-width="1">
<path d="M2 1.5 H8 M1 4.5 H10 M5.5 4.5 Q5.5 9 2 11 M9 0.5 L10 2 M10.5 0 L11.5 1.5"/>
<path d="M14 2 H20 Q18 7 13.5 11 M17 7 L21 10.5"/>
<path d="M26 1 Q25 4 23 6 M25.5 2.5 H31 Q29 8 24 11"/>
<path d="M35 0.5 V11 M35 4 Q38 5 40 7"/>
<path d="M43 5 L44 7.5 M46 4.5 L47 7 M50 4 Q49.5 8 46 10.5"/>
<path d="M53 2 H60 Q59 8 54 11 M62 0 a1.2 1.2 0 1 0 0.1 0"/>
</svg>
<div class="u" style="left:172px;top:6px;transform:scaleX(.8)">¥memo.t...</div>
<svg class="a" style="left:237px;top:5px" width="16" height="16" viewBox="0 0 16 16">
<rect x="1" y="1" width="6" height="10" fill="#000"/><rect x="2" y="3" width="4" height="4" fill="#5a9a5a"/><rect x="3" y="8" width="3" height="2" fill="#1a8a1a"/>
<rect x="9" y="1" width="6" height="10" fill="#000"/><rect x="10" y="3" width="4" height="4" fill="#5a9a5a"/><rect x="11" y="8" width="3" height="2" fill="#1a8a1a"/>
<path d="M3 13 L5 12 M11 13 L13 12 M4 14 H12" stroke="#000"/></svg>
<div class="u" style="left:257px;top:7px;font-weight:bold;font-size:13px;transform:none">[COM9] X-CTU</div>
<svg class="a" style="left:400px;top:5px" width="16" height="16" viewBox="0 0 16 16">
<path d="M2 2 Q3 12 8 15 Q13 12 14 2" fill="none" stroke="#6a5a3a" stroke-width="2"/><path d="M4 3 L7 12" stroke="#3ac05a" stroke-width="2"/><path d="M9 3 L8 12" stroke="#e06040" stroke-width="2"/><path d="M11 2 L10 11" stroke="#3a3a3a" stroke-width="1.5"/></svg>
<div class="u" style="left:420px;top:6px">win01.JPG - </div>
<svg class="a" style="left:482px;top:7px" width="50" height="12" viewBox="0 0 50 12" fill="none" stroke="#000" stroke-width="1">
<path d="M1 8 L5 3 L11 10 M10 1 a1.2 1.2 0 1 0 0.1 0"/>
<path d="M19 1 Q17 5 13 8 M17 4 V11.5"/>
<path d="M24 2 L26 4 M23 10 Q29 9 33 2"/>
<path d="M38 0.5 V11 M38 4 Q41 5 43 7"/>
</svg>
<svg class="a" style="left:563px;top:5px" width="17" height="16" viewBox="0 0 17 16">
<path d="M1 4 L2 2 H7 L8 4 H15 V14 H1 Z" fill="#e8c040" stroke="#8a6a10"/><circle cx="7" cy="9" r="3" fill="#cfe6f6"/></svg>
<div class="u" style="left:584px;top:6px">WORK1 (F:)</div>
<div class="a" style="left:1108px;top:6px;width:17px;height:16px;background:#0a1e6e;color:#fff;font-size:12px;line-height:16px;text-align:center;letter-spacing:-0.5px">JP</div>
<div class="a" style="left:1128px;top:3px;width:2px;height:21px;box-shadow:inset 1px 0 #808080,inset -1px 0 #fff"></div>
<svg class="a" style="left:1135px;top:5px" width="20" height="18" viewBox="0 0 20 18">
<ellipse cx="8" cy="8" rx="6" ry="6" fill="#707070"/><path d="M13 3 V14 Q13 16 11 16" stroke="#707070" stroke-width="2" fill="none"/><path d="M10 11 L12 8" stroke="#fff"/></svg>
<svg class="a" style="left:1165px;top:6px" width="14" height="18" viewBox="0 0 14 18" fill="none" stroke="#9a9a9a">
<path d="M2 16 L5 2 L8 16 M3 11 H7"/><path d="M11 12 V14" stroke="#bbb"/></svg>
<div class="a" style="left:1185px;top:2px;width:93px;height:24px;box-shadow:inset 1px 1px #808080,inset -1px -1px #fff"></div>
<svg class="a" style="left:1189px;top:10px" width="10" height="8" viewBox="0 0 10 8" fill="none" stroke="#000" stroke-width="1.6"><path d="M4.5 1 L1.5 4 L4.5 7 M8.5 1 L5.5 4 L8.5 7"/></svg>
<svg class="a" style="left:1202px;top:5px" width="16" height="17" viewBox="0 0 16 17">
<path d="M4 10 L13 5 L15 12 L6 16 Z" fill="#5a5a7a"/><path d="M6 11 L12 8 L13 11 L7 14Z" fill="#9aa0d0"/><path d="M2 6 L6 2 L8 5 L12 4 L10 9 L4 10 Z" fill="#22cc22"/></svg>
<svg class="a" style="left:1220px;top:5px" width="18" height="18" viewBox="0 0 18 18">
<circle cx="8" cy="8" r="6.5" fill="#6a6a6a"/><circle cx="8" cy="8" r="4.5" fill="#b8b8b8"/><circle cx="7" cy="7" r="2" fill="#e0e0e0"/><path d="M10 15 Q15 14 16 10" stroke="#9a9ae0" fill="none"/></svg>
<div class="a" style="left:1244px;top:7px;font-size:13px;line-height:14px;transform:scaleX(.86);transform-origin:0 0">16:29</div>
<svg class="a" style="left:24px;top:31px" width="32" height="32" viewBox="0 0 32 32"><path d="M5 6 Q12 9 20 6 Q26 3 29 4 L26 25 Q20 31 12 31 Q8 30 8 28 Z" fill="#a8d0f4"/><path d="M5 6 Q12 9 20 6 Q26 3 29 4" fill="none" stroke="#e8f4fc" stroke-width="2"/><path d="M8 28 Q10 22 26 22" fill="none" stroke="#d8ecfc" stroke-width="2"/><path d="M16 12 Q20 9 23 13 M22 19 Q19 23 16 19" stroke="#12a02a" stroke-width="3.2" fill="none"/><path d="M21 10 L25 14 L21 15 Z M17 21 L14 17 L18 17 Z" fill="#12a02a"/></svg>
<svg class="a" style="left:24px;top:68px" width="32" height="13" viewBox="0 0 32 13" fill="none" stroke="#fff" stroke-width="1.2" style="filter:drop-shadow(1px 1px 0 #000)">
<path d="M2 2.5 Q5 1.5 8 2.5 M2 6.5 Q1 11 9 10.5 M8.5 0.5 L9.5 2 M10.5 0 L11.5 1.5"/><path d="M12 2 H16 Q13.5 7 13 9 Q13 11.5 15 10.5 Q17.5 9 18 5 M15.5 6 Q18 8 19.5 11.5"/><path d="M22 0.5 L21 3 M21 2 H24.5 M27 0.5 L26 3 M26 2 H30.5 M20 5.5 H24 M22 4 V12.5 M22 6.5 L20 10 M22 6.5 L24 9 M25 4.5 H30 V12 H25 Z M25 7 H30 M25 9.5 H30"/></svg>
<svg class="a" style="left:104px;top:31px" width="32" height="32" viewBox="0 0 32 32"><path d="M2 3 H6 L7 4.5 H15 V16 H2 Z" fill="#e8e070" stroke="#c8c050" stroke-width="0.6"/><path d="M3 20 H12 L15 23 V33 H3 Z" fill="#ddd"/><path d="M17.5 2.5 H27.5 V6.5 H21.5 V8.5 H26.5 V11.5 H21.5 V15.5 H17.5 Z" fill="none" stroke="#ccc"/><path d="M17.5 16.5 H27.5 V19.5 H24.5 V24.5 H20.5 V19.5 H17.5 Z" fill="none" stroke="#ccc"/><path d="M17.5 25.5 H25.5 Q28 25.5 28 28.5 Q28 31.5 25.5 31.5 H21.5 V33 H17.5 Z" fill="none" stroke="#ccc"/><rect x="0" y="22" width="10" height="10" fill="#fff"/><path d="M10.5 22 V32.5 H0" stroke="#000" fill="none"/><path d="M3 30 Q3 27 6.5 25 M4.5 24.2 H8 V27.5" stroke="#000" stroke-width="1.7" fill="none"/></svg>
<div class="lbl" style="left:75px;top:68px;width:90px"><span style="display:inline-block;transform:scaleX(.92)">CUTFTP32</span></div>
<svg class="a" style="left:184px;top:31px" width="32" height="32" viewBox="0 0 32 32"><path d="M9 1 V3" stroke="#2a9a2a" stroke-width="2"/><rect x="2.5" y="3.5" width="11" height="14" fill="#0a2a0a" stroke="#2a9a2a"/><rect x="4.5" y="5.5" width="7" height="5" fill="#c8d0c0"/><path d="M4 13 H12 M4 15.5 H12" stroke="#2a8a2a"/><path d="M25 1 V3" stroke="#2a9a2a" stroke-width="2"/><rect x="18.5" y="3.5" width="11" height="14" fill="#0a2a0a" stroke="#2a9a2a"/><rect x="20.5" y="5.5" width="7" height="5" fill="#c8d0c0"/><path d="M20 13 H28 M20 15.5 H28" stroke="#2a8a2a"/><path d="M12 30 H26 L28 25" stroke="#888" stroke-width="2" fill="none"/><path d="M23 23 H31 L27 27 Z" fill="#999"/><rect x="0" y="22" width="10" height="10" fill="#fff"/><path d="M10.5 22 V32.5 H0" stroke="#000" fill="none"/><path d="M3 30 Q3 27 6.5 25 M4.5 24.2 H8 V27.5" stroke="#000" stroke-width="1.7" fill="none"/></svg>
<div class="lbl" style="left:155px;top:68px;width:90px"><span style="display:inline-block;transform:scaleX(.92)">X-CTU</span></div>
<svg class="a" style="left:24px;top:107px" width="32" height="32" viewBox="0 0 32 32"><path d="M2 6 L4 3 H12 L14 6 H28 V26 H2 Z" fill="#f0d890"/><circle cx="13" cy="13" r="7" fill="#c8e4f8" stroke="#d8c890" stroke-width="2"/><path d="M18 18 L26 26" stroke="#c8a860" stroke-width="3"/><rect x="0" y="22" width="10" height="10" fill="#fff"/><path d="M10.5 22 V32.5 H0" stroke="#000" fill="none"/><path d="M3 30 Q3 27 6.5 25 M4.5 24.2 H8 V27.5" stroke="#000" stroke-width="1.7" fill="none"/></svg>
<div class="lbl" style="left:-5px;top:144px;width:90px"><span style="display:inline-block;transform:scaleX(.92)">explorer</span></div>
<svg class="a" style="left:104px;top:107px" width="32" height="32" viewBox="0 0 32 32"><path d="M4 2 V26 M28 2 V26" stroke="#ccc" stroke-width="2"/><path d="M8 6 H20 L24 10 V26 H8 Z" fill="#000"/><path d="M8 6 L10 4 H16 L18 6" fill="#f0d020"/><rect x="9" y="8" width="10" height="6" fill="#f0d020"/><rect x="12" y="12" width="10" height="14" fill="#f4f4f4"/><path d="M14 16 H20 M14 19 H20 M14 22 H18" stroke="#333"/><rect x="0" y="22" width="10" height="10" fill="#fff"/><path d="M10.5 22 V32.5 H0" stroke="#000" fill="none"/><path d="M3 30 Q3 27 6.5 25 M4.5 24.2 H8 V27.5" stroke="#000" stroke-width="1.7" fill="none"/></svg>
<div class="lbl" style="left:75px;top:144px;width:90px"><span style="display:inline-block;transform:scaleX(.92)">+Lhaca</span></div>
<svg class="a" style="left:184px;top:107px" width="32" height="32" viewBox="0 0 32 32"><path d="M6 3 H26 V28 H6 Z" fill="#f4f4ec" stroke="#c8c8c0"/><path d="M7 3 H25" stroke="#c0a060" stroke-width="2" stroke-dasharray="2 1"/><path d="M9 9 H22 M9 13 H22 M9 17 H20 M9 21 H18" stroke="#8ab" stroke-width="1"/></svg>
<div class="lbl" style="left:155px;top:144px;width:90px"><span style="display:inline-block;transform:scaleX(.92)">memo.txt</span></div>
<svg class="a" style="left:24px;top:183px" width="32" height="32" viewBox="0 0 32 32"><circle cx="18" cy="15" r="11" fill="#2a70c8"/><ellipse cx="17" cy="11" rx="7" ry="6" fill="#8ad8f0"/><ellipse cx="19" cy="17" rx="6" ry="5" fill="#2a60c0"/><path d="M9 6 Q2 12 4 20 Q7 30 18 31 Q29 30 31 18 Q31 10 27 6 Q30 14 26 20 Q22 26 15 24 Q10 21 12 14 Q10 12 13 8 Z" fill="#e8601a"/><path d="M27 7 Q31 14 28 21 Q24 28 16 29" stroke="#f4b020" stroke-width="3" fill="none"/><rect x="0" y="22" width="10" height="10" fill="#fff"/><path d="M10.5 22 V32.5 H0" stroke="#000" fill="none"/><path d="M3 30 Q3 27 6.5 25 M4.5 24.2 H8 V27.5" stroke="#000" stroke-width="1.7" fill="none"/></svg>
<div class="lbl" style="left:-5px;top:220px;width:90px"><span style="display:inline-block;transform:scaleX(.92)">Mozilla Firefox</span></div>
<svg class="a" style="left:104px;top:183px" width="32" height="32" viewBox="0 0 32 32"><rect x="3" y="6" width="18" height="22" fill="#e8a830"/><rect x="5" y="10" width="14" height="6" fill="#f4c860"/><rect x="5" y="19" width="14" height="6" fill="#f4c860"/><path d="M24 2 V30" stroke="#4a6ac8" stroke-width="5" stroke-dasharray="2 2"/><path d="M12 2 H30" stroke="#4a80d0" stroke-width="3"/><rect x="0" y="22" width="10" height="10" fill="#fff"/><path d="M10.5 22 V32.5 H0" stroke="#000" fill="none"/><path d="M3 30 Q3 27 6.5 25 M4.5 24.2 H8 V27.5" stroke="#000" stroke-width="1.7" fill="none"/></svg>
<div class="lbl" style="left:75px;top:220px;width:90px"><span style="display:inline-block;transform:scaleX(.92)">WinZip</span></div>
<svg class="a" style="left:24px;top:259px" width="32" height="32" viewBox="0 0 32 32"><rect x="4" y="1" width="26" height="30" fill="#a8e4e4"/><path d="M7 4 H14 M22 4 H28 M7 7 H12 M24 7 H28 M22 10 H28 M24 13 H28 M7 28 H12 M22 28 H28" stroke="#12304a" stroke-width="1.3"/><path d="M1 16 Q8 12 16 14 Q24 8 30 10 L32 20 Q26 24 22 31 H14 Q12 22 1 20 Z" fill="#1a20e0"/><path d="M22 2 Q18 5 12 6 M9 11 H26 M17 5 V19 M16 12 Q12 17 8 19 M18 12 Q22 17 28 19 M12 21 H21 Q19 27 15 30 M20 24 Q21 29 26 29 V27" stroke="#f0f040" stroke-width="2" fill="none"/><rect x="0" y="22" width="10" height="10" fill="#fff"/><path d="M10.5 22 V32.5 H0" stroke="#000" fill="none"/><path d="M3 30 Q3 27 6.5 25 M4.5 24.2 H8 V27.5" stroke="#000" stroke-width="1.7" fill="none"/></svg>
<div class="lbl" style="left:-5px;top:296px;width:90px"><span style="display:inline-block;transform:scaleX(.92)">HIDEMARU</span></div>
<svg class="a" style="left:104px;top:259px" width="32" height="32" viewBox="0 0 32 32"><rect x="3" y="4" width="26" height="9" rx="2" fill="#a050a0"/><rect x="3" y="13" width="26" height="8" rx="2" fill="#3060c0"/><rect x="3" y="21" width="26" height="8" rx="2" fill="#30a040"/><path d="M3 6 V28" stroke="#ddd" stroke-width="2"/><rect x="15" y="2" width="4" height="28" fill="#b07030"/><rect x="0" y="22" width="10" height="10" fill="#fff"/><path d="M10.5 22 V32.5 H0" stroke="#000" fill="none"/><path d="M3 30 Q3 27 6.5 25 M4.5 24.2 H8 V27.5" stroke="#000" stroke-width="1.7" fill="none"/></svg>
<div class="lbl" style="left:75px;top:296px;width:90px"><span style="display:inline-block;transform:scaleX(.92)">WinRAR</span></div>
<svg class="a" style="left:24px;top:335px" width="32" height="32" viewBox="0 0 32 32"><circle cx="16" cy="16" r="15" fill="#4a3028"/><text x="14" y="24" font-size="21" font-weight="bold" fill="#fff" font-family="Liberation Sans">5</text><rect x="0" y="22" width="10" height="10" fill="#fff"/><path d="M10.5 22 V32.5 H0" stroke="#000" fill="none"/><path d="M3 30 Q3 27 6.5 25 M4.5 24.2 H8 V27.5" stroke="#000" stroke-width="1.7" fill="none"/></svg>
<div class="lbl" style="left:-5px;top:372px;width:90px"><span style="display:inline-block;transform:scaleX(.92)">Max 5.1</span></div>
<svg class="a" style="left:104px;top:335px" width="32" height="32" viewBox="0 0 32 32"><rect x="0" y="0" width="32" height="32" fill="#e00010"/><path d="M0 14 H32 M12 0 V32" stroke="#fff" stroke-width="10"/><path d="M0 14 H32 M12 0 V32" stroke="#102880" stroke-width="5"/><rect x="0" y="22" width="10" height="10" fill="#fff"/><path d="M10.5 22 V32.5 H0" stroke="#000" fill="none"/><path d="M3 30 Q3 27 6.5 25 M4.5 24.2 H8 V27.5" stroke="#000" stroke-width="1.7" fill="none"/></svg>
<div class="lbl" style="left:75px;top:372px;width:90px"><span style="display:inline-block;transform:scaleX(.92)">MPG2JPG</span></div>
<svg class="a" style="left:24px;top:411px" width="32" height="32" viewBox="0 0 32 32"><rect x="0.5" y="0.5" width="31" height="31" rx="3" fill="#3e3228" stroke="#6a5a48"/><path d="M20 30 L31 16 M24 31 L31 22 M18 31 L30 12" stroke="#a8a090" stroke-width="1.2"/><circle cx="8" cy="7" r="3" fill="none" stroke="#fff" stroke-width="1.5"/><circle cx="8" cy="15" r="3" fill="none" stroke="#fff" stroke-width="1.5"/><path d="M13.5 19 V4 H18 V13 H13.5" stroke="#fff" stroke-width="1.3" fill="none"/><rect x="0" y="22" width="10" height="10" fill="#fff"/><path d="M10.5 22 V32.5 H0" stroke="#000" fill="none"/><path d="M3 30 Q3 27 6.5 25 M4.5 24.2 H8 V27.5" stroke="#000" stroke-width="1.7" fill="none"/></svg>
<div class="lbl" style="left:-5px;top:448px;width:90px"><span style="display:inline-block;transform:scaleX(.92)">Processing</span></div>
<svg class="a" style="left:104px;top:411px" width="32" height="32" viewBox="0 0 32 32"><path d="M4 14 L16 4 L30 10 L30 22 L18 30 L4 24 Z" fill="#2030c0"/><path d="M4 14 L18 20 L30 10" stroke="#5070f0" fill="none" stroke-width="2"/><text x="1" y="22" font-size="13" font-weight="bold" font-style="italic" fill="#f0e020" font-family="Liberation Sans">TeX</text><rect x="0" y="22" width="10" height="10" fill="#fff"/><path d="M10.5 22 V32.5 H0" stroke="#000" fill="none"/><path d="M3 30 Q3 27 6.5 25 M4.5 24.2 H8 V27.5" stroke="#000" stroke-width="1.7" fill="none"/></svg>
<div class="lbl" style="left:75px;top:448px;width:90px"><span style="display:inline-block;transform:scaleX(.92)">WinShell</span></div>
<svg class="a" style="left:24px;top:487px" width="32" height="32" viewBox="0 0 32 32"><ellipse cx="9" cy="8" rx="7.5" ry="2.2" fill="#e02838"/><ellipse cx="24" cy="7.5" rx="7.5" ry="2.2" fill="#e02838"/><rect x="15" y="9" width="2" height="3" fill="#60b0d0"/><path d="M4 29 Q4 11 16 11 Q28 11 28 29 Z" fill="#f4f020"/><path d="M4 29 Q4 15 10 12 Q7 20 7 29 Z" fill="#70a8f0"/><path d="M28 29 Q28 15 22 12 Q25 20 25 29 Z" fill="#80c8e8"/><path d="M14 11 Q12 20 12.5 29 H19.5 Q20 20 18 11 Z" fill="#f08a10"/><rect x="5" y="25" width="22" height="4" fill="#d0e040"/><path d="M5 25 H27" stroke="#30a040"/><rect x="0" y="22" width="10" height="10" fill="#fff"/><path d="M10.5 22 V32.5 H0" stroke="#000" fill="none"/><path d="M3 30 Q3 27 6.5 25 M4.5 24.2 H8 V27.5" stroke="#000" stroke-width="1.7" fill="none"/></svg>
<div class="lbl" style="left:-5px;top:524px;width:90px"><span style="display:inline-block;transform:scaleX(.92)">Propeller Tool</span></div>
<div class="lbl" style="left:-5px;top:536px;width:90px"><span style="display:inline-block;transform:scaleX(.92)">v1.06</span></div>
<svg class="a" style="left:104px;top:487px" width="32" height="32" viewBox="0 0 32 32"><rect x="0" y="0" width="32" height="32" fill="#e8e8e8"/><path d="M0 4 L20 30 M0 12 L14 30 M6 0 L28 28 M14 0 L30 20" stroke="#000" stroke-width="3"/><path d="M20 12 V26" stroke="#e02020" stroke-width="2"/><circle cx="17" cy="26" r="4" fill="#e02020"/><path d="M20 12 Q26 12 28 18" stroke="#e02020" stroke-width="3" fill="none"/><rect x="0" y="22" width="10" height="10" fill="#fff"/><path d="M10.5 22 V32.5 H0" stroke="#000" fill="none"/><path d="M3 30 Q3 27 6.5 25 M4.5 24.2 H8 V27.5" stroke="#000" stroke-width="1.7" fill="none"/></svg>
<div class="lbl" style="left:75px;top:524px;width:90px"><span style="display:inline-block;transform:scaleX(.92)">STUDIO3</span></div>
<svg class="a" style="left:24px;top:563px" width="32" height="32" viewBox="0 0 32 32"><rect x="0" y="0" width="32" height="32" fill="#111"/><path d="M2 4 V30 M6 4 V30 M2 8 H12 M2 14 H12 M2 20 H12" stroke="#888" stroke-width="0.6"/><path d="M10 30 Q10 8 30 6 V30 Z" fill="#ccc" opacity=".85"/><path d="M14 30 Q16 12 30 10 M18 30 Q20 16 30 14" stroke="#333" fill="none"/><rect x="0" y="22" width="10" height="10" fill="#fff"/><path d="M10.5 22 V32.5 H0" stroke="#000" fill="none"/><path d="M3 30 Q3 27 6.5 25 M4.5 24.2 H8 V27.5" stroke="#000" stroke-width="1.7" fill="none"/></svg>
<div class="lbl" style="left:-5px;top:600px;width:90px"><span style="display:inline-block;transform:scaleX(.92)">VOCALOID2</span></div>
<div class="lbl" style="left:-5px;top:612px;width:90px"><span style="display:inline-block;transform:scaleX(.92)">Editor</span></div>
<svg class="a" style="left:104px;top:563px" width="32" height="32" viewBox="0 0 32 32"><rect x="0" y="0" width="32" height="32" fill="#6a6a70"/><circle cx="16" cy="15" r="12" fill="#3a3a40"/><circle cx="16" cy="15" r="9" fill="#8a8a70"/><path d="M13 11 H20 V18" stroke="#c8c860" stroke-width="2" fill="none"/><rect x="0" y="22" width="10" height="10" fill="#fff"/><path d="M10.5 22 V32.5 H0" stroke="#000" fill="none"/><path d="M3 30 Q3 27 6.5 25 M4.5 24.2 H8 V27.5" stroke="#000" stroke-width="1.7" fill="none"/></svg>
<div class="lbl" style="left:75px;top:600px;width:90px"><span style="display:inline-block;transform:scaleX(.92)">musique</span></div>
<svg class="a" style="left:24px;top:639px" width="32" height="32" viewBox="0 0 32 32"><rect x="0" y="2" width="32" height="26" fill="#0a2a90"/><rect x="2" y="6" width="28" height="20" fill="#000"/><text x="4" y="19" font-size="10" font-weight="bold" fill="#fff" font-family="Liberation Mono">C:\_</text><rect x="0" y="22" width="10" height="10" fill="#fff"/><path d="M10.5 22 V32.5 H0" stroke="#000" fill="none"/><path d="M3 30 Q3 27 6.5 25 M4.5 24.2 H8 V27.5" stroke="#000" stroke-width="1.7" fill="none"/></svg>
<div class="lbl" style="left:-5px;top:676px;width:90px"><span style="display:inline-block;transform:scaleX(.92)">DOS</span></div>
<svg class="a" style="left:104px;top:639px" width="32" height="32" viewBox="0 0 32 32"><rect x="0" y="0" width="32" height="32" fill="#d8d8d8"/><rect x="0" y="0" width="32" height="3" fill="#1020a0"/><rect x="0" y="29" width="32" height="3" fill="#1020a0"/><rect x="0" y="10" width="32" height="12" fill="#fff"/><text x="1" y="21" font-size="12" font-weight="bold" fill="#000" font-family="Liberation Sans" textLength="30" lengthAdjust="spacingAndGlyphs">MSS</text><rect x="0" y="22" width="10" height="10" fill="#fff"/><path d="M10.5 22 V32.5 H0" stroke="#000" fill="none"/><path d="M3 30 Q3 27 6.5 25 M4.5 24.2 H8 V27.5" stroke="#000" stroke-width="1.7" fill="none"/></svg>
<div class="lbl" style="left:75px;top:676px;width:90px"><span style="display:inline-block;transform:scaleX(.92)">Music Studio</span></div>
<div class="lbl" style="left:75px;top:688px;width:90px"><span style="display:inline-block;transform:scaleX(.92)">Independence</span></div>
<svg class="a" style="left:24px;top:715px" width="32" height="32" viewBox="0 0 32 32"><circle cx="16" cy="14" r="11" fill="none" stroke="#3aa0f0" stroke-width="5"/><path d="M16 14 L24 4 M22 22 L28 28" stroke="#3aa0f0" stroke-width="4"/><rect x="0" y="22" width="10" height="10" fill="#fff"/><path d="M10.5 22 V32.5 H0" stroke="#000" fill="none"/><path d="M3 30 Q3 27 6.5 25 M4.5 24.2 H8 V27.5" stroke="#000" stroke-width="1.7" fill="none"/></svg>
<div class="lbl" style="left:-5px;top:752px;width:90px"><span style="display:inline-block;transform:scaleX(.92)">QuickTime</span></div>
<div class="lbl" style="left:-5px;top:764px;width:90px"><span style="display:inline-block;transform:scaleX(.92)">Player</span></div>
<svg class="a" style="left:104px;top:715px" width="32" height="32" viewBox="0 0 32 32"><rect x="0" y="0" width="32" height="32" fill="#102a8a"/><path d="M10 16 L32 0 V32 Z" fill="#4a80e0"/><circle cx="18" cy="16" r="8" fill="#e0f0ff" opacity=".9"/><path d="M6 4 V14 Q2 14 2 17 Q6 18 8 14 V6 L12 8" stroke="#9ad0ff" fill="none" stroke-width="2"/><rect x="0" y="22" width="10" height="10" fill="#fff"/><path d="M10.5 22 V32.5 H0" stroke="#000" fill="none"/><path d="M3 30 Q3 27 6.5 25 M4.5 24.2 H8 V27.5" stroke="#000" stroke-width="1.7" fill="none"/></svg>
<div class="lbl" style="left:75px;top:752px;width:90px"><span style="display:inline-block;transform:scaleX(.92)">Domino</span></div>
<svg class="a" style="left:24px;top:791px" width="32" height="32" viewBox="0 0 32 32"><path d="M16 1 L26 26 H6 Z" fill="#f08010"/><path d="M12 12 H20 M9 19 H23" stroke="#fff" stroke-width="3"/><path d="M2 26 H30 V30 H2 Z" fill="#f09020"/><rect x="0" y="22" width="10" height="10" fill="#fff"/><path d="M10.5 22 V32.5 H0" stroke="#000" fill="none"/><path d="M3 30 Q3 27 6.5 25 M4.5 24.2 H8 V27.5" stroke="#000" stroke-width="1.7" fill="none"/></svg>
<div class="lbl" style="left:-5px;top:828px;width:90px"><span style="display:inline-block;transform:scaleX(.92)">VLC media</span></div>
<div class="lbl" style="left:-5px;top:840px;width:90px"><span style="display:inline-block;transform:scaleX(.92)">player</span></div>
<svg class="a" style="left:104px;top:791px" width="32" height="32" viewBox="0 0 32 32"><rect x="0.5" y="0.5" width="31" height="31" rx="5" fill="#fff" stroke="#000"/><path d="M5 8 H16 V13 H5 Z" fill="#c060c0" opacity=".8"/><path d="M12 5 L18 3 L24 6 L28 10 L26 16 L24 10 L18 8 Z" fill="#3050e0"/><path d="M4 15 H29 M4 19 H28" stroke="#222" stroke-width="2"/><path d="M18 21 L20 30 M24 18 L23 30" stroke="#6060d0" stroke-width="1.5"/><rect x="0" y="22" width="10" height="10" fill="#fff"/><path d="M10.5 22 V32.5 H0" stroke="#000" fill="none"/><path d="M3 30 Q3 27 6.5 25 M4.5 24.2 H8 V27.5" stroke="#000" stroke-width="1.7" fill="none"/></svg>
<div class="lbl" style="left:75px;top:828px;width:90px"><span style="display:inline-block;transform:scaleX(.92)">ScanSnap</span></div>
<div class="lbl" style="left:75px;top:840px;width:90px"><span style="display:inline-block;transform:scaleX(.92)">Organizer</span></div>
<svg class="a" style="left:24px;top:867px" width="32" height="32" viewBox="0 0 32 32"><circle cx="16" cy="16" r="14" fill="#40a040"/><circle cx="16" cy="16" r="11" fill="#f0f0f0"/><circle cx="16" cy="16" r="9" fill="#2060c8"/><path d="M12 10 L22 16 L12 22 Z" fill="#fff"/><path d="M4 10 Q10 2 20 3" stroke="#f0a020" stroke-width="3" fill="none"/><rect x="0" y="22" width="10" height="10" fill="#fff"/><path d="M10.5 22 V32.5 H0" stroke="#000" fill="none"/><path d="M3 30 Q3 27 6.5 25 M4.5 24.2 H8 V27.5" stroke="#000" stroke-width="1.7" fill="none"/></svg>
<div class="lbl" style="left:-5px;top:904px;width:90px"><span style="display:inline-block;transform:scaleX(.92)">Windows</span></div>
<div class="lbl" style="left:-5px;top:916px;width:90px"><span style="display:inline-block;transform:scaleX(.92)">Media Player</span></div>
<svg class="a" style="left:104px;top:867px" width="32" height="32" viewBox="0 0 32 32"><rect x="0" y="0" width="32" height="32" fill="#108a60"/><rect x="0" y="0" width="12" height="32" fill="#1aa02a"/><text x="1" y="23" font-size="17" font-weight="bold" fill="#fff" font-family="Liberation Sans">ED</text><rect x="0" y="22" width="10" height="10" fill="#fff"/><path d="M10.5 22 V32.5 H0" stroke="#000" fill="none"/><path d="M3 30 Q3 27 6.5 25 M4.5 24.2 H8 V27.5" stroke="#000" stroke-width="1.7" fill="none"/></svg>
<div class="lbl" style="left:75px;top:904px;width:90px"><span style="display:inline-block;transform:scaleX(.92)">E_D</span></div>
<svg class="a" style="left:24px;top:943px" width="32" height="32" viewBox="0 0 32 32"><rect x="1" y="1" width="30" height="30" rx="6" fill="#0a6ad0" stroke="#333"/><path d="M6 22 L20 6 M10 24 L26 8 M14 27 L28 12" stroke="#fff" stroke-width="3" stroke-dasharray="4 2"/><rect x="0" y="22" width="10" height="10" fill="#fff"/><path d="M10.5 22 V32.5 H0" stroke="#000" fill="none"/><path d="M3 30 Q3 27 6.5 25 M4.5 24.2 H8 V27.5" stroke="#000" stroke-width="1.7" fill="none"/></svg>
<div class="lbl" style="left:-5px;top:980px;width:90px"><span style="display:inline-block;transform:scaleX(.92)">FLV Player</span></div>
<svg class="a" style="left:104px;top:943px" width="32" height="32" viewBox="0 0 32 32"><rect x="2" y="1" width="28" height="30" fill="#f8f8f8" stroke="#ccc"/><path d="M8 26 Q14 14 16 4 Q18 12 22 18 Q26 22 28 20 Q20 20 10 24" stroke="#d01010" stroke-width="1.5" fill="none"/><rect x="0" y="22" width="10" height="10" fill="#fff"/><path d="M10.5 22 V32.5 H0" stroke="#000" fill="none"/><path d="M3 30 Q3 27 6.5 25 M4.5 24.2 H8 V27.5" stroke="#000" stroke-width="1.7" fill="none"/></svg>
<div class="lbl" style="left:75px;top:980px;width:90px"><span style="display:inline-block;transform:scaleX(.92)">Adobe Acrobat</span></div>
<div class="lbl" style="left:75px;top:992px;width:90px"><span style="display:inline-block;transform:scaleX(.92)">8 Standard</span></div>
<div class="win" style="left:241px;top:85px;width:456px;height:587px"></div>
<div class="a" style="left:244px;top:88px;width:450px;height:18px;background:linear-gradient(to right,#808080,#c0c0c0)"></div>
<svg class="a" style="left:246px;top:89px" width="16" height="16" viewBox="0 0 16 16">
<rect x="0" y="1" width="7" height="11" fill="#000"/><rect x="1.5" y="3" width="4" height="5" fill="#9ad89a"/><rect x="2" y="9" width="3" height="2" fill="#1a9a1a"/>
<rect x="8" y="1" width="7" height="11" fill="#000"/><rect x="9.5" y="3" width="4" height="5" fill="#9ad89a"/><rect x="10" y="9" width="3" height="2" fill="#1a9a1a"/>
<path d="M2 14 H5 M10 14 H13" stroke="#333"/></svg>
<div class="a" style="left:265px;top:90px;font:bold 13px/14px 'Liberation Sans';color:#d4d0c8;white-space:pre">[COM9] X-CTU</div>
<div class="tbtn" style="left:642px;top:90px"></div>
<div class="a" style="left:646px;top:99px;width:6px;height:2px;background:#000"></div>
<div class="tbtn" style="left:658px;top:90px"></div>
<div class="a" style="left:661px;top:92px;width:9px;height:9px;border:1px solid #808080;border-top-width:2px;box-shadow:1px 1px #fff"></div>
<div class="tbtn" style="left:676px;top:90px"></div>
<svg class="a" style="left:680px;top:93px" width="8" height="7" viewBox="0 0 8 7"><path d="M0.5 0.5 L7.5 6.5 M7.5 0.5 L0.5 6.5" stroke="#000" stroke-width="1.6"/></svg>
<div class="u" style="left:252px;top:108px;color:#707070">About</div>
<div class="u" style="left:295px;top:108px;color:#707070">XModem</div>
<div class="a" style="left:244px;top:146px;width:450px;height:504px;box-shadow:inset 1px 1px #fff,inset -1px -1px #404040,inset -2px -2px #808080"></div>
<div class="a" style="left:246px;top:129px;width:67px;height:18px;background:#d4d0c8;border-radius:2px 2px 0 0;box-shadow:inset 1px 1px #fff,inset -1px 0 #404040,inset -2px 0 #808080"></div>
<div class="u" style="left:252px;top:130px">PC Settings</div>
<div class="a" style="left:313px;top:129px;width:67px;height:18px;background:#d4d0c8;border-radius:2px 2px 0 0;box-shadow:inset 1px 1px #fff,inset -1px 0 #404040,inset -2px 0 #808080"></div>
<div class="u" style="left:320px;top:130px">Range Test</div>
<div class="a" style="left:435px;top:129px;width:111px;height:18px;background:#d4d0c8;border-radius:2px 2px 0 0;box-shadow:inset 1px 1px #fff,inset -1px 0 #404040,inset -2px 0 #808080"></div>
<div class="u" style="left:439px;top:130px">Modem Configuration</div>
<div class="a" style="left:380px;top:126px;width:55px;height:23px;background:#d4d0c8;border-radius:2px 2px 0 0;box-shadow:inset 1px 1px #fff,inset -1px 0 #404040,inset -2px 0 #808080"></div>
<div class="u" style="left:388px;top:129px">Terminal</div>
<div class="a" style="left:381px;top:146px;width:52px;height:2px;background:#d4d0c8"></div>
<div class="a" style="left:248px;top:157px;width:92px;height:32px;box-shadow:inset 1px 1px #808080,inset -1px -1px #fff,inset 2px 2px #fff,inset -2px -2px #808080"></div>
<div class="u" style="left:256px;top:151px;background:#d4d0c8;padding:0 1px">Line Status</div>
<div class="a" style="left:345px;top:157px;width:147px;height:32px;box-shadow:inset 1px 1px #808080,inset -1px -1px #fff,inset 2px 2px #fff,inset -2px -2px #808080"></div>
<div class="u" style="left:353px;top:151px;background:#d4d0c8;padding:0 1px">Assert</div>
<div class="a" style="left:252px;top:166px;width:29px;height:16px;background:#20e020;box-shadow:inset -1px -1px #fff,inset 1px 1px #909090"></div>
<div class="u" style="left:256px;top:167px;font-size:12px">CTS</div>
<div class="a" style="left:283px;top:166px;width:22px;height:16px;background:#000;box-shadow:inset -1px -1px #fff"></div>
<div class="u" style="left:286px;top:167px;font-size:12px;color:#fff">CD</div>
<div class="a" style="left:307px;top:166px;width:28px;height:16px;background:#000;box-shadow:inset -1px -1px #fff"></div>
<div class="u" style="left:310px;top:167px;font-size:12px;color:#fff">DSR</div>
<div class="a" style="left:348px;top:166px;width:45px;height:16px;box-shadow:inset 1px 1px #808080,inset -1px -1px #fff"></div>
<div class="u" style="left:351px;top:167px">DTR</div>
<div class="a" style="left:378px;top:167px;width:13px;height:13px;background:#fff;box-shadow:inset 1px 1px #808080,inset -1px -1px #fff,inset 2px 2px #404040,inset -2px -2px #d4d0c8"></div>
<div class="a" style="left:395px;top:166px;width:43px;height:16px;box-shadow:inset 1px 1px #808080,inset -1px -1px #fff"></div>
<div class="u" style="left:398px;top:167px">RTS</div>
<div class="a" style="left:423px;top:167px;width:13px;height:13px;background:#fff;box-shadow:inset 1px 1px #808080,inset -1px -1px #fff,inset 2px 2px #404040,inset -2px -2px #d4d0c8"></div>
<div class="a" style="left:440px;top:166px;width:49px;height:16px;box-shadow:inset 1px 1px #808080,inset -1px -1px #fff"></div>
<div class="u" style="left:443px;top:167px">Break</div>
<div class="a" style="left:474px;top:167px;width:13px;height:13px;background:#fff;box-shadow:inset 1px 1px #808080,inset -1px -1px #fff,inset 2px 2px #404040,inset -2px -2px #d4d0c8"></div>
<div class="a raised" style="left:497px;top:151px;width:55px;height:40px"></div>
<div class="a" style="left:484.0px;top:157px;width:80px;text-align:center;font-size:13px;line-height:14px;white-space:pre;transform:scaleX(.79)">Close</div>
<div class="a" style="left:484.0px;top:170px;width:80px;text-align:center;font-size:13px;line-height:14px;white-space:pre;transform:scaleX(.79)">Com Port</div>
<div class="a raised" style="left:554px;top:151px;width:54px;height:40px"></div>
<div class="a" style="left:540.5px;top:157px;width:80px;text-align:center;font-size:13px;line-height:14px;white-space:pre;transform:scaleX(.79)">Assemble</div>
<div class="a" style="left:540.5px;top:170px;width:80px;text-align:center;font-size:13px;line-height:14px;white-space:pre;transform:scaleX(.79)">Packet</div>
<div class="a raised" style="left:608px;top:151px;width:44px;height:40px"></div>
<div class="a" style="left:589.5px;top:157px;width:80px;text-align:center;font-size:13px;line-height:14px;white-space:pre;transform:scaleX(.79)">Clear</div>
<div class="a" style="left:589.5px;top:170px;width:80px;text-align:center;font-size:13px;line-height:14px;white-space:pre;transform:scaleX(.79)">Screen</div>
<div class="a raised" style="left:653px;top:151px;width:36px;height:40px"></div>
<div class="a" style="left:630.5px;top:157px;width:80px;text-align:center;font-size:13px;line-height:14px;white-space:pre;transform:scaleX(.79)">Hide</div>
<div class="a" style="left:630.5px;top:170px;width:80px;text-align:center;font-size:13px;line-height:14px;white-space:pre;transform:scaleX(.79)">Hex</div>
<div class="a" style="left:246px;top:195px;width:117px;height:451px;background:#fff;box-shadow:inset 1px 1px #707070"></div>
<div class="a" style="left:369px;top:195px;width:321px;height:453px;background:#fff;box-shadow:inset 1px 1px #707070"></div>
<pre class="a" style="left:248px;top:197px;font:16px/15px 'Liberation Mono';letter-spacing:0.588px;color:#c01830;transform:scaleX(.85);transform-origin:0 0">............
.
............
...... !&quot;#$%
&amp;&#x27;()
*+,-./012345
6789:;&lt;=&gt;?
@ABCDEFGHIJK
LMNOPQRSTUVW
XYZ[\]
^_`abcdefghi
jklmnopqrstu
vwxyz{|}
~ ..........
............
............
............
............
............
............
............
............
............
..........</pre>
<pre class="a" style="left:371px;top:197px;font:16px/15px 'Liberation Mono';letter-spacing:0.588px;color:#c01830;transform:scaleX(.85);transform-origin:0 0">00 01 02 03 04 05 06 07 08 09 0A 0B
0C 0D
0E 0F 10 11 12 13 14 15 16 17 18 19
1A 1B 1C 1D 1E 1F 20 21 22 23 24 25
26 27 28 29 2A 2B 2C 2D 2E 2F 30 31
32 33 34 35 36 37 38 39 3A 3B 3C 3D
3E 3F 40 41 42 43 44 45 46 47 48 49
4A 4B 4C 4D 4E 4F 50 51 52 53 54 55
56 57 58 59 5A 5B 5C 5D 5E 5F 60 61
62 63 64 65 66 67 68 69 6A 6B 6C 6D
6E 6F 70 71 72 73 74 75 76 77 78 79
7A 7B 7C 7D 7E 7F 80 81 82 83 84 85
86 87 88 89 8A 8B 8C 8D 8E 8F 90 91
92 93 94 95 96 97 98 99 9A 9B 9C 9D
9E 9F A0 A1 A2 A3 A4 A5 A6 A7 A8 A9
AA AB AC AD AE AF B0 B1 B2 B3 B4 B5
B6 B7 B8 B9 BA BB BC BD BE BF C0 C1
C2 C3 C4 C5 C6 C7 C8 C9 CA CB CC CD
CE CF D0 D1 D2 D3 D4 D5 D6 D7 D8 D9
DA DB DC DD DE DF E0 E1 E2 E3 E4 E5
E6 E7 E8 E9 EA EB EC ED EE EF F0 F1
F2 F3 F4 F5 F6 F7 F8 F9 FA FB FC FD
FE FF</pre>
<div class="a" style="left:246px;top:651px;width:48px;height:16px;box-shadow:inset 1px 1px #808080,inset -1px -1px #fff"></div>
<div class="u" style="left:248px;top:653px">COM9</div>
<div class="a" style="left:295px;top:651px;width:241px;height:16px;box-shadow:inset 1px 1px #808080,inset -1px -1px #fff"></div>
<div class="u" style="left:299px;top:653px">19200 8-N-1  FLOW:NONE</div>
<div class="a" style="left:538px;top:651px;width:100px;height:16px;box-shadow:inset 1px 1px #808080,inset -1px -1px #fff"></div>
<div class="u" style="left:540px;top:653px">Rx: 256 bytes</div>
<div class="a" style="left:639px;top:651px;width:54px;height:16px;box-shadow:inset 1px 1px #808080,inset -1px -1px #fff"></div>
<div class="win" style="left:294px;top:711px;width:496px;height:184px"></div>
<div class="a" style="left:297px;top:714px;width:490px;height:18px;background:linear-gradient(to right,#0a246a,#a6caf0)"></div>
<div class="a" style="left:299px;top:716px;font:bold 13px/14px 'Liberation Sans';color:#fff;white-space:pre">[COM9] Send Packet</div>
<div class="tbtn" style="left:770px;top:716px"></div>
<svg class="a" style="left:774px;top:719px" width="8" height="7" viewBox="0 0 8 7"><path d="M0.5 0.5 L7.5 6.5 M7.5 0.5 L0.5 6.5" stroke="#000" stroke-width="1.6"/></svg>
<div class="a" style="left:308px;top:744px;width:470px;height:101px;background:#fff;box-shadow:inset 1px 1px #707070"></div>
<div class="u" style="left:309px;top:848px">Byte count:  0</div>
<div class="a" style="left:308px;top:865px;width:76px;height:24px;background:#d4d0c8;box-shadow:inset 1px 1px #000,inset -1px -1px #000,inset -2px -2px #404040,inset 2px 2px #fff,inset -3px -3px #808080"></div>
<div class="a" style="left:312px;top:869px;width:68px;height:16px;border:1px dotted #000"></div>
<div class="a" style="left:306px;top:869px;width:80px;text-align:center;font-size:13px;line-height:14px;transform:scaleX(.79)">Close</div>
<div class="a raised" style="left:389px;top:865px;width:76px;height:24px"></div>
<div class="a" style="left:387px;top:869px;width:80px;text-align:center;font-size:13px;line-height:14px;transform:scaleX(.79)">Send Data</div>
<div class="a" style="left:616px;top:854px;width:163px;height:37px;box-shadow:inset 1px 1px #808080,inset -1px -1px #fff,inset 2px 2px #fff,inset -2px -2px #808080"></div>
<div class="u" style="left:623px;top:848px;background:#d4d0c8;padding:0 1px">Display</div>
<div class="a raised" style="left:629px;top:863px;width:76px;height:24px"></div>
<div class="a" style="left:627px;top:867px;width:80px;text-align:center;font-size:13px;line-height:14px;transform:scaleX(.79)">Clear</div>
<svg class="a" style="left:723px;top:859px" width="12" height="12" viewBox="0 0 12 12"><circle cx="6" cy="6" r="5.5" fill="#fff"/><path d="M10 2 A5.5 5.5 0 0 0 2 10" stroke="#808080" fill="none"/><path d="M9 3 A4.3 4.3 0 0 0 3 9" stroke="#404040" fill="none"/><path d="M2 10 A5.5 5.5 0 0 0 10 2" stroke="#fff" fill="none"/></svg>
<svg class="a" style="left:723px;top:875px" width="12" height="12" viewBox="0 0 12 12"><circle cx="6" cy="6" r="5.5" fill="#fff"/><path d="M10 2 A5.5 5.5 0 0 0 2 10" stroke="#808080" fill="none"/><path d="M9 3 A4.3 4.3 0 0 0 3 9" stroke="#404040" fill="none"/><path d="M2 10 A5.5 5.5 0 0 0 10 2" stroke="#fff" fill="none"/><circle cx="6" cy="6" r="2" fill="#000"/></svg>
<div class="u" style="left:741px;top:859px">HEX</div>
<div class="u" style="left:740px;top:875px">ASCII</div>
<div class="win" style="left:868px;top:356px;width:340px;height:557px"></div>
<div class="a" style="left:871px;top:359px;width:334px;height:18px;background:linear-gradient(to right,#808080,#c0c0c0)"></div>
<svg class="a" style="left:873px;top:360px" width="16" height="16" viewBox="0 0 16 16">
<path d="M3 1 H10 L13 4 V15 H3 Z" fill="#fff" stroke="#000"/><rect x="2" y="2" width="6" height="6" fill="#1a2a9a"/><path d="M3 6 L7 3" stroke="#e8e040" stroke-width="1.5"/></svg>
<div class="a" style="left:892px;top:361px;font:bold 13px/14px 'Liberation Sans';color:#d4d0c8;white-space:pre;transform:scaleX(.85);transform-origin:0 0">C:¥...¥</div>
<svg class="a" style="left:926px;top:362px" width="57" height="13" viewBox="0 0 66 13" preserveAspectRatio="none" fill="none" stroke="#d4d0c8" stroke-width="1.6">
<path d="M2 1.5 H9 M1 5 H11 M6 5 Q6 10 2 12 M10 0.5 L11 2 M11.5 0 L12.5 1.5"/>
<path d="M15 2 H22 Q20 7 15 12 M18.5 7 L23 11.5"/>
<path d="M28 1 Q27 4 25 6 M27.5 2.5 H33 Q31 8 26 12"/>
<path d="M37 0.5 V12 M37 4 Q40 5 42 7"/>
<path d="M45 5 L46 8 M48 4.5 L49 7.5 M52 4 Q51.5 9 47 11.5"/>
<path d="M55 2 H62 Q61 8 56 12 M64 0 a1.2 1.2 0 1 0 0.1 0"/>
</svg>
<div class="a" style="left:983px;top:361px;font:bold 13px/14px Liberation Sans;color:#d4d0c8;white-space:pre;transform:scaleX(.92);transform-origin:0 0">¥memo.txt</div><div class="a" style="left:1051px;top:368px;width:10px;height:2px;background:#d4d0c8"></div>
<svg class="a" style="left:1066px;top:362px" width="26" height="13" viewBox="0 0 26 13" preserveAspectRatio="none" fill="none" stroke="#d4d0c8" stroke-width="1.4">
<path d="M3 1 L10 0.5 M1 3 H12 M6.5 1 V6 M1 6 L6 4 M12 6 L7 4 M2 8 H11 M4 8 Q4 12 1 12.5 M8 8 V12 H12"/>
<path d="M15 3 H22 M19 0.5 V6 Q18 11 14 12.5 M22 3 V11 Q22 12 25 12 V9"/></svg>
<div class="tbtn" style="left:1152px;top:362px"></div>
<div class="a" style="left:1156px;top:371px;width:6px;height:2px;background:#000"></div>
<div class="tbtn" style="left:1168px;top:362px"></div>
<div class="a" style="left:1171px;top:364px;width:9px;height:9px;border:1px solid #000;border-top-width:2px"></div>
<div class="tbtn" style="left:1186px;top:362px"></div>
<svg class="a" style="left:1190px;top:365px" width="8" height="7" viewBox="0 0 8 7"><path d="M0.5 0.5 L7.5 6.5 M7.5 0.5 L0.5 6.5" stroke="#000" stroke-width="1.6"/></svg>
<svg class="a" style="left:878px;top:380px" width="280" height="32" viewBox="0 0 280 32" fill="none" stroke="#7a7a7a" stroke-width="1">
<g transform="translate(0,1)">
<path d="M1 2 H8 Q7 7 2 10.5 M9.5 4.5 H14 Q13.5 7 11 9 M12.5 6 V11 M20 1 Q18.5 4.5 15 7 M18.5 4 V11 M23 2 V6 Q23 9.5 21 11 M26 1.5 V10.5 Q28.5 9.5 30 6.5"/>
<path d="M34 0 Q31 5 34 11 M37 2 V10 M37 2 H41 M37 6 H40 M37 10.5 H42 M44 0 Q47 5 44 11"/>
<path d="M58 1 L55 5 H58 L55 9 L59 8 M61 1 H69 M61 3 V10 M61 3 H69 V6 H61 M63 6 V11 M66 6 V11 M61 8.5 H69 M69 6 V11"/>
<path d="M72 1 L71 5 M73 1 V6 M71 3 H82 M75 0 V6 M79 0 V6 M73 5 H82 M71 7 H82 M76.5 7 V11.5 M76 8 L71 11 M77 8 L82 11"/>
<path d="M87 0 Q84 5 87 11 M90 2 V10 M90 2 H94 M90 6 H93 M90 10.5 H95 M97 0 Q100 5 97 11"/>
<path d="M111 2 V11 M109 4 H113 M109 8 L113 5 M115 1 L120 1 M114 3 H121 V7 H114 Z M117.5 1 V11 M114 11 L117 8 M121 11 L118 8"/>
<path d="M124 2 H134 M129 0 V3 M126 3 L128 5 Q125 7 124 7.5 H134 L133 6 M129 7.5 V11.5 M128 8 L124 11 M130 8 L134 11"/>
<path d="M139 0 Q136 5 139 11 M147 2 Q144 1 142 3 Q142 5 145 6 Q148 7 147 9.5 Q145 11 142 10 M149 0 Q152 5 149 11"/>
<path d="M166 2 V4 M162 3 H171 Q170 9 164 11.5 M162 4 V6 M174 1 Q173 4 171.5 6 M173.5 4 V11 M178 2 L180 4 M177 10 Q182 9 185 3 M186 1 V11 M186 4 Q189 5 191 7 M189 0 L190 1.5 M191 0 L192 1.5 M193 2 V4 M195 3 H202 Q201 9 195 11.5 M195 4 V6"/>
<path d="M205 0 Q202 5 205 11 M207 2 L209 10 L211 4 L213 10 L215 2 M208 11.5 H214 M217 0 Q220 5 217 11"/>
<path d="M232 2 H241 Q240 6 236 8 M234 5 L237 9 M244 1 Q243 4 241.5 6 M243.5 3 H250 Q249 9 244 11.5 M253 2 H260 V10 H253 Z"/>
<path d="M264 0 Q261 5 264 11 M266 10 V2 L269 8 L272 2 V10 M266 11.5 H272 M274 0 Q277 5 274 11"/>
</g>
<g transform="translate(0,19)">
<path d="M2 1 Q6 1 8 0 M1 4 H9 L3 8 Q2 10 5 11 Q8 11 10 10"/>
<path d="M15 2 Q20 1 22 5 Q21 10 16 11 Q13 9 14 6 Q15 3 19 1"/>
<path d="M27 0 Q26 4 24 6 M26 3 V11 M29 3 V9 Q29 11 34 11 H36 V9 M28 6 L36 4 V7 L33 8 M32 1 V8"/>
<path d="M40 0 Q37 5 40 11 M46 1 Q43 1 43 5.5 Q43 10 46 10 Q49 10 49 5.5 Q49 1 46 1 M43 11.5 H49 M51 0 Q54 5 51 11"/>
</g>
</svg>
<div class="a" style="left:871px;top:415px;width:334px;height:494px;box-shadow:inset 1px 1px #808080,inset -1px -1px #fff,inset 2px 2px #404040,inset -2px -2px #d4d0c8"></div>
<div class="a" style="left:873px;top:417px;width:313px;height:490px;background:#000"></div>
<svg class="a" style="left:0;top:0" width="1280" height="1024"><path d="M882 427.5 H1186" stroke="#fff"/><path d="M882.5 418 V427" stroke="#fff"/><path d="M888.5 424 V427" stroke="#fff"/><path d="M894.5 424 V427" stroke="#fff"/><path d="M900.5 424 V427" stroke="#fff"/><path d="M906.5 424 V427" stroke="#fff"/><path d="M912.5 421 V427" stroke="#fff"/><path d="M918.5 424 V427" stroke="#fff"/><path d="M924.5 424 V427" stroke="#fff"/><path d="M930.5 424 V427" stroke="#fff"/><path d="M936.5 424 V427" stroke="#fff"/><path d="M942.5 418 V427" stroke="#fff"/><path d="M948.5 424 V427" stroke="#fff"/><path d="M954.5 424 V427" stroke="#fff"/><path d="M960.5 424 V427" stroke="#fff"/><path d="M966.5 424 V427" stroke="#fff"/><path d="M972.5 421 V427" stroke="#fff"/><path d="M978.5 424 V427" stroke="#fff"/><path d="M984.5 424 V427" stroke="#fff"/><path d="M990.5 424 V427" stroke="#fff"/><path d="M996.5 424 V427" stroke="#fff"/><path d="M1002.5 418 V427" stroke="#fff"/><path d="M1008.5 424 V427" stroke="#fff"/><path d="M1014.5 424 V427" stroke="#fff"/><path d="M1020.5 424 V427" stroke="#fff"/><path d="M1026.5 424 V427" stroke="#fff"/><path d="M1032.5 421 V427" stroke="#fff"/><path d="M1038.5 424 V427" stroke="#fff"/><path d="M1044.5 424 V427" stroke="#fff"/><path d="M1050.5 424 V427" stroke="#fff"/><path d="M1056.5 424 V427" stroke="#fff"/><path d="M1062.5 418 V427" stroke="#fff"/><path d="M1068.5 424 V427" stroke="#fff"/><path d="M1074.5 424 V427" stroke="#fff"/><path d="M1080.5 424 V427" stroke="#fff"/><path d="M1086.5 424 V427" stroke="#fff"/><path d="M1092.5 421 V427" stroke="#fff"/><path d="M1098.5 424 V427" stroke="#fff"/><path d="M1104.5 424 V427" stroke="#fff"/><path d="M1110.5 424 V427" stroke="#fff"/><path d="M1116.5 424 V427" stroke="#fff"/><path d="M1122.5 418 V427" stroke="#fff"/><path d="M1128.5 424 V427" stroke="#fff"/><path d="M1134.5 424 V427" stroke="#fff"/><path d="M1140.5 424 V427" stroke="#fff"/><path d="M1146.5 424 V427" stroke="#fff"/><path d="M1152.5 421 V427" stroke="#fff"/><path d="M1158.5 424 V427" stroke="#fff"/><path d="M1164.5 424 V427" stroke="#fff"/><path d="M1170.5 424 V427" stroke="#fff"/><path d="M1176.5 424 V427" stroke="#fff"/><path d="M1182.5 418 V427" stroke="#fff"/></svg>
<div class="a" style="left:1186px;top:417px;width:17px;height:490px;background-color:#d4d0c8;background-image:linear-gradient(45deg,#fff 25%,transparent 25%,transparent 75%,#fff 75%),linear-gradient(45deg,#fff 25%,transparent 25%,transparent 75%,#fff 75%);background-size:2px 2px;background-position:0 0,1px 1px"></div>
<div class="a raised" style="left:1186px;top:417px;width:16px;height:16px"></div>
<svg class="a" style="left:1190px;top:422px" width="8" height="5" viewBox="0 0 8 5"><path d="M0 4.5 L4 0.5 L8 4.5Z" fill="#808080"/></svg>
<div class="a raised" style="left:1186px;top:891px;width:16px;height:16px"></div>
<svg class="a" style="left:1190px;top:896px" width="8" height="5" viewBox="0 0 8 5"><path d="M0 0.5 L4 4.5 L8 0.5Z" fill="#808080"/></svg>
<pre class="a" style="left:882px;top:430px;font:14px/13px 'Liberation Mono';color:#fff;-webkit-text-stroke:0.15px #fff;transform:scaleX(.75);transform-origin:0 0">port = COM9

XBee [A]
Modem type = XB24
firmware version = 1083
13A2004000F069
CH = 0B
ID = ABCD
DH = 0
DL = 2
MY = 1
BD = 19200
NO PARITY
Timeout = 80
API DISABLED

XBee [B]
Modem type = XB24
firmware version = 1083
13A2004000F849
CH = 0B
ID = ABCD
DH = 0
DL = 1
<span style="color:#40e4f4">MY = 2</span>
BD = 19200
NO PARITY
Timeout = 80
API DISABLED




<span style="color:#e0102a">[EOF]</span></pre>
<svg class="a" style="left:0;top:0" width="1280" height="1024"><path d="M950.5 433 V441 M948.5 438 L950.5 441 L952.5 438" stroke="#e01028" stroke-width="1" fill="none"/><path d="M884.5 446 V454 M882.5 451 L884.5 454 L886.5 451" stroke="#e01028" stroke-width="1" fill="none"/><path d="M932.5 459 V467 M930.5 464 L932.5 467 L934.5 464" stroke="#e01028" stroke-width="1" fill="none"/><path d="M986.5 472 V480 M984.5 477 L986.5 480 L988.5 477" stroke="#e01028" stroke-width="1" fill="none"/><path d="M1022.5 485 V493 M1020.5 490 L1022.5 493 L1024.5 490" stroke="#e01028" stroke-width="1" fill="none"/><path d="M968.5 498 V506 M966.5 503 L968.5 506 L970.5 503" stroke="#e01028" stroke-width="1" fill="none"/><path d="M926.5 511 V519 M924.5 516 L926.5 519 L928.5 516" stroke="#e01028" stroke-width="1" fill="none"/><path d="M938.5 524 V532 M936.5 529 L938.5 532 L940.5 529" stroke="#e01028" stroke-width="1" fill="none"/><path d="M920.5 537 V545 M918.5 542 L920.5 545 L922.5 542" stroke="#e01028" stroke-width="1" fill="none"/><path d="M920.5 550 V558 M918.5 555 L920.5 558 L922.5 555" stroke="#e01028" stroke-width="1" fill="none"/><path d="M920.5 563 V571 M918.5 568 L920.5 571 L922.5 568" stroke="#e01028" stroke-width="1" fill="none"/><path d="M944.5 576 V584 M942.5 581 L944.5 584 L946.5 581" stroke="#e01028" stroke-width="1" fill="none"/><path d="M938.5 589 V597 M936.5 594 L938.5 597 L940.5 594" stroke="#e01028" stroke-width="1" fill="none"/><path d="M956.5 602 V610 M954.5 607 L956.5 610 L958.5 607" stroke="#e01028" stroke-width="1" fill="none"/><path d="M956.5 615 V623 M954.5 620 L956.5 623 L958.5 620" stroke="#e01028" stroke-width="1" fill="none"/><path d="M884.5 628 V636 M882.5 633 L884.5 636 L886.5 633" stroke="#e01028" stroke-width="1" fill="none"/><path d="M932.5 641 V649 M930.5 646 L932.5 649 L934.5 646" stroke="#e01028" stroke-width="1" fill="none"/><path d="M986.5 654 V662 M984.5 659 L986.5 662 L988.5 659" stroke="#e01028" stroke-width="1" fill="none"/><path d="M1022.5 667 V675 M1020.5 672 L1022.5 675 L1024.5 672" stroke="#e01028" stroke-width="1" fill="none"/><path d="M968.5 680 V688 M966.5 685 L968.5 688 L970.5 685" stroke="#e01028" stroke-width="1" fill="none"/><path d="M926.5 693 V701 M924.5 698 L926.5 701 L928.5 698" stroke="#e01028" stroke-width="1" fill="none"/><path d="M938.5 706 V714 M936.5 711 L938.5 714 L940.5 711" stroke="#e01028" stroke-width="1" fill="none"/><path d="M920.5 719 V727 M918.5 724 L920.5 727 L922.5 724" stroke="#e01028" stroke-width="1" fill="none"/><path d="M920.5 732 V740 M918.5 737 L920.5 740 L922.5 737" stroke="#e01028" stroke-width="1" fill="none"/><path d="M920.5 745 V753 M918.5 750 L920.5 753 L922.5 750" stroke="#e01028" stroke-width="1" fill="none"/><path d="M944.5 758 V766 M942.5 763 L944.5 766 L946.5 763" stroke="#e01028" stroke-width="1" fill="none"/><path d="M938.5 771 V779 M936.5 776 L938.5 779 L940.5 776" stroke="#e01028" stroke-width="1" fill="none"/><path d="M956.5 784 V792 M954.5 789 L956.5 792 L958.5 789" stroke="#e01028" stroke-width="1" fill="none"/><path d="M956.5 797 V805 M954.5 802 L956.5 805 L958.5 802" stroke="#e01028" stroke-width="1" fill="none"/><path d="M884.5 810 V818 M882.5 815 L884.5 818 L886.5 815" stroke="#e01028" stroke-width="1" fill="none"/><path d="M884.5 823 V831 M882.5 828 L884.5 831 L886.5 828" stroke="#e01028" stroke-width="1" fill="none"/><path d="M884.5 836 V844 M882.5 841 L884.5 844 L886.5 841" stroke="#e01028" stroke-width="1" fill="none"/><path d="M884.5 849 V857 M882.5 854 L884.5 857 L886.5 854" stroke="#e01028" stroke-width="1" fill="none"/></svg>
</body></html>
